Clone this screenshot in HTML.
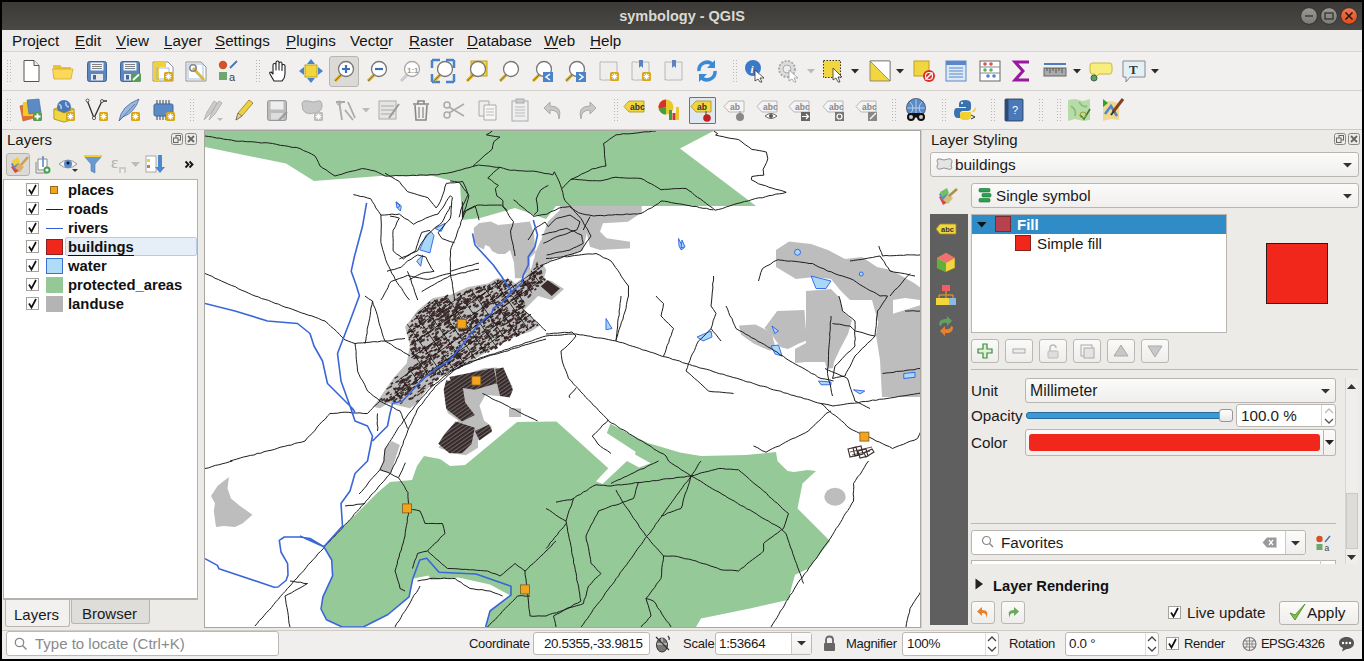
<!DOCTYPE html>
<html><head><meta charset="utf-8">
<style>
*{box-sizing:border-box;margin:0;padding:0}
html,body{width:1364px;height:661px;overflow:hidden;background:#000;font-family:"Liberation Sans",sans-serif;color:#000;position:relative}
.a{position:absolute}
u{text-decoration:none;border-bottom:1.5px solid #141414;display:inline-block;line-height:14px}
svg{overflow:visible}
</style></head><body>
<div class="a" style="left:2px;top:2px;width:1360px;height:28px;background:linear-gradient(#3b3a36,#4a4844)"></div>
<div class="a" style="left:0px;top:8.73px;font-size:14.5px;line-height:14.5px;font-weight:bold;color:#dcd9d2;white-space:nowrap;width:1364px;text-align:center;left:0">symbology - QGIS</div>
<svg class="a" style="left:1299px;top:6px" width="20" height="20" viewBox="0 0 20 20"><defs><linearGradient id="gc" x1="0" y1="0" x2="0" y2="1"><stop offset="0" stop-color="#f07a55"/><stop offset="1" stop-color="#df4a1c"/></linearGradient><linearGradient id="gg" x1="0" y1="0" x2="0" y2="1"><stop offset="0" stop-color="#9a9994"/><stop offset="1" stop-color="#7c7b76"/></linearGradient></defs><g transform="translate(10,10)"><circle r="8.3" fill="url(#gg)" stroke="#2c2b28" stroke-width="0.8"/><path d="M-4,0H4" stroke="#3a3935" stroke-width="1.4"/></g></svg>
<svg class="a" style="left:1319px;top:6px" width="20" height="20" viewBox="0 0 20 20"><defs><linearGradient id="gc" x1="0" y1="0" x2="0" y2="1"><stop offset="0" stop-color="#f07a55"/><stop offset="1" stop-color="#df4a1c"/></linearGradient><linearGradient id="gg" x1="0" y1="0" x2="0" y2="1"><stop offset="0" stop-color="#9a9994"/><stop offset="1" stop-color="#7c7b76"/></linearGradient></defs><g transform="translate(10,10)"><circle r="8.3" fill="url(#gg)" stroke="#2c2b28" stroke-width="0.8"/><rect x="-4" y="-3" width="8" height="6" fill="none" stroke="#3a3935" stroke-width="1.4"/></g></svg>
<svg class="a" style="left:1339px;top:6px" width="20" height="20" viewBox="0 0 20 20"><defs><linearGradient id="gc" x1="0" y1="0" x2="0" y2="1"><stop offset="0" stop-color="#f07a55"/><stop offset="1" stop-color="#df4a1c"/></linearGradient><linearGradient id="gg" x1="0" y1="0" x2="0" y2="1"><stop offset="0" stop-color="#9a9994"/><stop offset="1" stop-color="#7c7b76"/></linearGradient></defs><g transform="translate(10,10)"><circle r="8.3" fill="url(#gc)" stroke="#2c2b28" stroke-width="0.8"/><path d="M-3.5,-3.5L3.5,3.5M3.5,-3.5L-3.5,3.5" stroke="#2a1a10" stroke-width="1.6"/></g></svg>
<div class="a" style="left:2px;top:30px;width:1360px;height:21px;background:#edecea"></div>
<div class="a" style="left:2px;top:51px;width:1360px;height:1px;background:#d9d6d1"></div>
<div class="a" style="left:12px;top:33.13px;font-size:15.2px;line-height:15.2px;font-weight:normal;color:#141414;white-space:nowrap;">Pro<u>j</u>ect</div>
<div class="a" style="left:75px;top:33.13px;font-size:15.2px;line-height:15.2px;font-weight:normal;color:#141414;white-space:nowrap;"><u>E</u>dit</div>
<div class="a" style="left:116px;top:33.13px;font-size:15.2px;line-height:15.2px;font-weight:normal;color:#141414;white-space:nowrap;"><u>V</u>iew</div>
<div class="a" style="left:164px;top:33.13px;font-size:15.2px;line-height:15.2px;font-weight:normal;color:#141414;white-space:nowrap;"><u>L</u>ayer</div>
<div class="a" style="left:215px;top:33.13px;font-size:15.2px;line-height:15.2px;font-weight:normal;color:#141414;white-space:nowrap;"><u>S</u>ettings</div>
<div class="a" style="left:286px;top:33.13px;font-size:15.2px;line-height:15.2px;font-weight:normal;color:#141414;white-space:nowrap;"><u>P</u>lugins</div>
<div class="a" style="left:350px;top:33.13px;font-size:15.2px;line-height:15.2px;font-weight:normal;color:#141414;white-space:nowrap;">Vect<u>o</u>r</div>
<div class="a" style="left:409px;top:33.13px;font-size:15.2px;line-height:15.2px;font-weight:normal;color:#141414;white-space:nowrap;"><u>R</u>aster</div>
<div class="a" style="left:467px;top:33.13px;font-size:15.2px;line-height:15.2px;font-weight:normal;color:#141414;white-space:nowrap;"><u>D</u>atabase</div>
<div class="a" style="left:544px;top:33.13px;font-size:15.2px;line-height:15.2px;font-weight:normal;color:#141414;white-space:nowrap;"><u>W</u>eb</div>
<div class="a" style="left:590px;top:33.13px;font-size:15.2px;line-height:15.2px;font-weight:normal;color:#141414;white-space:nowrap;"><u>H</u>elp</div>
<div class="a" style="left:2px;top:52px;width:1360px;height:38px;background:#f1f0ee"></div>
<div class="a" style="left:2px;top:90px;width:1360px;height:1px;background:#d4d1cc"></div>
<div class="a" style="left:2px;top:91px;width:1360px;height:38px;background:#f1f0ee"></div>
<div class="a" style="left:2px;top:129px;width:1360px;height:1px;background:#cdcac5"></div>
<svg class="a" style="left:7px;top:60px" width="4" height="22" viewBox="0 0 4 22"><rect x="0" y="0" width="1" height="1" fill="#b9b6b1"/><rect x="0" y="3" width="1" height="1" fill="#b9b6b1"/><rect x="0" y="6" width="1" height="1" fill="#b9b6b1"/><rect x="0" y="9" width="1" height="1" fill="#b9b6b1"/><rect x="0" y="12" width="1" height="1" fill="#b9b6b1"/><rect x="0" y="15" width="1" height="1" fill="#b9b6b1"/><rect x="0" y="18" width="1" height="1" fill="#b9b6b1"/><rect x="0" y="21" width="1" height="1" fill="#b9b6b1"/><rect x="3" y="0" width="1" height="1" fill="#b9b6b1"/><rect x="3" y="3" width="1" height="1" fill="#b9b6b1"/><rect x="3" y="6" width="1" height="1" fill="#b9b6b1"/><rect x="3" y="9" width="1" height="1" fill="#b9b6b1"/><rect x="3" y="12" width="1" height="1" fill="#b9b6b1"/><rect x="3" y="15" width="1" height="1" fill="#b9b6b1"/><rect x="3" y="18" width="1" height="1" fill="#b9b6b1"/><rect x="3" y="21" width="1" height="1" fill="#b9b6b1"/></svg>
<svg class="a" style="left:7px;top:99px" width="4" height="22" viewBox="0 0 4 22"><rect x="0" y="0" width="1" height="1" fill="#b9b6b1"/><rect x="0" y="3" width="1" height="1" fill="#b9b6b1"/><rect x="0" y="6" width="1" height="1" fill="#b9b6b1"/><rect x="0" y="9" width="1" height="1" fill="#b9b6b1"/><rect x="0" y="12" width="1" height="1" fill="#b9b6b1"/><rect x="0" y="15" width="1" height="1" fill="#b9b6b1"/><rect x="0" y="18" width="1" height="1" fill="#b9b6b1"/><rect x="0" y="21" width="1" height="1" fill="#b9b6b1"/><rect x="3" y="0" width="1" height="1" fill="#b9b6b1"/><rect x="3" y="3" width="1" height="1" fill="#b9b6b1"/><rect x="3" y="6" width="1" height="1" fill="#b9b6b1"/><rect x="3" y="9" width="1" height="1" fill="#b9b6b1"/><rect x="3" y="12" width="1" height="1" fill="#b9b6b1"/><rect x="3" y="15" width="1" height="1" fill="#b9b6b1"/><rect x="3" y="18" width="1" height="1" fill="#b9b6b1"/><rect x="3" y="21" width="1" height="1" fill="#b9b6b1"/></svg>
<svg class="a" style="left:19px;top:59px" width="24" height="24" viewBox="0 0 24 24"><path d="M5,1.5H15L20,6.5V22.5H5z" fill="#fff" stroke="#555" stroke-width="1"/><path d="M15,1.5V6.5H20" fill="#eee" stroke="#555" stroke-width="1"/></svg>
<svg class="a" style="left:51px;top:59px" width="24" height="24" viewBox="0 0 24 24"><path d="M2,6H9L11,8H20V19H2z" fill="#e8c23a"/><path d="M1.5,10H22L20,20H3z" fill="#fcd85a" stroke="#d4ac30" stroke-width="0.8"/></svg>
<svg class="a" style="left:85px;top:59px" width="24" height="24" viewBox="0 0 24 24"><rect x="2.5" y="2.5" width="19" height="20" rx="2" fill="#5b86bf" stroke="#3e689e"/><rect x="5.5" y="3.5" width="13" height="8" fill="#f4f4f4"/><path d="M7,5.5H17M7,7.5H17M7,9.5H17" stroke="#666" stroke-width="0.8"/><rect x="6" y="15" width="12" height="6.5" fill="#e8e8e8"/><rect x="8" y="16" width="3" height="4.5" fill="#3e689e"/></svg>
<svg class="a" style="left:118px;top:59px" width="24" height="24" viewBox="0 0 24 24"><rect x="2.5" y="2.5" width="19" height="20" rx="2" fill="#5b86bf" stroke="#3e689e"/><rect x="5.5" y="3.5" width="13" height="8" fill="#f4f4f4"/><path d="M7,5.5H17M7,7.5H17M7,9.5H17" stroke="#666" stroke-width="0.8"/><rect x="6" y="15" width="12" height="6.5" fill="#e8e8e8"/><rect x="8" y="16" width="3" height="4.5" fill="#3e689e"/><rect x="13" y="14" width="10" height="9" rx="1.5" fill="#5a9a5a"/><path d="M15,21L21,15.5" stroke="#fff" stroke-width="1.8"/></svg>
<svg class="a" style="left:151px;top:59px" width="24" height="24" viewBox="0 0 24 24"><path d="M2,3H17L22,8V22H2z" fill="#fff" stroke="#777" stroke-width="0.8"/><rect x="3" y="3" width="5" height="19" fill="#f0d040"/><rect x="3" y="3" width="12" height="5" fill="#f0d040"/><rect x="6" y="9" width="12" height="11" fill="none" stroke="#8aaee0" stroke-width="0.8"/><rect x="13" y="13" width="9" height="9" rx="1.5" fill="#d8a818"/><path d="M17.5,14.5V20.5M14.5,17.5H20.5M15.4,15.4L19.6,19.6M19.6,15.4L15.4,19.6" stroke="#fff" stroke-width="1.2"/></svg>
<svg class="a" style="left:184px;top:59px" width="24" height="24" viewBox="0 0 24 24"><path d="M2,3H17L22,8V22H2z" fill="#fff" stroke="#777" stroke-width="0.8"/><rect x="4" y="5" width="15" height="15" fill="none" stroke="#8aaee0" stroke-width="0.8"/><path d="M9,9L20,21" stroke="#d8b84a" stroke-width="3"/><circle cx="9" cy="9" r="3.2" fill="none" stroke="#888" stroke-width="1.6"/></svg>
<svg class="a" style="left:216px;top:59px" width="24" height="24" viewBox="0 0 24 24"><circle cx="7" cy="6" r="4.2" fill="#d4522a"/><path d="M14,9L21,2" stroke="#4a74b0" stroke-width="1.8"/><rect x="3" y="13" width="8" height="8" fill="#6ea870"/><text x="13" y="22" font-size="11" font-family="Liberation Sans" fill="#444">a</text></svg>
<svg class="a" style="left:256px;top:60px" width="4" height="22" viewBox="0 0 4 22"><rect x="0" y="0" width="1" height="1" fill="#b9b6b1"/><rect x="0" y="3" width="1" height="1" fill="#b9b6b1"/><rect x="0" y="6" width="1" height="1" fill="#b9b6b1"/><rect x="0" y="9" width="1" height="1" fill="#b9b6b1"/><rect x="0" y="12" width="1" height="1" fill="#b9b6b1"/><rect x="0" y="15" width="1" height="1" fill="#b9b6b1"/><rect x="0" y="18" width="1" height="1" fill="#b9b6b1"/><rect x="0" y="21" width="1" height="1" fill="#b9b6b1"/><rect x="3" y="0" width="1" height="1" fill="#b9b6b1"/><rect x="3" y="3" width="1" height="1" fill="#b9b6b1"/><rect x="3" y="6" width="1" height="1" fill="#b9b6b1"/><rect x="3" y="9" width="1" height="1" fill="#b9b6b1"/><rect x="3" y="12" width="1" height="1" fill="#b9b6b1"/><rect x="3" y="15" width="1" height="1" fill="#b9b6b1"/><rect x="3" y="18" width="1" height="1" fill="#b9b6b1"/><rect x="3" y="21" width="1" height="1" fill="#b9b6b1"/></svg>
<svg class="a" style="left:266px;top:59px" width="24" height="24" viewBox="0 0 24 24"><path d="M8,22L4,15Q3,13 5,13L7,15V6Q7,4.5 8.5,4.5Q10,4.5 10,6V11V3.5Q10,2 11.5,2Q13,2 13,3.5V11V4.5Q13,3 14.5,3Q16,3 16,4.5V11.5V7Q16,5.5 17.5,5.5Q19,5.5 19,7V15Q19,19 16,22z" fill="#fff" stroke="#222" stroke-width="1.1" stroke-linejoin="round"/></svg>
<svg class="a" style="left:299px;top:59px" width="24" height="24" viewBox="0 0 24 24"><rect x="6" y="6" width="12" height="12" fill="#f2d640" stroke="#c0a020"/><path d="M12,0L16,5H8zM12,24L16,19H8zM0,12L5,8V16zM24,12L19,8V16z" fill="#4a84c8"/></svg>
<div class="a" style="left:329px;top:56px;width:30px;height:31px;background:#dcdad6;border:1px solid #b9b6b1;border-radius:3px"></div>
<svg class="a" style="left:332px;top:59px" width="24" height="24" viewBox="0 0 24 24"><path d="M3,22L9,16" stroke="#d8a818" stroke-width="3"/><path d="M3,22L9,16" stroke="#555" stroke-width="0.6"/><circle cx="14" cy="10" r="7.5" fill="#fff" stroke="#777" stroke-width="1.3"/><path d="M10,10H18M14,6V14" stroke="#3b6fb8" stroke-width="2.2"/></svg>
<svg class="a" style="left:365px;top:59px" width="24" height="24" viewBox="0 0 24 24"><path d="M3,22L9,16" stroke="#d8a818" stroke-width="3"/><path d="M3,22L9,16" stroke="#555" stroke-width="0.6"/><circle cx="14" cy="10" r="7.5" fill="#fff" stroke="#777" stroke-width="1.3"/><path d="M10,10H18" stroke="#3b6fb8" stroke-width="2.2"/></svg>
<svg class="a" style="left:398px;top:59px" width="24" height="24" viewBox="0 0 24 24"><path d="M3,22L9,16" stroke="#ccc" stroke-width="3"/><circle cx="14" cy="10" r="7.5" fill="#fff" stroke="#aaa" stroke-width="1.3"/><text x="9" y="13.5" font-size="8" font-weight="bold" font-family="Liberation Sans" fill="#999">1:1</text></svg>
<svg class="a" style="left:431px;top:59px" width="24" height="24" viewBox="0 0 24 24"><path d="M1,1H9M1,1V9M23,1H15M23,1V9M1,23H9M1,23V15M23,23H15M23,23V15" stroke="#4a84c8" stroke-width="2.5"/><path d="M3,22L9,16" stroke="#d8a818" stroke-width="3"/><path d="M3,22L9,16" stroke="#555" stroke-width="0.6"/><circle cx="14" cy="10" r="7.5" fill="#fff" stroke="#777" stroke-width="1.3"/></svg>
<svg class="a" style="left:464px;top:59px" width="24" height="24" viewBox="0 0 24 24"><rect x="7" y="2" width="16" height="15" fill="#f2d640" stroke="#c0a020"/><path d="M3,22L9,16" stroke="#d8a818" stroke-width="3"/><path d="M3,22L9,16" stroke="#555" stroke-width="0.6"/><circle cx="14" cy="10" r="7.5" fill="#fff" stroke="#777" stroke-width="1.3"/></svg>
<svg class="a" style="left:497px;top:59px" width="24" height="24" viewBox="0 0 24 24"><rect x="9" y="3" width="10" height="10" fill="#ddd"/><path d="M3,22L9,16" stroke="#d8a818" stroke-width="3"/><path d="M3,22L9,16" stroke="#555" stroke-width="0.6"/><circle cx="14" cy="10" r="7.5" fill="#fff" stroke="#777" stroke-width="1.3"/></svg>
<svg class="a" style="left:530px;top:59px" width="24" height="24" viewBox="0 0 24 24"><path d="M3,22L9,16" stroke="#d8a818" stroke-width="3"/><path d="M3,22L9,16" stroke="#555" stroke-width="0.6"/><circle cx="14" cy="10" r="7.5" fill="#fff" stroke="#777" stroke-width="1.3"/><rect x="13" y="13" width="10" height="10" fill="#4a84c8"/><path d="M20,15L16,18L20,21" stroke="#fff" stroke-width="1.5" fill="none"/></svg>
<svg class="a" style="left:563px;top:59px" width="24" height="24" viewBox="0 0 24 24"><path d="M3,22L9,16" stroke="#d8a818" stroke-width="3"/><path d="M3,22L9,16" stroke="#555" stroke-width="0.6"/><circle cx="14" cy="10" r="7.5" fill="#fff" stroke="#777" stroke-width="1.3"/><rect x="13" y="13" width="10" height="10" fill="#4a84c8"/><path d="M16,15L20,18L16,21" stroke="#fff" stroke-width="1.5" fill="none"/></svg>
<svg class="a" style="left:597px;top:59px" width="24" height="24" viewBox="0 0 24 24"><path d="M3,3C6,2 6,4 8,3H20V21H8C6,22 5,20 3,21z" fill="#eee" stroke="#aaa" stroke-width="0.8"/><rect x="13" y="13" width="9" height="9" rx="1.5" fill="#d8a818"/><path d="M17.5,14.5V20.5M14.5,17.5H20.5M15.4,15.4L19.6,19.6M19.6,15.4L15.4,19.6" stroke="#fff" stroke-width="1.2"/></svg>
<svg class="a" style="left:629px;top:59px" width="24" height="24" viewBox="0 0 24 24"><path d="M3,3C6,2 6,4 8,3H20V21H8C6,22 5,20 3,21z" fill="#eee" stroke="#aaa" stroke-width="0.8"/><path d="M10,1V9L12,7L14,9V1z" fill="#5a84c0"/><rect x="13" y="13" width="9" height="9" rx="1.5" fill="#d8a818"/><path d="M17.5,14.5V20.5M14.5,17.5H20.5M15.4,15.4L19.6,19.6M19.6,15.4L15.4,19.6" stroke="#fff" stroke-width="1.2"/></svg>
<svg class="a" style="left:662px;top:59px" width="24" height="24" viewBox="0 0 24 24"><path d="M3,3C6,2 6,4 8,3H20V21H8C6,22 5,20 3,21z" fill="#eee" stroke="#aaa" stroke-width="0.8"/><path d="M10,1V9L12,7L14,9V1z" fill="#5a84c0"/></svg>
<svg class="a" style="left:695px;top:59px" width="24" height="24" viewBox="0 0 24 24"><path d="M4,12A8,8 0 0 1 18,6" stroke="#3b8ad8" stroke-width="3.5" fill="none"/><path d="M20,1V9H12z" fill="#3b8ad8"/><path d="M20,12A8,8 0 0 1 6,18" stroke="#3b8ad8" stroke-width="3.5" fill="none"/><path d="M4,23V15H12z" fill="#3b8ad8"/></svg>
<svg class="a" style="left:733px;top:60px" width="4" height="22" viewBox="0 0 4 22"><rect x="0" y="0" width="1" height="1" fill="#b9b6b1"/><rect x="0" y="3" width="1" height="1" fill="#b9b6b1"/><rect x="0" y="6" width="1" height="1" fill="#b9b6b1"/><rect x="0" y="9" width="1" height="1" fill="#b9b6b1"/><rect x="0" y="12" width="1" height="1" fill="#b9b6b1"/><rect x="0" y="15" width="1" height="1" fill="#b9b6b1"/><rect x="0" y="18" width="1" height="1" fill="#b9b6b1"/><rect x="0" y="21" width="1" height="1" fill="#b9b6b1"/><rect x="3" y="0" width="1" height="1" fill="#b9b6b1"/><rect x="3" y="3" width="1" height="1" fill="#b9b6b1"/><rect x="3" y="6" width="1" height="1" fill="#b9b6b1"/><rect x="3" y="9" width="1" height="1" fill="#b9b6b1"/><rect x="3" y="12" width="1" height="1" fill="#b9b6b1"/><rect x="3" y="15" width="1" height="1" fill="#b9b6b1"/><rect x="3" y="18" width="1" height="1" fill="#b9b6b1"/><rect x="3" y="21" width="1" height="1" fill="#b9b6b1"/></svg>
<svg class="a" style="left:743px;top:59px" width="24" height="24" viewBox="0 0 24 24"><circle cx="10" cy="9" r="8" fill="#3b78c8"/><text x="7.5" y="14" font-size="11" font-style="italic" font-weight="bold" font-family="Liberation Serif" fill="#fff">i</text><path d="M12,11L21,19L17,19L19,23L17,23L15,20L12,22z" fill="#fff" stroke="#333" stroke-width="0.8"/></svg>
<svg class="a" style="left:777px;top:59px" width="24" height="24" viewBox="0 0 24 24"><circle cx="10" cy="10" r="8" fill="#ddd" stroke="#aaa" stroke-width="2" stroke-dasharray="2 1.5"/><circle cx="10" cy="10" r="4" fill="#eee" stroke="#aaa"/><path d="M12,11L21,19L17,19L19,23L17,23L15,20L12,22z" fill="#fff" stroke="#999" stroke-width="0.8"/></svg>
<svg class="a" style="left:807px;top:69px" width="8" height="5" viewBox="0 0 8 5"><path d="M0,0H8L4,4.5z" fill="#bbb"/></svg>
<svg class="a" style="left:822px;top:59px" width="24" height="24" viewBox="0 0 24 24"><rect x="1.5" y="1.5" width="17" height="17" fill="#f2d640" stroke="#333" stroke-dasharray="1.5 1.5"/><path d="M11,9L20,18L16,18L18,23L16,23L14,19L11,21z" fill="#fff" stroke="#333" stroke-width="0.8"/></svg>
<svg class="a" style="left:851px;top:69px" width="8" height="5" viewBox="0 0 8 5"><path d="M0,0H8L4,4.5z" fill="#2a2a2a"/></svg>
<svg class="a" style="left:868px;top:59px" width="24" height="24" viewBox="0 0 24 24"><path d="M2,2H22V22H2z" fill="#f2d640" stroke="#777" stroke-width="0.8"/><path d="M2,2L22,22H22V2z" fill="#fff" stroke="#777" stroke-width="0.8"/></svg>
<svg class="a" style="left:896px;top:69px" width="8" height="5" viewBox="0 0 8 5"><path d="M0,0H8L4,4.5z" fill="#2a2a2a"/></svg>
<svg class="a" style="left:912px;top:59px" width="24" height="24" viewBox="0 0 24 24"><rect x="2" y="2" width="15" height="15" fill="#f2d640" stroke="#c0a020"/><circle cx="17" cy="17" r="6" fill="#d8302a"/><path d="M13.5,20.5L20.5,13.5" stroke="#fff" stroke-width="1.5"/><circle cx="17" cy="17" r="3.5" fill="none" stroke="#fff" stroke-width="1.2"/></svg>
<svg class="a" style="left:944px;top:59px" width="24" height="24" viewBox="0 0 24 24"><rect x="2" y="2" width="20" height="20" fill="#dce8f6" stroke="#5a88c8"/><rect x="2" y="2" width="20" height="4" fill="#5a88c8"/><path d="M5,9H19M5,12H19M5,15H19M5,18H19" stroke="#5a88c8" stroke-width="1.2"/></svg>
<svg class="a" style="left:978px;top:59px" width="24" height="24" viewBox="0 0 24 24"><rect x="2" y="2" width="20" height="20" fill="#fff" stroke="#666"/><path d="M2,8H22M2,14H22" stroke="#888"/><circle cx="7" cy="5" r="1.8" fill="#e05050"/><circle cx="13" cy="5" r="1.8" fill="#e05050"/><circle cx="7" cy="11" r="1.8" fill="#60b060"/><circle cx="13" cy="11" r="1.8" fill="#60b060"/><circle cx="10" cy="17" r="1.8" fill="#5080d0"/><circle cx="16" cy="17" r="1.8" fill="#5080d0"/></svg>
<svg class="a" style="left:1010px;top:59px" width="24" height="24" viewBox="0 0 24 24"><path d="M19,3H5L13,12L5,21H19" fill="none" stroke="#9a18a0" stroke-width="3"/></svg>
<svg class="a" style="left:1043px;top:59px" width="24" height="24" viewBox="0 0 24 24"><rect x="1" y="9" width="22" height="8" fill="#aaa" stroke="#666"/><path d="M4,9V12M7,9V14M10,9V12M13,9V14M16,9V12M19,9V14" stroke="#444" stroke-width="0.8"/><path d="M1,5H23" stroke="#3b6fb8" stroke-width="1.8"/></svg>
<svg class="a" style="left:1073px;top:69px" width="8" height="5" viewBox="0 0 8 5"><path d="M0,0H8L4,4.5z" fill="#2a2a2a"/></svg>
<svg class="a" style="left:1089px;top:59px" width="24" height="24" viewBox="0 0 24 24"><path d="M3,4H21Q23,4 23,7V12Q23,15 21,15H10L6,19V15H3Q1,15 1,12V7Q1,4 3,4z" fill="#f8ee80" stroke="#c8b840"/><circle cx="5" cy="19" r="3" fill="#60a060" stroke="#406040"/></svg>
<svg class="a" style="left:1122px;top:59px" width="24" height="24" viewBox="0 0 24 24"><path d="M1,2H23V18H8L4,23V18H1z" fill="#e4f0f8" stroke="#888"/><text x="7" y="15" font-size="13" font-weight="bold" font-family="Liberation Serif" fill="#333">T</text></svg>
<svg class="a" style="left:1151px;top:69px" width="8" height="5" viewBox="0 0 8 5"><path d="M0,0H8L4,4.5z" fill="#2a2a2a"/></svg>
<svg class="a" style="left:19px;top:98px" width="24" height="24" viewBox="0 0 24 24"><path d="M1,8L12,5L15,20L4,23z" fill="#e07030" stroke="#b05020" stroke-width="0.6"/><path d="M4,4H16V18H4z" fill="#f2c828"/><path d="M8,2L20,1L22,14L10,16z" fill="#5b8ac6" stroke="#3e6aa0" stroke-width="0.6"/><rect x="14" y="14" width="9" height="9" rx="1.5" fill="#5a9a5a"/><path d="M18.5,15.5V21.5M15.5,18.5H21.5" stroke="#fff" stroke-width="1.8"/></svg>
<svg class="a" style="left:52px;top:98px" width="24" height="24" viewBox="0 0 24 24"><path d="M2,11L12,7L22,11V21L12,24L2,21z" fill="#e8c82a" stroke="#a08820" stroke-width="0.6"/><circle cx="12" cy="9" r="7" fill="#4a78b8"/><path d="M7,6Q10,8 9,11M14,4Q13,8 17,9" stroke="#b8d0f0" stroke-width="1.5" fill="none"/><path d="M2,11L12,15L22,11V21L12,24L2,21z" fill="#f2d640" stroke="#a08820" stroke-width="0.6"/><rect x="14" y="14" width="9" height="9" rx="1.5" fill="#d8a818"/><path d="M18.5,15.5V21.5M15.5,18.5H21.5M16.4,16.4L20.6,20.6M20.6,16.4L16.4,20.6" stroke="#fff" stroke-width="1.2"/></svg>
<svg class="a" style="left:85px;top:98px" width="24" height="24" viewBox="0 0 24 24"><path d="M2,2L9,20L17,3L22,3" stroke="#333" stroke-width="1.3" fill="none"/><circle cx="2.5" cy="2.5" r="1.5" fill="#fff" stroke="#333" stroke-width="0.8"/><circle cx="9" cy="20" r="1.6" fill="#fff" stroke="#333" stroke-width="0.8"/><circle cx="17" cy="3" r="1.5" fill="#fff" stroke="#333" stroke-width="0.8"/><rect x="14" y="14" width="9" height="9" rx="1.5" fill="#d8a818"/><path d="M18.5,15.5V21.5M15.5,18.5H21.5M16.4,16.4L20.6,20.6M20.6,16.4L16.4,20.6" stroke="#fff" stroke-width="1.2"/></svg>
<svg class="a" style="left:117px;top:98px" width="24" height="24" viewBox="0 0 24 24"><path d="M2,23Q4,8 22,1Q18,14 6,19z" fill="#9cb8e0" stroke="#4a6a9a" stroke-width="0.8"/><path d="M2,23L18,6" stroke="#4a6a9a" stroke-width="0.8"/><rect x="14" y="14" width="9" height="9" rx="1.5" fill="#d8a818"/><path d="M18.5,15.5V21.5M15.5,18.5H21.5M16.4,16.4L20.6,20.6M20.6,16.4L16.4,20.6" stroke="#fff" stroke-width="1.2"/></svg>
<svg class="a" style="left:152px;top:98px" width="24" height="24" viewBox="0 0 24 24"><rect x="2" y="6" width="19" height="12" rx="1.5" fill="#5b8ac6" stroke="#3e6aa0"/><path d="M5,2V6M8,2V6M11,2V6M14,2V6M17,2V6M5,18V22M8,18V22M11,18V22M14,18V22M17,18V22" stroke="#345" stroke-width="1"/><rect x="14" y="14" width="9" height="9" rx="1.5" fill="#d8a818"/><path d="M18.5,15.5V21.5M15.5,18.5H21.5M16.4,16.4L20.6,20.6M20.6,16.4L16.4,20.6" stroke="#fff" stroke-width="1.2"/></svg>
<svg class="a" style="left:190px;top:99px" width="4" height="22" viewBox="0 0 4 22"><rect x="0" y="0" width="1" height="1" fill="#b9b6b1"/><rect x="0" y="3" width="1" height="1" fill="#b9b6b1"/><rect x="0" y="6" width="1" height="1" fill="#b9b6b1"/><rect x="0" y="9" width="1" height="1" fill="#b9b6b1"/><rect x="0" y="12" width="1" height="1" fill="#b9b6b1"/><rect x="0" y="15" width="1" height="1" fill="#b9b6b1"/><rect x="0" y="18" width="1" height="1" fill="#b9b6b1"/><rect x="0" y="21" width="1" height="1" fill="#b9b6b1"/><rect x="3" y="0" width="1" height="1" fill="#b9b6b1"/><rect x="3" y="3" width="1" height="1" fill="#b9b6b1"/><rect x="3" y="6" width="1" height="1" fill="#b9b6b1"/><rect x="3" y="9" width="1" height="1" fill="#b9b6b1"/><rect x="3" y="12" width="1" height="1" fill="#b9b6b1"/><rect x="3" y="15" width="1" height="1" fill="#b9b6b1"/><rect x="3" y="18" width="1" height="1" fill="#b9b6b1"/><rect x="3" y="21" width="1" height="1" fill="#b9b6b1"/></svg>
<svg class="a" style="left:200px;top:98px" width="24" height="24" viewBox="0 0 24 24"><path d="M4,22L7,14L14,3L17,5L10,16z" fill="#ccc" stroke="#aaa" stroke-width="0.8"/><path d="M9,22L12,14L19,3L22,5L15,16z" fill="#ccc" stroke="#aaa" stroke-width="0.8"/><path d="M17,20H23L20,23z" fill="#bbb"/></svg>
<svg class="a" style="left:232px;top:98px" width="24" height="24" viewBox="0 0 24 24"><path d="M4,22L6,15L17,2L21,5L10,18z" fill="#f0d040" stroke="#8a7a30" stroke-width="0.8"/><path d="M4,22L6,15L10,18z" fill="#e8d0a0" stroke="#555" stroke-width="0.6"/></svg>
<svg class="a" style="left:265px;top:98px" width="24" height="24" viewBox="0 0 24 24"><rect x="2.5" y="2.5" width="19" height="20" rx="2" fill="#bbb" stroke="#999"/><rect x="5.5" y="3.5" width="13" height="8" fill="#eee"/><rect x="6" y="15" width="12" height="6.5" fill="#ddd"/><path d="M14,22L22,14" stroke="#999" stroke-width="2"/></svg>
<svg class="a" style="left:300px;top:98px" width="24" height="24" viewBox="0 0 24 24"><path d="M2,6Q2,2 8,3Q14,5 18,3Q22,2 22,8Q22,14 14,15Q6,17 3,12z" fill="#c8c8c8" stroke="#aaa"/><rect x="14" y="14" width="9" height="9" rx="1.5" fill="#bbb"/><path d="M18.5,15.5V21.5M15.5,18.5H21.5M16.4,16.4L20.6,20.6M20.6,16.4L16.4,20.6" stroke="#fff" stroke-width="1.2"/></svg>
<svg class="a" style="left:333px;top:98px" width="24" height="24" viewBox="0 0 24 24"><path d="M3,4L12,4M6,3L9,22M15,4L22,20M12,12L20,22" stroke="#aaa" stroke-width="1.8"/><circle cx="6" cy="5" r="2" fill="none" stroke="#aaa"/></svg>
<svg class="a" style="left:362px;top:108px" width="8" height="5" viewBox="0 0 8 5"><path d="M0,0H8L4,4.5z" fill="#bbb"/></svg>
<svg class="a" style="left:377px;top:98px" width="24" height="24" viewBox="0 0 24 24"><rect x="2" y="3" width="17" height="18" fill="#e4e4e4" stroke="#aaa"/><path d="M4,8H17M4,12H17M4,16H17" stroke="#aaa"/><path d="M12,20L22,6" stroke="#999" stroke-width="2"/></svg>
<svg class="a" style="left:409px;top:98px" width="24" height="24" viewBox="0 0 24 24"><path d="M4,6H20M9,6V3H15V6" stroke="#888" stroke-width="1.6" fill="none"/><path d="M6,7L7,22H17L18,7" fill="none" stroke="#888" stroke-width="1.6"/><path d="M10,9V20M14,9V20" stroke="#888" stroke-width="1.2"/></svg>
<svg class="a" style="left:442px;top:98px" width="24" height="24" viewBox="0 0 24 24"><circle cx="5" cy="7" r="3" fill="none" stroke="#aaa" stroke-width="1.5"/><circle cx="5" cy="17" r="3" fill="none" stroke="#aaa" stroke-width="1.5"/><path d="M7,9L22,18M7,15L22,6" stroke="#aaa" stroke-width="1.5"/></svg>
<svg class="a" style="left:476px;top:98px" width="24" height="24" viewBox="0 0 24 24"><path d="M3,3H13V18H3z" fill="#eee" stroke="#aaa"/><path d="M8,7H20V22H8z" fill="#f6f6f6" stroke="#aaa"/><path d="M10,11H18M10,14H18M10,17H18" stroke="#bbb"/></svg>
<svg class="a" style="left:508px;top:98px" width="24" height="24" viewBox="0 0 24 24"><rect x="4" y="3" width="16" height="20" fill="#eee" stroke="#aaa"/><rect x="8" y="1" width="8" height="4" fill="#ccc" stroke="#aaa"/><path d="M7,9H17M7,12H17M7,15H17M7,18H17" stroke="#bbb"/></svg>
<svg class="a" style="left:541px;top:98px" width="24" height="24" viewBox="0 0 24 24"><path d="M9,4L3,10L9,16V12Q18,12 18,21Q22,8 9,8z" fill="#c8c8c8" stroke="#aaa"/></svg>
<svg class="a" style="left:575px;top:98px" width="24" height="24" viewBox="0 0 24 24"><path d="M15,4L21,10L15,16V12Q6,12 6,21Q2,8 15,8z" fill="#c8c8c8" stroke="#aaa"/></svg>
<svg class="a" style="left:614px;top:99px" width="4" height="22" viewBox="0 0 4 22"><rect x="0" y="0" width="1" height="1" fill="#b9b6b1"/><rect x="0" y="3" width="1" height="1" fill="#b9b6b1"/><rect x="0" y="6" width="1" height="1" fill="#b9b6b1"/><rect x="0" y="9" width="1" height="1" fill="#b9b6b1"/><rect x="0" y="12" width="1" height="1" fill="#b9b6b1"/><rect x="0" y="15" width="1" height="1" fill="#b9b6b1"/><rect x="0" y="18" width="1" height="1" fill="#b9b6b1"/><rect x="0" y="21" width="1" height="1" fill="#b9b6b1"/><rect x="3" y="0" width="1" height="1" fill="#b9b6b1"/><rect x="3" y="3" width="1" height="1" fill="#b9b6b1"/><rect x="3" y="6" width="1" height="1" fill="#b9b6b1"/><rect x="3" y="9" width="1" height="1" fill="#b9b6b1"/><rect x="3" y="12" width="1" height="1" fill="#b9b6b1"/><rect x="3" y="15" width="1" height="1" fill="#b9b6b1"/><rect x="3" y="18" width="1" height="1" fill="#b9b6b1"/><rect x="3" y="21" width="1" height="1" fill="#b9b6b1"/></svg>
<svg class="a" style="left:623px;top:98px" width="24" height="24" viewBox="0 0 24 24"><path d="M1,8.5L6,3H21V14H6z" fill="#f2d640" stroke="#b09020" stroke-width="0.8"/><text x="7" y="12" font-size="8.5" font-weight="bold" font-family="Liberation Sans" fill="#333">abc</text></svg>
<svg class="a" style="left:657px;top:98px" width="24" height="24" viewBox="0 0 24 24"><circle cx="9" cy="9" r="7.5" fill="#e8c82a"/><path d="M9,9V1.5A7.5,7.5 0 0 0 1.8,11z" fill="#d83030"/><path d="M9,9L1.8,11A7.5,7.5 0 0 0 9,16.5z" fill="#40a040"/><rect x="12" y="12" width="3" height="10" fill="#40a040"/><rect x="15.5" y="15" width="3" height="7" fill="#d83030"/><rect x="19" y="9" width="3" height="13" fill="#e8c82a"/></svg>
<div class="a" style="left:689px;top:97px;width:27px;height:27px;background:#dfe7f1;border:1.5px solid #3a7ad8;border-radius:1px"></div>
<svg class="a" style="left:690px;top:98px" width="24" height="24" viewBox="0 0 24 24"><path d="M1,8.5L6,3H21V14H6z" fill="#f2d640" stroke="#b09020" stroke-width="0.8"/><text x="7" y="12" font-size="8.5" font-weight="bold" font-family="Liberation Sans" fill="#333">ab</text><path d="M16,13V18" stroke="#555" stroke-width="1.2"/><circle cx="17" cy="20" r="3.8" fill="#c02020"/></svg>
<svg class="a" style="left:723px;top:98px" width="24" height="24" viewBox="0 0 24 24"><path d="M1,8.5L6,3H21V14H6z" fill="#f4f4f4" stroke="#aaa" stroke-width="0.8"/><text x="7" y="12" font-size="8.5" font-weight="bold" font-family="Liberation Sans" fill="#888">ab</text><circle cx="17" cy="19" r="4" fill="#888"/><path d="M17,13V16" stroke="#888"/></svg>
<svg class="a" style="left:756px;top:98px" width="24" height="24" viewBox="0 0 24 24"><path d="M1,8.5L6,3H21V14H6z" fill="#f4f4f4" stroke="#aaa" stroke-width="0.8"/><text x="7" y="12" font-size="8.5" font-weight="bold" font-family="Liberation Sans" fill="#888">abc</text><path d="M9,18Q15,13 21,18Q15,23 9,18z" fill="#fff" stroke="#666"/><circle cx="15" cy="18" r="2" fill="#555"/></svg>
<svg class="a" style="left:788px;top:98px" width="24" height="24" viewBox="0 0 24 24"><path d="M1,8.5L6,3H21V14H6z" fill="#f4f4f4" stroke="#aaa" stroke-width="0.8"/><text x="7" y="12" font-size="8.5" font-weight="bold" font-family="Liberation Sans" fill="#888">abc</text><rect x="13" y="14" width="9" height="9" fill="#666"/><path d="M14,18.5H20M18,16L20.5,18.5L18,21" stroke="#fff" stroke-width="1.2" fill="none"/></svg>
<svg class="a" style="left:822px;top:98px" width="24" height="24" viewBox="0 0 24 24"><path d="M1,8.5L6,3H21V14H6z" fill="#f4f4f4" stroke="#aaa" stroke-width="0.8"/><text x="7" y="12" font-size="8.5" font-weight="bold" font-family="Liberation Sans" fill="#888">abc</text><rect x="13" y="14" width="9" height="9" fill="#777"/><circle cx="17.5" cy="18.5" r="2.5" fill="none" stroke="#fff" stroke-width="1.2"/></svg>
<svg class="a" style="left:855px;top:98px" width="24" height="24" viewBox="0 0 24 24"><path d="M1,8.5L6,3H21V14H6z" fill="#f4f4f4" stroke="#aaa" stroke-width="0.8"/><text x="7" y="12" font-size="8.5" font-weight="bold" font-family="Liberation Sans" fill="#888">abc</text><rect x="13" y="14" width="9" height="9" fill="#888"/><path d="M15,21L21,15" stroke="#fff" stroke-width="1.2"/></svg>
<svg class="a" style="left:892px;top:99px" width="4" height="22" viewBox="0 0 4 22"><rect x="0" y="0" width="1" height="1" fill="#b9b6b1"/><rect x="0" y="3" width="1" height="1" fill="#b9b6b1"/><rect x="0" y="6" width="1" height="1" fill="#b9b6b1"/><rect x="0" y="9" width="1" height="1" fill="#b9b6b1"/><rect x="0" y="12" width="1" height="1" fill="#b9b6b1"/><rect x="0" y="15" width="1" height="1" fill="#b9b6b1"/><rect x="0" y="18" width="1" height="1" fill="#b9b6b1"/><rect x="0" y="21" width="1" height="1" fill="#b9b6b1"/><rect x="3" y="0" width="1" height="1" fill="#b9b6b1"/><rect x="3" y="3" width="1" height="1" fill="#b9b6b1"/><rect x="3" y="6" width="1" height="1" fill="#b9b6b1"/><rect x="3" y="9" width="1" height="1" fill="#b9b6b1"/><rect x="3" y="12" width="1" height="1" fill="#b9b6b1"/><rect x="3" y="15" width="1" height="1" fill="#b9b6b1"/><rect x="3" y="18" width="1" height="1" fill="#b9b6b1"/><rect x="3" y="21" width="1" height="1" fill="#b9b6b1"/></svg>
<svg class="a" style="left:904px;top:98px" width="24" height="24" viewBox="0 0 24 24"><circle cx="12" cy="10" r="9.5" fill="#5a8ac8" stroke="#345" stroke-width="0.8"/><path d="M3,10H21M12,1V19M6,4Q12,10 6,16M18,4Q12,10 18,16" stroke="#cde" stroke-width="0.8" fill="none"/><circle cx="7" cy="19" r="4" fill="#111"/><circle cx="17" cy="19" r="4" fill="#111"/><rect x="7" y="15" width="10" height="4" fill="#111"/><circle cx="7" cy="19" r="2" fill="#ccc"/><circle cx="17" cy="19" r="2" fill="#ccc"/></svg>
<svg class="a" style="left:942px;top:99px" width="4" height="22" viewBox="0 0 4 22"><rect x="0" y="0" width="1" height="1" fill="#b9b6b1"/><rect x="0" y="3" width="1" height="1" fill="#b9b6b1"/><rect x="0" y="6" width="1" height="1" fill="#b9b6b1"/><rect x="0" y="9" width="1" height="1" fill="#b9b6b1"/><rect x="0" y="12" width="1" height="1" fill="#b9b6b1"/><rect x="0" y="15" width="1" height="1" fill="#b9b6b1"/><rect x="0" y="18" width="1" height="1" fill="#b9b6b1"/><rect x="0" y="21" width="1" height="1" fill="#b9b6b1"/><rect x="3" y="0" width="1" height="1" fill="#b9b6b1"/><rect x="3" y="3" width="1" height="1" fill="#b9b6b1"/><rect x="3" y="6" width="1" height="1" fill="#b9b6b1"/><rect x="3" y="9" width="1" height="1" fill="#b9b6b1"/><rect x="3" y="12" width="1" height="1" fill="#b9b6b1"/><rect x="3" y="15" width="1" height="1" fill="#b9b6b1"/><rect x="3" y="18" width="1" height="1" fill="#b9b6b1"/><rect x="3" y="21" width="1" height="1" fill="#b9b6b1"/></svg>
<svg class="a" style="left:953px;top:98px" width="24" height="24" viewBox="0 0 24 24"><path d="M12,2Q6,2 6,6V9H13V10H4Q1,10 1,15Q1,20 5,20H7V16Q7,13 10,13H15Q18,13 18,10V6Q18,2 12,2z" fill="#3a72b0"/><path d="M12,22Q18,22 18,18V15H11V14H20Q23,14 23,9" fill="#f2d030"/><path d="M7,17Q7,14 10,14H17Q18,14 18,15V18Q18,22 12,22Q8,22 7,20z" fill="#f2d030"/><circle cx="9" cy="5" r="1" fill="#fff"/><path d="M18,17L22,19L18,21" stroke="#333" fill="none" stroke-width="1"/></svg>
<svg class="a" style="left:991px;top:99px" width="4" height="22" viewBox="0 0 4 22"><rect x="0" y="0" width="1" height="1" fill="#b9b6b1"/><rect x="0" y="3" width="1" height="1" fill="#b9b6b1"/><rect x="0" y="6" width="1" height="1" fill="#b9b6b1"/><rect x="0" y="9" width="1" height="1" fill="#b9b6b1"/><rect x="0" y="12" width="1" height="1" fill="#b9b6b1"/><rect x="0" y="15" width="1" height="1" fill="#b9b6b1"/><rect x="0" y="18" width="1" height="1" fill="#b9b6b1"/><rect x="0" y="21" width="1" height="1" fill="#b9b6b1"/><rect x="3" y="0" width="1" height="1" fill="#b9b6b1"/><rect x="3" y="3" width="1" height="1" fill="#b9b6b1"/><rect x="3" y="6" width="1" height="1" fill="#b9b6b1"/><rect x="3" y="9" width="1" height="1" fill="#b9b6b1"/><rect x="3" y="12" width="1" height="1" fill="#b9b6b1"/><rect x="3" y="15" width="1" height="1" fill="#b9b6b1"/><rect x="3" y="18" width="1" height="1" fill="#b9b6b1"/><rect x="3" y="21" width="1" height="1" fill="#b9b6b1"/></svg>
<svg class="a" style="left:1002px;top:98px" width="24" height="24" viewBox="0 0 24 24"><rect x="3" y="1" width="18" height="22" rx="1" fill="#4a78b8" stroke="#234" stroke-width="0.8"/><rect x="3" y="1" width="3.5" height="22" fill="#2a4a78"/><text x="10" y="16" font-size="11" font-family="Liberation Sans" fill="#fff">?</text></svg>
<svg class="a" style="left:1039px;top:99px" width="4" height="22" viewBox="0 0 4 22"><rect x="0" y="0" width="1" height="1" fill="#b9b6b1"/><rect x="0" y="3" width="1" height="1" fill="#b9b6b1"/><rect x="0" y="6" width="1" height="1" fill="#b9b6b1"/><rect x="0" y="9" width="1" height="1" fill="#b9b6b1"/><rect x="0" y="12" width="1" height="1" fill="#b9b6b1"/><rect x="0" y="15" width="1" height="1" fill="#b9b6b1"/><rect x="0" y="18" width="1" height="1" fill="#b9b6b1"/><rect x="0" y="21" width="1" height="1" fill="#b9b6b1"/><rect x="3" y="0" width="1" height="1" fill="#b9b6b1"/><rect x="3" y="3" width="1" height="1" fill="#b9b6b1"/><rect x="3" y="6" width="1" height="1" fill="#b9b6b1"/><rect x="3" y="9" width="1" height="1" fill="#b9b6b1"/><rect x="3" y="12" width="1" height="1" fill="#b9b6b1"/><rect x="3" y="15" width="1" height="1" fill="#b9b6b1"/><rect x="3" y="18" width="1" height="1" fill="#b9b6b1"/><rect x="3" y="21" width="1" height="1" fill="#b9b6b1"/></svg>
<svg class="a" style="left:1057px;top:99px" width="4" height="22" viewBox="0 0 4 22"><rect x="0" y="0" width="1" height="1" fill="#b9b6b1"/><rect x="0" y="3" width="1" height="1" fill="#b9b6b1"/><rect x="0" y="6" width="1" height="1" fill="#b9b6b1"/><rect x="0" y="9" width="1" height="1" fill="#b9b6b1"/><rect x="0" y="12" width="1" height="1" fill="#b9b6b1"/><rect x="0" y="15" width="1" height="1" fill="#b9b6b1"/><rect x="0" y="18" width="1" height="1" fill="#b9b6b1"/><rect x="0" y="21" width="1" height="1" fill="#b9b6b1"/><rect x="3" y="0" width="1" height="1" fill="#b9b6b1"/><rect x="3" y="3" width="1" height="1" fill="#b9b6b1"/><rect x="3" y="6" width="1" height="1" fill="#b9b6b1"/><rect x="3" y="9" width="1" height="1" fill="#b9b6b1"/><rect x="3" y="12" width="1" height="1" fill="#b9b6b1"/><rect x="3" y="15" width="1" height="1" fill="#b9b6b1"/><rect x="3" y="18" width="1" height="1" fill="#b9b6b1"/><rect x="3" y="21" width="1" height="1" fill="#b9b6b1"/></svg>
<svg class="a" style="left:1067px;top:98px" width="24" height="24" viewBox="0 0 24 24"><path d="M1,2L8,1L16,3L23,1V22L16,23L8,21L1,23z" fill="#b8dca8"/><path d="M4,8Q10,12 8,18M12,4Q16,10 20,8" stroke="#90c080" stroke-width="2" fill="none"/><path d="M13,17L17,21L23,11" stroke="#3a7a2a" stroke-width="1.6" fill="none"/><circle cx="16" cy="17" r="3" fill="none" stroke="#a0a020"/></svg>
<svg class="a" style="left:1101px;top:98px" width="24" height="24" viewBox="0 0 24 24"><path d="M2,4L10,3L18,5V22L10,21L2,23z" fill="#f0d890"/><path d="M4,16L10,8L16,18" stroke="#4a8ad0" stroke-width="2.5" fill="none"/><path d="M2,1V9L7,5z" fill="#30a030"/><path d="M12,14L22,1" stroke="#8a4020" stroke-width="3"/><path d="M10,17L13,13" stroke="#333" stroke-width="2"/></svg>
<div class="a" style="left:2px;top:130px;width:1360px;height:501px;background:#edebe8"></div>
<div class="a" style="left:7px;top:132.3px;font-size:15px;line-height:15px;font-weight:normal;color:#1a1a1a;white-space:nowrap;">Layers</div>
<svg class="a" style="left:171px;top:133px" width="12" height="12" viewBox="0 0 12 12"><rect x="0.5" y="0.5" width="11" height="11" rx="2" fill="none" stroke="#888"/><rect x="5" y="2.5" width="4.5" height="4.5" fill="none" stroke="#666"/><rect x="2.5" y="5" width="4.5" height="4.5" fill="#edebe8" stroke="#666"/></svg>
<svg class="a" style="left:185px;top:133px" width="12" height="12" viewBox="0 0 12 12"><rect x="0.5" y="0.5" width="11" height="11" rx="2" fill="none" stroke="#888"/><path d="M3,3L9,9M9,3L3,9" stroke="#666" stroke-width="1.8"/></svg>
<div class="a" style="left:6px;top:153px;width:24px;height:23px;background:#dcdad6;border:1px solid #b5b2ad;border-radius:3px"></div>
<svg class="a" style="left:7px;top:153px" width="22" height="22" viewBox="0 0 22 22"><path d="M4,14L10,10L14,17L8,20z" fill="#e84040"/><path d="M4,11L10,7L13,12L7,16z" fill="#5a8ad0"/><path d="M5,8L11,4L13,9L7,13z" fill="#f2d030"/><path d="M8,15L12,10L17,14L13,19z" fill="#d8b070"/><path d="M14,12L21,4" stroke="#c8a050" stroke-width="2.5"/></svg>
<svg class="a" style="left:32px;top:153px" width="22" height="22" viewBox="0 0 22 22"><path d="M4,9V20H15" stroke="#888" fill="none"/><path d="M6,6H15V17H6z" fill="#fff" stroke="#888"/><path d="M11,3V14" stroke="#5a8ad0" stroke-width="1.6"/><circle cx="15" cy="17" r="3.5" fill="#40a050"/><circle cx="15" cy="17" r="1.6" fill="#fff"/></svg>
<svg class="a" style="left:57px;top:153px" width="22" height="22" viewBox="0 0 22 22"><path d="M2,11Q11,3 20,11Q11,19 2,11z" fill="#f4f4f4" stroke="#999"/><circle cx="11" cy="11" r="4" fill="#5a8ad0"/><circle cx="11" cy="10" r="1.5" fill="#111"/><path d="M15,16H21L18,19z" fill="#333"/></svg>
<svg class="a" style="left:82px;top:153px" width="22" height="22" viewBox="0 0 22 22"><path d="M2,3H20L13,11V20L9,18V11z" fill="#6a98d0" stroke="#4a78b0" stroke-width="0.6"/><rect x="2" y="2" width="18" height="2" fill="#f2d030"/></svg>
<svg class="a" style="left:110px;top:153px" width="22" height="22" viewBox="0 0 22 22"><text x="1" y="15" font-size="17" font-family="Liberation Serif" fill="#aaa">ε</text><path d="M9,14H16V20H9z" fill="#ccc"/><path d="M11,16H14V20H11z" fill="#eee"/></svg>
<svg class="a" style="left:131px;top:162px" width="9" height="5" viewBox="0 0 9 5"><path d="M0,0H9L4.5,5z" fill="#bbb"/></svg>
<svg class="a" style="left:144px;top:153px" width="22" height="22" viewBox="0 0 22 22"><rect x="2" y="3" width="10" height="16" fill="#fff" stroke="#aaa"/><rect x="3" y="6" width="3" height="3" fill="#f2d030"/><rect x="3" y="12" width="3" height="3" fill="#e07040"/><path d="M14,2V14H11L16,20L21,14H18V2z" fill="#4a88d0"/></svg>
<svg class="a" style="left:185px;top:161px" width="9" height="7" viewBox="0 0 9 7"><path d="M0.5,0.5L3.5,3.5L0.5,6.5M4.5,0.5L7.5,3.5L4.5,6.5" fill="none" stroke="#111" stroke-width="1.8"/></svg>
<div class="a" style="left:3px;top:179px;width:195px;height:420px;background:#fff;border:1px solid #b5b2ad"></div>
<svg class="a" style="left:26px;top:183px" width="13" height="13" viewBox="0 0 13 13"><rect x="0.5" y="0.5" width="12" height="12" fill="#fff" stroke="#a5a29d"/><path d="M3,6.5L5.5,10.5L10,2" stroke="#111" stroke-width="1.7" fill="none"/></svg>
<div class="a" style="left:50px;top:186px;width:8px;height:8px;background:#f4a31c;border:1px solid #9a6a20"></div>
<div class="a" style="left:68px;top:183.47px;font-size:14.8px;line-height:14.8px;font-weight:bold;color:#111;white-space:nowrap;">places</div>
<svg class="a" style="left:26px;top:202px" width="13" height="13" viewBox="0 0 13 13"><rect x="0.5" y="0.5" width="12" height="12" fill="#fff" stroke="#a5a29d"/><path d="M3,6.5L5.5,10.5L10,2" stroke="#111" stroke-width="1.7" fill="none"/></svg>
<div class="a" style="left:46px;top:209px;width:17px;height:1px;background:#222"></div>
<div class="a" style="left:68px;top:202.47px;font-size:14.8px;line-height:14.8px;font-weight:bold;color:#111;white-space:nowrap;">roads</div>
<svg class="a" style="left:26px;top:221px" width="13" height="13" viewBox="0 0 13 13"><rect x="0.5" y="0.5" width="12" height="12" fill="#fff" stroke="#a5a29d"/><path d="M3,6.5L5.5,10.5L10,2" stroke="#111" stroke-width="1.7" fill="none"/></svg>
<div class="a" style="left:46px;top:228px;width:17px;height:1px;background:#3060d8"></div>
<div class="a" style="left:68px;top:221.47px;font-size:14.8px;line-height:14.8px;font-weight:bold;color:#111;white-space:nowrap;">rivers</div>
<svg class="a" style="left:26px;top:240px" width="13" height="13" viewBox="0 0 13 13"><rect x="0.5" y="0.5" width="12" height="12" fill="#fff" stroke="#a5a29d"/><path d="M3,6.5L5.5,10.5L10,2" stroke="#111" stroke-width="1.7" fill="none"/></svg>
<div class="a" style="left:46px;top:239px;width:17px;height:16px;background:#f0271a;border:1px solid #8a2020"></div>
<div class="a" style="left:65px;top:237px;width:132px;height:19px;background:#e6eef8;border:1px solid #b8cce4;border-radius:2px"></div>
<div class="a" style="left:68px;top:240.47px;font-size:14.8px;line-height:14.8px;font-weight:bold;color:#111;white-space:nowrap;"><span style="border-bottom:1.5px solid #111">buildings</span></div>
<svg class="a" style="left:26px;top:259px" width="13" height="13" viewBox="0 0 13 13"><rect x="0.5" y="0.5" width="12" height="12" fill="#fff" stroke="#a5a29d"/><path d="M3,6.5L5.5,10.5L10,2" stroke="#111" stroke-width="1.7" fill="none"/></svg>
<div class="a" style="left:46px;top:258px;width:17px;height:16px;background:#b0dcf8;border:1px solid #3a70d0"></div>
<div class="a" style="left:68px;top:259.47px;font-size:14.8px;line-height:14.8px;font-weight:bold;color:#111;white-space:nowrap;">water</div>
<svg class="a" style="left:26px;top:278px" width="13" height="13" viewBox="0 0 13 13"><rect x="0.5" y="0.5" width="12" height="12" fill="#fff" stroke="#a5a29d"/><path d="M3,6.5L5.5,10.5L10,2" stroke="#111" stroke-width="1.7" fill="none"/></svg>
<div class="a" style="left:46px;top:277px;width:17px;height:16px;background:#94c896"></div>
<div class="a" style="left:68px;top:278.47px;font-size:14.8px;line-height:14.8px;font-weight:bold;color:#111;white-space:nowrap;">protected_areas</div>
<svg class="a" style="left:26px;top:297px" width="13" height="13" viewBox="0 0 13 13"><rect x="0.5" y="0.5" width="12" height="12" fill="#fff" stroke="#a5a29d"/><path d="M3,6.5L5.5,10.5L10,2" stroke="#111" stroke-width="1.7" fill="none"/></svg>
<div class="a" style="left:46px;top:296px;width:17px;height:16px;background:#b4b4b4"></div>
<div class="a" style="left:68px;top:297.47px;font-size:14.8px;line-height:14.8px;font-weight:bold;color:#111;white-space:nowrap;">landuse</div>
<div class="a" style="left:3px;top:599px;width:195px;height:1px;background:#b5b2ad"></div>
<div class="a" style="left:5px;top:600px;width:65px;height:27px;background:#f2f1ef;border:1px solid #b9b6b1;border-top:none;border-radius:0 0 3px 3px"></div>
<div class="a" style="left:14px;top:607.3px;font-size:15px;line-height:15px;font-weight:normal;color:#1a1a1a;white-space:nowrap;">Layers</div>
<div class="a" style="left:71px;top:600px;width:79px;height:24px;background:#dfddd9;border:1px solid #b9b6b1;border-top:none;border-radius:0 0 3px 3px"></div>
<div class="a" style="left:82px;top:606.3px;font-size:15px;line-height:15px;font-weight:normal;color:#1a1a1a;white-space:nowrap;">Browser</div>
<div class="a" style="left:921px;top:130px;width:1px;height:498px;background:#d5d2cd"></div>
<div class="a" style="left:931px;top:132.3px;font-size:15px;line-height:15px;font-weight:normal;color:#1a1a1a;white-space:nowrap;">Layer Styling</div>
<svg class="a" style="left:1334px;top:133px" width="12" height="12" viewBox="0 0 12 12"><rect x="0.5" y="0.5" width="11" height="11" rx="2" fill="none" stroke="#888"/><rect x="5" y="2.5" width="4.5" height="4.5" fill="none" stroke="#666"/><rect x="2.5" y="5" width="4.5" height="4.5" fill="#edebe8" stroke="#666"/></svg>
<svg class="a" style="left:1348px;top:133px" width="12" height="12" viewBox="0 0 12 12"><rect x="0.5" y="0.5" width="11" height="11" rx="2" fill="none" stroke="#888"/><path d="M3,3L9,9M9,3L3,9" stroke="#666" stroke-width="1.8"/></svg>
<div class="a" style="left:930px;top:152px;width:429px;height:25px;background:linear-gradient(#fbfbfa,#f0efed);border:1px solid #b9b6b1;border-radius:3px"></div>
<svg class="a" style="left:936px;top:157px" width="17" height="14" viewBox="0 0 17 14"><path d="M1,4Q1,1 4,2Q8,4 12,2Q16,1 16,5Q14,8 16,11Q16,13 12,12Q8,10 4,12Q1,13 1,9Q3,7 1,4z" fill="#e4e4e4" stroke="#888" stroke-width="0.9"/></svg>
<div class="a" style="left:955px;top:156.96px;font-size:15.4px;line-height:15.4px;font-weight:normal;color:#1a1a1a;white-space:nowrap;">buildings</div>
<svg class="a" style="left:1343px;top:163px" width="9" height="5" viewBox="0 0 9 5"><path d="M0,0H9L4.5,4.5z" fill="#333"/></svg>
<svg class="a" style="left:936px;top:185px" width="22" height="22" viewBox="0 0 22 22"><path d="M3,12L10,7L14,16L7,20z" fill="#d84848"/><path d="M3,9L10,5L13,11L6,15z" fill="#5a8ad0"/><path d="M4,7L11,3L13,8L6,12z" fill="#70c060"/><path d="M7,15L12,9L17,13L12,19z" fill="#d0c080"/><path d="M13,11L21,4" stroke="#a89050" stroke-width="2.5"/></svg>
<div class="a" style="left:971px;top:183px;width:388px;height:25px;background:linear-gradient(#fbfbfa,#f0efed);border:1px solid #b9b6b1;border-radius:3px"></div>
<svg class="a" style="left:978px;top:188px" width="14" height="15" viewBox="0 0 14 15"><rect x="1" y="0.5" width="11" height="3.5" rx="1" fill="#2aa050" stroke="#187030" stroke-width="0.6"/><rect x="4" y="5.5" width="9" height="3.5" rx="1" fill="#2aa050" stroke="#187030" stroke-width="0.6"/><rect x="1" y="10.5" width="11" height="3.5" rx="1" fill="#2aa050" stroke="#187030" stroke-width="0.6"/></svg>
<div class="a" style="left:996px;top:188.13px;font-size:15.2px;line-height:15.2px;font-weight:normal;color:#1a1a1a;white-space:nowrap;">Single symbol</div>
<svg class="a" style="left:1343px;top:194px" width="9" height="5" viewBox="0 0 9 5"><path d="M0,0H9L4.5,4.5z" fill="#333"/></svg>
<div class="a" style="left:930px;top:214px;width:38px;height:411px;background:#5f5f5f"></div>
<svg class="a" style="left:935px;top:220px" width="22" height="22" viewBox="0 0 22 22"><path d="M1,9L5,4H21V14H5z" fill="#f2d640" stroke="#a08820" stroke-width="0.8"/><text x="6" y="12" font-size="7.5" font-weight="bold" font-family="Liberation Sans" fill="#333">abc</text></svg>
<svg class="a" style="left:935px;top:251px" width="22" height="22" viewBox="0 0 22 22"><path d="M11,2L20,7V17L11,21L2,17V7z" fill="#f2d640" stroke="#806a20" stroke-width="0.6"/><path d="M11,2L20,7L11,12L2,7z" fill="#f07070"/><path d="M2,7L11,12V21L2,17z" fill="#60b040"/></svg>
<svg class="a" style="left:935px;top:284px" width="22" height="22" viewBox="0 0 22 22"><rect x="7" y="1" width="8" height="6" fill="#f06060"/><path d="M11,7V11M4,11H18M4,11V14M11,11V14M18,11V14" stroke="#c89030" stroke-width="1.5" fill="none"/><rect x="1" y="14" width="7" height="7" fill="#f2d640"/><rect x="8" y="14" width="6" height="7" fill="#f2d640"/><rect x="14" y="14" width="7" height="7" fill="#8ab8e8"/></svg>
<svg class="a" style="left:935px;top:315px" width="22" height="22" viewBox="0 0 22 22"><path d="M4,10Q4,3 12,4L12,1L17,6L12,11V8Q7,7 6,11z" fill="#60a060"/><path d="M18,12Q18,19 10,18L10,21L5,16L10,11V14Q15,15 16,11z" fill="#e88030"/></svg>
<div class="a" style="left:971px;top:214px;width:256px;height:119px;background:#fff;border:1px solid #b9b6b1"></div>
<div class="a" style="left:972px;top:215px;width:254px;height:19px;background:#308cc6"></div>
<svg class="a" style="left:977px;top:222px" width="10" height="6" viewBox="0 0 10 6"><path d="M0,0H9.5L4.75,5.5z" fill="#111"/></svg>
<div class="a" style="left:995px;top:216px;width:16px;height:16px;background:#b5424d;border:1px solid #7a2a30"></div>
<div class="a" style="left:1017px;top:217.3px;font-size:15px;line-height:15px;font-weight:bold;color:#fff;white-space:nowrap;">Fill</div>
<div class="a" style="left:1015px;top:235px;width:16px;height:16px;background:#f0271a;border:1px solid #8a2020"></div>
<div class="a" style="left:1037px;top:236.13px;font-size:15.2px;line-height:15.2px;font-weight:normal;color:#1a1a1a;white-space:nowrap;">Simple fill</div>
<div class="a" style="left:1266px;top:243px;width:62px;height:61px;background:#f0271a;border:1px solid #2a1a1a"></div>
<div class="a" style="left:971px;top:339px;width:28px;height:24px;background:linear-gradient(#fafaf9,#eeedeb);border:1px solid #bbb8b3;border-radius:3px"></div>
<div class="a" style="left:1005px;top:339px;width:28px;height:24px;background:linear-gradient(#fafaf9,#eeedeb);border:1px solid #bbb8b3;border-radius:3px"></div>
<div class="a" style="left:1039px;top:339px;width:28px;height:24px;background:linear-gradient(#fafaf9,#eeedeb);border:1px solid #bbb8b3;border-radius:3px"></div>
<div class="a" style="left:1073px;top:339px;width:28px;height:24px;background:linear-gradient(#fafaf9,#eeedeb);border:1px solid #bbb8b3;border-radius:3px"></div>
<div class="a" style="left:1107px;top:339px;width:28px;height:24px;background:linear-gradient(#fafaf9,#eeedeb);border:1px solid #bbb8b3;border-radius:3px"></div>
<div class="a" style="left:1141px;top:339px;width:28px;height:24px;background:linear-gradient(#fafaf9,#eeedeb);border:1px solid #bbb8b3;border-radius:3px"></div>
<svg class="a" style="left:977px;top:343px" width="16" height="16" viewBox="0 0 16 16"><path d="M6,1H10V6H15V10H10V15H6V10H1V6H6z" fill="#dff0d8" stroke="#3a8a3a" stroke-width="1.2"/></svg>
<svg class="a" style="left:1011px;top:343px" width="16" height="16" viewBox="0 0 16 16"><rect x="2" y="6" width="12" height="4" fill="#eee" stroke="#aaa"/></svg>
<svg class="a" style="left:1045px;top:343px" width="16" height="16" viewBox="0 0 16 16"><path d="M5,8V5Q5,2 8,2Q11,2 11,5" fill="none" stroke="#bbb" stroke-width="1.5"/><rect x="3" y="8" width="10" height="7" rx="1" fill="#ddd" stroke="#bbb"/></svg>
<svg class="a" style="left:1079px;top:343px" width="16" height="16" viewBox="0 0 16 16"><rect x="2" y="2" width="11" height="11" fill="none" stroke="#aaa"/><rect x="5" y="5" width="10" height="10" fill="#e4e4e4" stroke="#aaa"/></svg>
<svg class="a" style="left:1113px;top:343px" width="16" height="16" viewBox="0 0 16 16"><path d="M8,2L15,13H1z" fill="#c8c8c8" stroke="#aaa"/></svg>
<svg class="a" style="left:1147px;top:343px" width="16" height="16" viewBox="0 0 16 16"><path d="M8,14L15,3H1z" fill="#c8c8c8" stroke="#aaa"/></svg>
<div class="a" style="left:971px;top:369px;width:387px;height:1px;background:#bcb9b4"></div>
<div class="a" style="left:1345px;top:378px;width:13px;height:186px;background:#efeeec;border-left:1px solid #d8d5d0"></div>
<div class="a" style="left:1346px;top:493px;width:12px;height:56px;background:#dedcd8;border:1px solid #ccc9c4"></div>
<svg class="a" style="left:1347px;top:384px" width="9" height="5" viewBox="0 0 9 5"><path d="M0,5H9L4.5,0z" fill="#333"/></svg>
<svg class="a" style="left:1347px;top:555px" width="9" height="5" viewBox="0 0 9 5"><path d="M0,0H9L4.5,5z" fill="#333"/></svg>
<div class="a" style="left:971px;top:383.13px;font-size:15.2px;line-height:15.2px;font-weight:normal;color:#1a1a1a;white-space:nowrap;">Unit</div>
<div class="a" style="left:1025px;top:378px;width:311px;height:25px;background:linear-gradient(#fbfbfa,#f0efed);border:1px solid #b9b6b1;border-radius:3px"></div>
<div class="a" style="left:1030px;top:382.63px;font-size:15.8px;line-height:15.8px;font-weight:normal;color:#1a1a1a;white-space:nowrap;">Millimeter</div>
<svg class="a" style="left:1321px;top:389px" width="9" height="5" viewBox="0 0 9 5"><path d="M0,0H9L4.5,4.5z" fill="#333"/></svg>
<div class="a" style="left:971px;top:408.13px;font-size:15.2px;line-height:15.2px;font-weight:normal;color:#1a1a1a;white-space:nowrap;">Opacity</div>
<div class="a" style="left:1026px;top:412px;width:200px;height:7px;background:#3a9ad8;border:1px solid #2a6a9a;border-radius:3px"></div>
<div class="a" style="left:1219px;top:409px;width:14px;height:13px;background:linear-gradient(#fff,#e8e8e8);border:1px solid #9a9792;border-radius:3px"></div>
<div class="a" style="left:1236px;top:404px;width:100px;height:23px;background:#fff;border:1px solid #b9b6b1;border-radius:3px"></div>
<div class="a" style="left:1321px;top:405px;width:1px;height:21px;background:#d8d5d0"></div>
<div class="a" style="left:1241px;top:408.13px;font-size:15.2px;line-height:15.2px;font-weight:normal;color:#1a1a1a;white-space:nowrap;">100.0 %</div>
<svg class="a" style="left:1324px;top:407px" width="10" height="18" viewBox="0 0 10 18"><path d="M1,6L5,2L9,6" fill="none" stroke="#bbb" stroke-width="1.3"/><path d="M1,12L5,16L9,12" fill="none" stroke="#555" stroke-width="1.3"/></svg>
<div class="a" style="left:971px;top:435.13px;font-size:15.2px;line-height:15.2px;font-weight:normal;color:#1a1a1a;white-space:nowrap;">Color</div>
<div class="a" style="left:1025px;top:429px;width:299px;height:27px;background:linear-gradient(#fbfbfa,#f0efed);border:1px solid #b9b6b1;border-radius:3px 0 0 3px"></div>
<div class="a" style="left:1029px;top:434px;width:291px;height:17px;background:#f0271a;border-radius:3px"></div>
<div class="a" style="left:1324px;top:429px;width:12px;height:27px;background:linear-gradient(#fbfbfa,#f0efed);border:1px solid #b9b6b1;border-left:none;border-radius:0 3px 3px 0"></div>
<svg class="a" style="left:1325px;top:440px" width="10" height="6" viewBox="0 0 10 6"><path d="M0,0H9L4.5,5z" fill="#222"/></svg>
<div class="a" style="left:971px;top:523px;width:365px;height:1px;background:#bcb9b4"></div>
<div class="a" style="left:971px;top:530px;width:335px;height:25px;background:#fff;border:1px solid #b9b6b1;border-radius:3px"></div>
<svg class="a" style="left:981px;top:535px" width="14" height="14" viewBox="0 0 14 14"><circle cx="5.5" cy="5.5" r="4" fill="none" stroke="#888" stroke-width="1.2"/><path d="M8.5,8.5L12,12" stroke="#888" stroke-width="1.4"/></svg>
<div class="a" style="left:1001px;top:535.13px;font-size:15.2px;line-height:15.2px;font-weight:normal;color:#1a1a1a;white-space:nowrap;">Favorites</div>
<svg class="a" style="left:1262px;top:537px" width="15" height="11" viewBox="0 0 15 11"><path d="M5,0.5H14.5V10.5H5L0.5,5.5z" fill="#9a9a9a"/><path d="M7,3L11,8M11,3L7,8" stroke="#fff" stroke-width="1.3"/></svg>
<div class="a" style="left:1285px;top:531px;width:1px;height:23px;background:#ccc9c4"></div>
<div class="a" style="left:1286px;top:531px;width:19px;height:23px;background:linear-gradient(#fbfbfa,#f0efed);border-radius:0 3px 3px 0"></div>
<svg class="a" style="left:1291px;top:541px" width="9" height="5" viewBox="0 0 9 5"><path d="M0,0H9L4.5,4.5z" fill="#333"/></svg>
<svg class="a" style="left:1315px;top:535px" width="18" height="16" viewBox="0 0 18 16"><circle cx="4.5" cy="4" r="3.2" fill="#d4522a"/><path d="M10,7L15,1" stroke="#4a74b0" stroke-width="1.5"/><rect x="1.5" y="9" width="6" height="6" fill="#6ea870"/><text x="9.5" y="15.5" font-size="8.5" font-family="Liberation Sans" fill="#444">a</text></svg>
<div class="a" style="left:971px;top:560px;width:365px;height:4px;background:#fff;border:1px solid #b9b6b1;border-bottom:none"></div>
<div class="a" style="left:1320px;top:560px;width:1px;height:4px;background:#ccc"></div>
<svg class="a" style="left:975px;top:578px" width="9" height="12" viewBox="0 0 9 12"><path d="M0.5,0.5L8,6L0.5,11.5z" fill="#222"/></svg>
<div class="a" style="left:993px;top:578.56px;font-size:14.7px;line-height:14.7px;font-weight:bold;color:#111;white-space:nowrap;">Layer Rendering</div>
<div class="a" style="left:971px;top:601px;width:24px;height:23px;background:linear-gradient(#fafaf9,#eeedeb);border:1px solid #bbb8b3;border-radius:3px"></div>
<svg class="a" style="left:976px;top:605px" width="14" height="14" viewBox="0 0 14 14"><path d="M6,2L1,6.5L6,11V8Q11,8 10,13Q14,5 6,5z" fill="#e8802a"/></svg>
<div class="a" style="left:1001px;top:601px;width:24px;height:23px;background:linear-gradient(#fafaf9,#eeedeb);border:1px solid #bbb8b3;border-radius:3px"></div>
<svg class="a" style="left:1006px;top:605px" width="14" height="14" viewBox="0 0 14 14"><path d="M8,2L13,6.5L8,11V8Q3,8 4,13Q0,5 8,5z" fill="#6aaa5a"/></svg>
<svg class="a" style="left:1168px;top:606px" width="13" height="13" viewBox="0 0 13 13"><rect x="0.5" y="0.5" width="12" height="12" fill="#fff" stroke="#a5a29d"/><path d="M3,6.5L5.5,10.5L10,2" stroke="#111" stroke-width="1.7" fill="none"/></svg>
<div class="a" style="left:1187px;top:605.13px;font-size:15.2px;line-height:15.2px;font-weight:normal;color:#1a1a1a;white-space:nowrap;">Live update</div>
<div class="a" style="left:1279px;top:601px;width:80px;height:24px;background:linear-gradient(#fbfbfa,#eeedeb);border:1px solid #b5b2ad;border-radius:3px"></div>
<svg class="a" style="left:1289px;top:603px" width="17" height="19" viewBox="0 0 17 19"><path d="M1,10L6,17L16,1L6,12z" fill="#80c040" stroke="#4a8020" stroke-width="0.8"/></svg>
<div class="a" style="left:1307px;top:604.96px;font-size:15.4px;line-height:15.4px;font-weight:normal;color:#1a1a1a;white-space:nowrap;">Apply</div>
<div class="a" style="left:204px;top:130px;width:717px;height:498px;background:#a9a6a2"></div>
<div class="a" style="left:205px;top:131px;width:715px;height:496px;background:#fff;overflow:hidden"></div>
<svg class="a" style="left:205px;top:131px;overflow:hidden" width="715" height="496" viewBox="205 131 715 496"><polygon points="205,131 713.5,131 680,148.5 756,206 556,206 546,219 515,208 480,218 462,220 460,183 433,176 380,176 314,181 286,163.5 205,147" fill="#96c998"/><polygon points="323.8,546.7 377,493 390,482 412,480 417,466 424,456 440,459 443,461 450,466 465,465 470,461 517,422 556.5,421.5 608.3,468.2 596,481.2 602.5,484 627,461 639,467.5 650.7,463.2 635,454.6 635.6,451.7 606.8,433 610.4,423.7 629,433.7 648,443 680,452.4 701,456 746,455 776,452 777.5,461 787.5,471 794,472 807.5,470 816,471 802.5,483.5 797.5,508.5 830,541 808.75,568.5 795,574.75 791.25,588.5 788.75,599.75 750,608.5 701,618.5 696,627 485.6,627 490,611 511,595 509.4,595.1 490,584.5 458.4,577.5 431,580.1 428.5,575.4 413.5,578.4 412.6,579.3 409.1,596.9 388,614.5 363.3,627 342.2,627 326.4,619.7 321,609 322.9,596.9 332.6,575.8 331.7,560" fill="#96c998"/><polygon points="473.7,228 479.4,223 491,221.5 498,225 508,224 530,221.5 534,233.7 535.5,252.4 530,258 530,270 522.5,278 515,278 514,262.5 510,250 505,254 498,254 492,251 489.5,246.7 485,245 484,249.6 478,246.7 474.4,241" fill="#bdbdbd"/><polygon points="533.3,264 535.5,252 541.2,239.5 547,252 544,266.8 540,272" fill="#bdbdbd"/><polygon points="541.7,238 548,221.7 560,210 560,206 641.7,206 641.7,212.5 628,221.7 603,223.3 600,231.7 606.7,238.3 630,241.7 630,248.3 600,250 590,246.7 586.7,233.3 583,250 573,255 555,256.7 546.7,263.3 540,260" fill="#bdbdbd"/><polygon points="373.3,406.7 381.7,395 393.3,378.3 406.7,363.3 410,345 405,327 418,310 433,298 450,295 468,287 487.7,283.6 497.2,278.2 510.9,279.5 515,283.6 524.5,276.8 531.3,268.6 534,259 538.1,255 540.8,260.4 546.3,270 543.6,279.5 551.7,280.9 564,289 551.7,300 538.1,295.9 524.5,309.5 539.5,325.8 531.3,331.3 510.9,338.1 480,356 460,368 438.3,378.3 426.7,390 416.7,403.3 410,408.3 388.3,403.3 380,408.3" fill="#bdbdbd"/><polygon points="515,255 527.2,255 527.2,270 521.8,278.2 515,278.2" fill="#bdbdbd"/><polygon points="540.8,255 553.1,255 551.7,260.4 540.8,261.8" fill="#bdbdbd"/><polygon points="384.9,449.1 391.7,440.9 399.9,445 390.4,473.6 379.5,470.8 383.6,461.3" fill="#bdbdbd"/><polygon points="509,408.5 521,408.5 521,417 509,417" fill="#bdbdbd"/><polygon points="211,496 217.5,486 222.5,482 229,477 227.5,488.5 231,498.5 240,506 252.5,514.75 242.5,523.5 235,527 223.75,526 216,527 213.75,511 215,503.5" fill="#bdbdbd"/><polygon points="776,250 789,241.5 811,244 828,250 845,259 862,257 877,267 891,270 914,283 921,288 921,300 905,298 893,300 893,322 878,322 872,300 850,300 840,290 831,279 814,277 796,279 776,267" fill="#bdbdbd"/><polygon points="806,291 831,289 840,298 843,312 852,320 848,334 840,349 834,362 833,368 827,369 825,362 806,362 795,363 795,349 806,343" fill="#bdbdbd"/><polygon points="764.5,328.1 777.2,310.9 804.4,310 806.3,334.5 808.1,339.9 799,343.5 788.1,349 780.8,347.2 775.4,339.9 771.8,334.5" fill="#bdbdbd"/><polygon points="739.1,325.4 755.4,324.5 771.8,332.7 775.4,347.2 770,350.8 753.6,343.5 740.9,334.5" fill="#bdbdbd"/><polygon points="879,318 905,310 921,305 921,397 882,397 880,360 876,335" fill="#bdbdbd"/><ellipse cx="835" cy="496.75" rx="10.75" ry="9" fill="#bdbdbd"/><g fill="#3d2b2b"><rect x="405.5" y="380.6" width="3.4" height="1.3" transform="rotate(-35 405.5 380.6)"/><rect x="455.9" y="353.2" width="3.5" height="1.1" transform="rotate(-41 455.9 353.2)"/><rect x="517.7" y="322.6" width="3.4" height="1.0" transform="rotate(-36 517.7 322.6)"/><rect x="499.4" y="294.0" width="3.9" height="1.9" transform="rotate(-41 499.4 294.0)"/><rect x="418.7" y="321.1" width="1.6" height="1.2" transform="rotate(-36 418.7 321.1)"/><rect x="463.3" y="294.6" width="2.1" height="1.2" transform="rotate(-35 463.3 294.6)"/><rect x="486.8" y="288.0" width="4.0" height="1.9" transform="rotate(-40 486.8 288.0)"/><rect x="437.2" y="363.0" width="3.3" height="1.9" transform="rotate(-36 437.2 363.0)"/><rect x="432.5" y="344.3" width="3.7" height="1.8" transform="rotate(-35 432.5 344.3)"/><rect x="422.8" y="373.6" width="2.5" height="1.2" transform="rotate(-34 422.8 373.6)"/><rect x="444.0" y="323.5" width="2.8" height="1.8" transform="rotate(-35 444.0 323.5)"/><rect x="446.9" y="330.6" width="1.6" height="1.0" transform="rotate(-33 446.9 330.6)"/><rect x="507.3" y="337.5" width="3.7" height="1.2" transform="rotate(-35 507.3 337.5)"/><rect x="457.5" y="299.7" width="2.9" height="2.0" transform="rotate(-41 457.5 299.7)"/><rect x="513.5" y="334.6" width="2.9" height="1.4" transform="rotate(-40 513.5 334.6)"/><rect x="416.0" y="332.7" width="2.7" height="1.4" transform="rotate(-37 416.0 332.7)"/><rect x="470.2" y="349.3" width="3.0" height="1.5" transform="rotate(-41 470.2 349.3)"/><rect x="514.6" y="297.7" width="3.6" height="1.7" transform="rotate(-40 514.6 297.7)"/><rect x="504.9" y="296.9" width="1.8" height="1.6" transform="rotate(-37 504.9 296.9)"/><rect x="427.7" y="361.6" width="2.6" height="1.3" transform="rotate(-35 427.7 361.6)"/><rect x="401.4" y="388.0" width="2.8" height="1.2" transform="rotate(-34 401.4 388.0)"/><rect x="499.0" y="284.4" width="3.3" height="1.7" transform="rotate(-34 499.0 284.4)"/><rect x="511.6" y="334.3" width="2.1" height="1.6" transform="rotate(-36 511.6 334.3)"/><rect x="476.1" y="307.0" width="3.1" height="1.1" transform="rotate(-37 476.1 307.0)"/><rect x="503.0" y="320.3" width="2.1" height="1.0" transform="rotate(-30 503.0 320.3)"/><rect x="411.4" y="383.5" width="3.9" height="1.7" transform="rotate(-35 411.4 383.5)"/><rect x="444.5" y="310.6" width="2.0" height="1.7" transform="rotate(-36 444.5 310.6)"/><rect x="490.6" y="303.5" width="2.7" height="1.3" transform="rotate(-31 490.6 303.5)"/><rect x="421.5" y="363.6" width="1.7" height="1.2" transform="rotate(-30 421.5 363.6)"/><rect x="418.1" y="368.3" width="3.0" height="1.8" transform="rotate(-37 418.1 368.3)"/><rect x="438.4" y="302.8" width="3.7" height="1.6" transform="rotate(-30 438.4 302.8)"/><rect x="526.0" y="280.9" width="2.9" height="1.1" transform="rotate(-41 526.0 280.9)"/><rect x="438.5" y="348.1" width="3.5" height="1.4" transform="rotate(-34 438.5 348.1)"/><rect x="457.2" y="300.8" width="3.5" height="1.8" transform="rotate(-41 457.2 300.8)"/><rect x="402.4" y="385.9" width="1.6" height="1.2" transform="rotate(-29 402.4 385.9)"/><rect x="385.7" y="399.6" width="2.2" height="1.6" transform="rotate(-36 385.7 399.6)"/><rect x="539.2" y="277.6" width="2.0" height="1.6" transform="rotate(-29 539.2 277.6)"/><rect x="470.9" y="358.3" width="3.2" height="1.3" transform="rotate(-35 470.9 358.3)"/><rect x="433.1" y="307.8" width="2.3" height="1.8" transform="rotate(-30 433.1 307.8)"/><rect x="432.4" y="308.8" width="2.9" height="1.6" transform="rotate(-34 432.4 308.8)"/><rect x="430.5" y="372.9" width="2.7" height="1.9" transform="rotate(-39 430.5 372.9)"/><rect x="396.3" y="394.9" width="1.9" height="1.8" transform="rotate(-29 396.3 394.9)"/><rect x="515.4" y="306.8" width="1.8" height="1.5" transform="rotate(-30 515.4 306.8)"/><rect x="406.7" y="389.5" width="1.6" height="1.3" transform="rotate(-30 406.7 389.5)"/><rect x="494.3" y="286.9" width="2.6" height="1.2" transform="rotate(-32 494.3 286.9)"/><rect x="490.8" y="297.4" width="1.7" height="2.0" transform="rotate(-31 490.8 297.4)"/><rect x="471.9" y="337.8" width="3.6" height="1.5" transform="rotate(-36 471.9 337.8)"/><rect x="450.7" y="341.9" width="1.7" height="1.4" transform="rotate(-39 450.7 341.9)"/><rect x="516.6" y="317.7" width="2.5" height="1.6" transform="rotate(-38 516.6 317.7)"/><rect x="464.1" y="352.8" width="2.6" height="1.7" transform="rotate(-32 464.1 352.8)"/><rect x="422.1" y="331.3" width="2.7" height="1.2" transform="rotate(-36 422.1 331.3)"/><rect x="524.4" y="284.3" width="3.4" height="1.9" transform="rotate(-37 524.4 284.3)"/><rect x="443.5" y="360.2" width="3.3" height="1.6" transform="rotate(-31 443.5 360.2)"/><rect x="498.7" y="310.7" width="2.8" height="1.2" transform="rotate(-32 498.7 310.7)"/><rect x="390.5" y="399.4" width="3.5" height="1.6" transform="rotate(-38 390.5 399.4)"/><rect x="496.1" y="324.3" width="3.8" height="2.0" transform="rotate(-36 496.1 324.3)"/><rect x="512.4" y="322.6" width="1.9" height="1.3" transform="rotate(-39 512.4 322.6)"/><rect x="414.4" y="323.4" width="1.6" height="1.6" transform="rotate(-34 414.4 323.4)"/><rect x="517.7" y="290.9" width="2.2" height="1.5" transform="rotate(-38 517.7 290.9)"/><rect x="477.7" y="297.1" width="3.2" height="1.8" transform="rotate(-31 477.7 297.1)"/><rect x="445.3" y="301.8" width="1.8" height="1.8" transform="rotate(-40 445.3 301.8)"/><rect x="503.6" y="338.3" width="3.9" height="1.8" transform="rotate(-29 503.6 338.3)"/><rect x="475.6" y="305.6" width="2.8" height="1.4" transform="rotate(-35 475.6 305.6)"/><rect x="455.9" y="304.7" width="2.5" height="1.8" transform="rotate(-33 455.9 304.7)"/><rect x="462.8" y="352.7" width="2.4" height="1.2" transform="rotate(-41 462.8 352.7)"/><rect x="428.4" y="345.7" width="3.7" height="1.8" transform="rotate(-35 428.4 345.7)"/><rect x="517.5" y="319.3" width="3.4" height="2.0" transform="rotate(-37 517.5 319.3)"/><rect x="411.3" y="348.8" width="2.8" height="1.4" transform="rotate(-41 411.3 348.8)"/><rect x="446.3" y="321.6" width="2.5" height="1.9" transform="rotate(-34 446.3 321.6)"/><rect x="503.8" y="331.0" width="3.4" height="1.6" transform="rotate(-33 503.8 331.0)"/><rect x="484.7" y="319.0" width="3.1" height="1.6" transform="rotate(-30 484.7 319.0)"/><rect x="480.9" y="310.9" width="2.2" height="1.7" transform="rotate(-31 480.9 310.9)"/><rect x="517.3" y="329.8" width="2.7" height="1.0" transform="rotate(-35 517.3 329.8)"/><rect x="503.2" y="321.2" width="2.4" height="1.7" transform="rotate(-41 503.2 321.2)"/><rect x="494.5" y="318.3" width="3.2" height="1.6" transform="rotate(-38 494.5 318.3)"/><rect x="516.9" y="335.2" width="2.4" height="1.5" transform="rotate(-32 516.9 335.2)"/><rect x="411.0" y="353.4" width="3.3" height="1.8" transform="rotate(-38 411.0 353.4)"/><rect x="481.5" y="294.5" width="2.9" height="1.2" transform="rotate(-32 481.5 294.5)"/><rect x="483.6" y="306.3" width="2.6" height="1.8" transform="rotate(-32 483.6 306.3)"/><rect x="414.4" y="349.6" width="1.9" height="2.0" transform="rotate(-36 414.4 349.6)"/><rect x="481.0" y="298.7" width="2.8" height="1.1" transform="rotate(-39 481.0 298.7)"/><rect x="498.5" y="312.6" width="3.4" height="1.2" transform="rotate(-32 498.5 312.6)"/><rect x="499.0" y="304.8" width="1.8" height="1.4" transform="rotate(-35 499.0 304.8)"/><rect x="526.2" y="292.3" width="1.6" height="1.7" transform="rotate(-31 526.2 292.3)"/><rect x="463.2" y="314.9" width="1.9" height="1.2" transform="rotate(-31 463.2 314.9)"/><rect x="458.0" y="343.2" width="2.0" height="1.7" transform="rotate(-37 458.0 343.2)"/><rect x="435.1" y="315.6" width="3.0" height="1.9" transform="rotate(-36 435.1 315.6)"/><rect x="408.4" y="389.9" width="1.5" height="1.1" transform="rotate(-33 408.4 389.9)"/><rect x="490.1" y="316.6" width="3.1" height="2.0" transform="rotate(-33 490.1 316.6)"/><rect x="439.9" y="346.7" width="2.9" height="1.5" transform="rotate(-40 439.9 346.7)"/><rect x="440.5" y="319.8" width="2.0" height="1.9" transform="rotate(-36 440.5 319.8)"/><rect x="504.4" y="297.2" width="3.9" height="1.2" transform="rotate(-30 504.4 297.2)"/><rect x="514.1" y="327.7" width="2.4" height="2.0" transform="rotate(-41 514.1 327.7)"/><rect x="469.0" y="324.1" width="1.8" height="1.4" transform="rotate(-33 469.0 324.1)"/><rect x="501.2" y="305.8" width="1.8" height="1.8" transform="rotate(-31 501.2 305.8)"/><rect x="520.9" y="304.5" width="2.6" height="1.2" transform="rotate(-34 520.9 304.5)"/><rect x="436.8" y="309.4" width="3.5" height="2.0" transform="rotate(-34 436.8 309.4)"/><rect x="496.2" y="337.0" width="3.7" height="1.8" transform="rotate(-38 496.2 337.0)"/><rect x="439.3" y="342.5" width="1.6" height="1.8" transform="rotate(-33 439.3 342.5)"/><rect x="434.2" y="303.8" width="2.4" height="1.3" transform="rotate(-32 434.2 303.8)"/><rect x="464.2" y="335.7" width="1.9" height="1.9" transform="rotate(-37 464.2 335.7)"/><rect x="467.8" y="342.6" width="4.0" height="1.8" transform="rotate(-33 467.8 342.6)"/><rect x="503.5" y="312.6" width="3.9" height="1.6" transform="rotate(-36 503.5 312.6)"/><rect x="413.5" y="319.6" width="3.3" height="1.1" transform="rotate(-40 413.5 319.6)"/><rect x="471.3" y="299.2" width="1.8" height="1.3" transform="rotate(-33 471.3 299.2)"/><rect x="486.9" y="286.3" width="3.7" height="1.0" transform="rotate(-37 486.9 286.3)"/><rect x="526.8" y="321.6" width="3.2" height="1.5" transform="rotate(-30 526.8 321.6)"/><rect x="466.3" y="330.2" width="2.5" height="1.9" transform="rotate(-31 466.3 330.2)"/><rect x="520.2" y="326.2" width="2.0" height="1.3" transform="rotate(-33 520.2 326.2)"/><rect x="470.9" y="342.1" width="2.9" height="1.5" transform="rotate(-34 470.9 342.1)"/><rect x="449.3" y="350.2" width="2.3" height="1.3" transform="rotate(-35 449.3 350.2)"/><rect x="477.8" y="339.0" width="3.9" height="1.2" transform="rotate(-33 477.8 339.0)"/><rect x="474.5" y="313.6" width="2.5" height="1.9" transform="rotate(-30 474.5 313.6)"/><rect x="445.3" y="327.0" width="3.5" height="1.4" transform="rotate(-32 445.3 327.0)"/><rect x="461.0" y="309.1" width="2.6" height="1.1" transform="rotate(-37 461.0 309.1)"/><rect x="425.3" y="333.9" width="3.3" height="1.7" transform="rotate(-36 425.3 333.9)"/><rect x="508.3" y="330.0" width="3.3" height="1.5" transform="rotate(-29 508.3 330.0)"/><rect x="424.5" y="329.2" width="3.9" height="1.4" transform="rotate(-32 424.5 329.2)"/><rect x="471.9" y="336.8" width="2.4" height="1.9" transform="rotate(-29 471.9 336.8)"/><rect x="451.1" y="356.0" width="1.8" height="1.3" transform="rotate(-38 451.1 356.0)"/><rect x="446.4" y="355.6" width="2.2" height="1.5" transform="rotate(-30 446.4 355.6)"/><rect x="402.6" y="381.5" width="1.8" height="1.4" transform="rotate(-30 402.6 381.5)"/><rect x="416.2" y="334.9" width="2.5" height="1.9" transform="rotate(-29 416.2 334.9)"/><rect x="430.2" y="330.9" width="3.7" height="1.5" transform="rotate(-38 430.2 330.9)"/><rect x="505.5" y="309.2" width="2.7" height="1.0" transform="rotate(-29 505.5 309.2)"/><rect x="470.5" y="323.6" width="3.4" height="1.8" transform="rotate(-38 470.5 323.6)"/><rect x="427.9" y="360.9" width="2.5" height="1.1" transform="rotate(-39 427.9 360.9)"/><rect x="473.7" y="345.8" width="3.9" height="1.5" transform="rotate(-34 473.7 345.8)"/><rect x="428.8" y="359.4" width="2.2" height="1.2" transform="rotate(-37 428.8 359.4)"/><rect x="459.3" y="309.4" width="3.0" height="1.2" transform="rotate(-30 459.3 309.4)"/><rect x="495.1" y="336.9" width="1.6" height="1.3" transform="rotate(-33 495.1 336.9)"/><rect x="463.0" y="308.2" width="1.8" height="1.1" transform="rotate(-38 463.0 308.2)"/><rect x="496.5" y="340.8" width="3.2" height="1.2" transform="rotate(-39 496.5 340.8)"/><rect x="419.9" y="357.3" width="4.0" height="1.3" transform="rotate(-34 419.9 357.3)"/><rect x="424.1" y="369.8" width="3.2" height="1.0" transform="rotate(-40 424.1 369.8)"/><rect x="422.7" y="357.2" width="2.2" height="1.5" transform="rotate(-37 422.7 357.2)"/><rect x="523.3" y="318.7" width="3.2" height="1.6" transform="rotate(-35 523.3 318.7)"/><rect x="474.3" y="337.0" width="2.5" height="1.9" transform="rotate(-33 474.3 337.0)"/><rect x="418.4" y="322.8" width="2.9" height="1.3" transform="rotate(-38 418.4 322.8)"/><rect x="468.8" y="328.3" width="2.5" height="1.1" transform="rotate(-37 468.8 328.3)"/><rect x="488.7" y="338.2" width="2.9" height="1.8" transform="rotate(-32 488.7 338.2)"/><rect x="433.3" y="357.5" width="1.9" height="1.9" transform="rotate(-39 433.3 357.5)"/><rect x="524.7" y="292.3" width="3.6" height="1.8" transform="rotate(-37 524.7 292.3)"/><rect x="526.2" y="284.4" width="3.6" height="1.4" transform="rotate(-36 526.2 284.4)"/><rect x="427.2" y="355.4" width="3.5" height="1.6" transform="rotate(-41 427.2 355.4)"/><rect x="486.9" y="315.1" width="2.9" height="1.9" transform="rotate(-35 486.9 315.1)"/><rect x="449.3" y="346.8" width="1.6" height="1.5" transform="rotate(-41 449.3 346.8)"/><rect x="441.0" y="299.9" width="4.0" height="1.9" transform="rotate(-33 441.0 299.9)"/><rect x="422.4" y="340.7" width="2.4" height="1.2" transform="rotate(-32 422.4 340.7)"/><rect x="453.6" y="314.7" width="2.2" height="1.8" transform="rotate(-36 453.6 314.7)"/><rect x="411.6" y="352.0" width="2.7" height="1.3" transform="rotate(-32 411.6 352.0)"/><rect x="527.6" y="315.7" width="3.6" height="1.2" transform="rotate(-32 527.6 315.7)"/><rect x="509.5" y="326.6" width="2.7" height="1.5" transform="rotate(-32 509.5 326.6)"/><rect x="499.7" y="289.1" width="2.6" height="1.5" transform="rotate(-34 499.7 289.1)"/><rect x="511.7" y="302.4" width="1.9" height="2.0" transform="rotate(-31 511.7 302.4)"/><rect x="535.5" y="264.6" width="2.5" height="1.6" transform="rotate(-32 535.5 264.6)"/><rect x="477.7" y="333.8" width="2.6" height="1.8" transform="rotate(-30 477.7 333.8)"/><rect x="469.9" y="296.7" width="3.4" height="1.1" transform="rotate(-33 469.9 296.7)"/><rect x="445.9" y="340.4" width="3.1" height="1.5" transform="rotate(-29 445.9 340.4)"/><rect x="428.5" y="320.2" width="3.0" height="2.0" transform="rotate(-33 428.5 320.2)"/><rect x="434.9" y="336.9" width="2.6" height="1.5" transform="rotate(-36 434.9 336.9)"/><rect x="514.7" y="312.4" width="1.9" height="1.6" transform="rotate(-31 514.7 312.4)"/><rect x="501.0" y="309.1" width="1.9" height="1.3" transform="rotate(-37 501.0 309.1)"/><rect x="428.7" y="327.5" width="1.9" height="1.1" transform="rotate(-38 428.7 327.5)"/><rect x="415.4" y="374.2" width="2.8" height="1.2" transform="rotate(-36 415.4 374.2)"/><rect x="472.6" y="316.8" width="2.0" height="1.6" transform="rotate(-40 472.6 316.8)"/><rect x="503.4" y="315.6" width="3.2" height="1.6" transform="rotate(-39 503.4 315.6)"/><rect x="422.6" y="315.4" width="2.2" height="1.7" transform="rotate(-29 422.6 315.4)"/><rect x="420.0" y="361.3" width="2.4" height="1.5" transform="rotate(-40 420.0 361.3)"/><rect x="516.4" y="291.2" width="2.7" height="1.3" transform="rotate(-31 516.4 291.2)"/><rect x="478.8" y="348.1" width="3.4" height="1.3" transform="rotate(-40 478.8 348.1)"/><rect x="516.6" y="306.2" width="3.5" height="2.0" transform="rotate(-33 516.6 306.2)"/><rect x="400.5" y="381.6" width="3.1" height="1.2" transform="rotate(-39 400.5 381.6)"/><rect x="515.1" y="315.7" width="3.8" height="1.1" transform="rotate(-32 515.1 315.7)"/><rect x="506.1" y="314.9" width="2.7" height="1.6" transform="rotate(-38 506.1 314.9)"/><rect x="507.0" y="321.0" width="2.2" height="1.1" transform="rotate(-31 507.0 321.0)"/><rect x="418.3" y="377.2" width="2.8" height="1.9" transform="rotate(-30 418.3 377.2)"/><rect x="479.3" y="288.6" width="2.8" height="1.5" transform="rotate(-39 479.3 288.6)"/><rect x="394.3" y="388.8" width="2.6" height="1.8" transform="rotate(-39 394.3 388.8)"/><rect x="407.6" y="388.9" width="2.2" height="1.0" transform="rotate(-35 407.6 388.9)"/><rect x="487.4" y="317.2" width="3.8" height="1.5" transform="rotate(-30 487.4 317.2)"/><rect x="460.3" y="321.8" width="3.0" height="1.3" transform="rotate(-39 460.3 321.8)"/><rect x="437.9" y="313.6" width="2.9" height="1.6" transform="rotate(-34 437.9 313.6)"/><rect x="461.6" y="350.8" width="3.6" height="1.4" transform="rotate(-35 461.6 350.8)"/><rect x="434.8" y="333.2" width="3.6" height="2.0" transform="rotate(-31 434.8 333.2)"/><rect x="515.2" y="299.2" width="3.9" height="1.6" transform="rotate(-34 515.2 299.2)"/><rect x="429.2" y="363.7" width="2.2" height="1.2" transform="rotate(-38 429.2 363.7)"/><rect x="460.9" y="365.3" width="2.3" height="1.9" transform="rotate(-29 460.9 365.3)"/><rect x="521.5" y="280.7" width="2.6" height="1.4" transform="rotate(-32 521.5 280.7)"/><rect x="468.5" y="291.3" width="2.2" height="1.5" transform="rotate(-37 468.5 291.3)"/><rect x="446.7" y="353.5" width="2.0" height="1.2" transform="rotate(-33 446.7 353.5)"/><rect x="452.2" y="328.4" width="1.6" height="1.0" transform="rotate(-40 452.2 328.4)"/><rect x="497.2" y="310.1" width="1.7" height="1.4" transform="rotate(-33 497.2 310.1)"/><rect x="472.1" y="332.2" width="2.7" height="1.7" transform="rotate(-34 472.1 332.2)"/><rect x="521.1" y="325.0" width="2.7" height="1.8" transform="rotate(-33 521.1 325.0)"/><rect x="467.9" y="340.9" width="3.5" height="1.6" transform="rotate(-38 467.9 340.9)"/><rect x="433.6" y="346.6" width="1.6" height="1.5" transform="rotate(-30 433.6 346.6)"/><rect x="421.1" y="324.2" width="3.2" height="1.9" transform="rotate(-33 421.1 324.2)"/><rect x="484.1" y="315.7" width="2.6" height="1.6" transform="rotate(-37 484.1 315.7)"/><rect x="438.1" y="344.5" width="3.5" height="1.9" transform="rotate(-38 438.1 344.5)"/><rect x="496.1" y="287.6" width="3.4" height="1.5" transform="rotate(-34 496.1 287.6)"/><rect x="442.5" y="303.1" width="2.6" height="1.5" transform="rotate(-35 442.5 303.1)"/><rect x="481.3" y="348.5" width="3.1" height="1.2" transform="rotate(-36 481.3 348.5)"/><rect x="496.7" y="305.0" width="2.7" height="1.7" transform="rotate(-41 496.7 305.0)"/><rect x="443.3" y="339.5" width="3.7" height="1.5" transform="rotate(-37 443.3 339.5)"/><rect x="480.6" y="343.7" width="2.2" height="1.5" transform="rotate(-38 480.6 343.7)"/><rect x="472.1" y="297.2" width="2.1" height="1.2" transform="rotate(-30 472.1 297.2)"/><rect x="422.2" y="339.7" width="2.6" height="1.3" transform="rotate(-36 422.2 339.7)"/><rect x="528.9" y="275.7" width="3.5" height="1.9" transform="rotate(-39 528.9 275.7)"/><rect x="439.1" y="344.5" width="2.6" height="1.8" transform="rotate(-33 439.1 344.5)"/><rect x="424.3" y="321.2" width="2.1" height="1.0" transform="rotate(-38 424.3 321.2)"/><rect x="489.5" y="348.2" width="3.7" height="1.4" transform="rotate(-36 489.5 348.2)"/><rect x="504.8" y="313.9" width="2.6" height="1.4" transform="rotate(-36 504.8 313.9)"/><rect x="497.8" y="282.9" width="2.6" height="1.6" transform="rotate(-39 497.8 282.9)"/><rect x="421.7" y="352.3" width="1.9" height="1.9" transform="rotate(-37 421.7 352.3)"/><rect x="452.5" y="339.0" width="3.7" height="1.9" transform="rotate(-31 452.5 339.0)"/><rect x="413.9" y="336.8" width="4.0" height="1.7" transform="rotate(-39 413.9 336.8)"/><rect x="535.8" y="266.6" width="2.2" height="1.6" transform="rotate(-29 535.8 266.6)"/><rect x="519.7" y="307.8" width="2.5" height="1.4" transform="rotate(-40 519.7 307.8)"/><rect x="526.5" y="281.7" width="2.1" height="1.3" transform="rotate(-35 526.5 281.7)"/><rect x="476.9" y="328.5" width="2.8" height="1.4" transform="rotate(-36 476.9 328.5)"/><rect x="506.1" y="280.7" width="2.0" height="1.2" transform="rotate(-37 506.1 280.7)"/><rect x="487.0" y="289.5" width="2.4" height="1.6" transform="rotate(-31 487.0 289.5)"/><rect x="502.6" y="341.4" width="4.0" height="1.6" transform="rotate(-30 502.6 341.4)"/><rect x="475.7" y="329.3" width="2.5" height="1.1" transform="rotate(-40 475.7 329.3)"/><rect x="436.4" y="305.8" width="3.6" height="1.3" transform="rotate(-37 436.4 305.8)"/><rect x="431.1" y="350.7" width="1.6" height="1.4" transform="rotate(-30 431.1 350.7)"/><rect x="418.8" y="311.9" width="3.1" height="1.6" transform="rotate(-34 418.8 311.9)"/><rect x="435.6" y="311.2" width="2.5" height="1.5" transform="rotate(-34 435.6 311.2)"/><rect x="523.8" y="317.4" width="2.6" height="1.8" transform="rotate(-29 523.8 317.4)"/><rect x="422.9" y="364.3" width="2.1" height="1.7" transform="rotate(-41 422.9 364.3)"/><rect x="465.1" y="341.8" width="3.2" height="1.9" transform="rotate(-31 465.1 341.8)"/><rect x="474.1" y="331.6" width="1.5" height="1.6" transform="rotate(-34 474.1 331.6)"/><rect x="502.7" y="285.2" width="3.0" height="1.1" transform="rotate(-32 502.7 285.2)"/><rect x="515.5" y="323.3" width="3.2" height="1.7" transform="rotate(-37 515.5 323.3)"/><rect x="543.0" y="279.3" width="2.2" height="2.0" transform="rotate(-37 543.0 279.3)"/><rect x="482.8" y="305.1" width="2.9" height="1.4" transform="rotate(-36 482.8 305.1)"/><rect x="482.9" y="323.5" width="3.5" height="1.4" transform="rotate(-31 482.9 323.5)"/><rect x="508.1" y="286.3" width="3.0" height="1.2" transform="rotate(-32 508.1 286.3)"/><rect x="394.4" y="391.9" width="2.1" height="1.8" transform="rotate(-36 394.4 391.9)"/><rect x="470.6" y="321.8" width="3.7" height="1.7" transform="rotate(-35 470.6 321.8)"/><rect x="420.0" y="375.5" width="2.0" height="1.5" transform="rotate(-30 420.0 375.5)"/><rect x="443.9" y="307.0" width="2.2" height="1.0" transform="rotate(-35 443.9 307.0)"/><rect x="455.3" y="365.7" width="2.3" height="1.6" transform="rotate(-37 455.3 365.7)"/><rect x="504.5" y="286.4" width="2.7" height="1.4" transform="rotate(-35 504.5 286.4)"/><rect x="470.1" y="337.1" width="2.3" height="1.8" transform="rotate(-30 470.1 337.1)"/><rect x="473.4" y="351.0" width="3.3" height="1.3" transform="rotate(-34 473.4 351.0)"/><rect x="458.0" y="329.8" width="2.5" height="1.5" transform="rotate(-38 458.0 329.8)"/><rect x="479.1" y="296.3" width="3.5" height="1.9" transform="rotate(-32 479.1 296.3)"/><rect x="439.1" y="312.6" width="3.0" height="1.7" transform="rotate(-36 439.1 312.6)"/><rect x="447.6" y="359.8" width="3.2" height="1.2" transform="rotate(-36 447.6 359.8)"/><rect x="518.4" y="293.1" width="1.7" height="1.6" transform="rotate(-36 518.4 293.1)"/><rect x="497.7" y="303.1" width="2.6" height="1.8" transform="rotate(-40 497.7 303.1)"/><rect x="470.8" y="351.3" width="3.3" height="2.0" transform="rotate(-30 470.8 351.3)"/><rect x="538.9" y="278.8" width="3.0" height="1.1" transform="rotate(-39 538.9 278.8)"/><rect x="437.4" y="373.1" width="3.3" height="1.3" transform="rotate(-39 437.4 373.1)"/><rect x="421.6" y="331.6" width="2.7" height="1.9" transform="rotate(-40 421.6 331.6)"/><rect x="469.3" y="341.1" width="1.9" height="1.4" transform="rotate(-39 469.3 341.1)"/><rect x="499.1" y="290.9" width="3.8" height="1.0" transform="rotate(-33 499.1 290.9)"/><rect x="414.3" y="373.6" width="3.5" height="1.8" transform="rotate(-40 414.3 373.6)"/><rect x="467.6" y="353.3" width="3.2" height="1.1" transform="rotate(-37 467.6 353.3)"/><rect x="439.8" y="367.1" width="2.5" height="1.4" transform="rotate(-34 439.8 367.1)"/><rect x="491.1" y="325.9" width="3.0" height="1.6" transform="rotate(-40 491.1 325.9)"/><rect x="509.7" y="320.2" width="3.6" height="1.7" transform="rotate(-33 509.7 320.2)"/><rect x="456.7" y="358.4" width="2.8" height="1.6" transform="rotate(-37 456.7 358.4)"/><rect x="518.6" y="296.4" width="3.1" height="1.4" transform="rotate(-39 518.6 296.4)"/><rect x="430.1" y="328.1" width="1.6" height="1.1" transform="rotate(-31 430.1 328.1)"/><rect x="459.2" y="346.4" width="1.7" height="1.5" transform="rotate(-33 459.2 346.4)"/><rect x="471.2" y="319.4" width="3.8" height="1.5" transform="rotate(-35 471.2 319.4)"/><rect x="501.4" y="323.3" width="1.7" height="1.6" transform="rotate(-31 501.4 323.3)"/><rect x="400.9" y="388.9" width="1.8" height="1.7" transform="rotate(-40 400.9 388.9)"/><rect x="481.8" y="342.3" width="2.9" height="1.4" transform="rotate(-41 481.8 342.3)"/><rect x="479.2" y="300.7" width="3.1" height="1.4" transform="rotate(-38 479.2 300.7)"/><rect x="469.4" y="299.6" width="1.9" height="1.7" transform="rotate(-36 469.4 299.6)"/><rect x="477.6" y="287.6" width="2.8" height="1.7" transform="rotate(-32 477.6 287.6)"/><rect x="490.6" y="319.9" width="3.2" height="1.6" transform="rotate(-35 490.6 319.9)"/><rect x="484.8" y="304.9" width="1.7" height="1.1" transform="rotate(-29 484.8 304.9)"/><rect x="510.3" y="337.8" width="2.3" height="1.1" transform="rotate(-29 510.3 337.8)"/><rect x="455.3" y="364.1" width="3.8" height="1.5" transform="rotate(-39 455.3 364.1)"/><rect x="493.6" y="346.8" width="3.1" height="1.7" transform="rotate(-30 493.6 346.8)"/><rect x="455.6" y="347.5" width="2.8" height="1.6" transform="rotate(-33 455.6 347.5)"/><rect x="472.8" y="304.7" width="3.5" height="1.2" transform="rotate(-39 472.8 304.7)"/><rect x="440.5" y="358.6" width="2.9" height="1.3" transform="rotate(-39 440.5 358.6)"/><rect x="476.4" y="296.7" width="3.6" height="1.3" transform="rotate(-30 476.4 296.7)"/><rect x="429.2" y="328.4" width="2.6" height="1.8" transform="rotate(-39 429.2 328.4)"/><rect x="440.8" y="311.7" width="3.8" height="2.0" transform="rotate(-32 440.8 311.7)"/><rect x="425.2" y="358.7" width="3.9" height="1.5" transform="rotate(-40 425.2 358.7)"/><rect x="433.9" y="370.7" width="3.3" height="2.0" transform="rotate(-30 433.9 370.7)"/><rect x="506.9" y="326.0" width="3.7" height="1.1" transform="rotate(-31 506.9 326.0)"/><rect x="496.2" y="323.1" width="2.8" height="1.1" transform="rotate(-38 496.2 323.1)"/><rect x="441.4" y="352.0" width="3.0" height="1.9" transform="rotate(-36 441.4 352.0)"/><rect x="472.6" y="321.1" width="3.4" height="1.6" transform="rotate(-30 472.6 321.1)"/><rect x="430.8" y="348.3" width="3.1" height="1.2" transform="rotate(-38 430.8 348.3)"/><rect x="479.3" y="299.0" width="3.6" height="1.1" transform="rotate(-32 479.3 299.0)"/><rect x="507.2" y="325.6" width="3.4" height="1.3" transform="rotate(-31 507.2 325.6)"/><rect x="518.6" y="294.6" width="1.6" height="1.8" transform="rotate(-36 518.6 294.6)"/><rect x="481.7" y="310.7" width="1.6" height="1.1" transform="rotate(-40 481.7 310.7)"/><rect x="433.1" y="305.1" width="2.8" height="1.6" transform="rotate(-31 433.1 305.1)"/><rect x="521.0" y="286.0" width="3.1" height="1.9" transform="rotate(-38 521.0 286.0)"/><rect x="517.0" y="307.2" width="2.3" height="1.0" transform="rotate(-35 517.0 307.2)"/><rect x="418.6" y="372.6" width="3.3" height="1.3" transform="rotate(-38 418.6 372.6)"/><rect x="486.0" y="333.6" width="3.5" height="1.4" transform="rotate(-40 486.0 333.6)"/><rect x="467.8" y="362.1" width="2.9" height="1.0" transform="rotate(-30 467.8 362.1)"/><rect x="457.3" y="337.6" width="2.0" height="1.2" transform="rotate(-38 457.3 337.6)"/><rect x="426.3" y="310.9" width="2.2" height="1.0" transform="rotate(-41 426.3 310.9)"/><rect x="456.3" y="304.6" width="2.1" height="1.9" transform="rotate(-39 456.3 304.6)"/><rect x="540.5" y="266.0" width="2.1" height="1.5" transform="rotate(-31 540.5 266.0)"/><rect x="535.9" y="263.2" width="1.8" height="1.0" transform="rotate(-39 535.9 263.2)"/><rect x="530.2" y="273.9" width="2.8" height="1.2" transform="rotate(-41 530.2 273.9)"/><rect x="468.8" y="336.7" width="2.2" height="1.2" transform="rotate(-35 468.8 336.7)"/><rect x="419.0" y="317.6" width="3.7" height="1.7" transform="rotate(-34 419.0 317.6)"/><rect x="446.3" y="300.0" width="1.6" height="1.2" transform="rotate(-33 446.3 300.0)"/><rect x="414.5" y="334.9" width="2.8" height="1.2" transform="rotate(-40 414.5 334.9)"/><rect x="477.9" y="328.5" width="1.9" height="1.8" transform="rotate(-34 477.9 328.5)"/><rect x="438.1" y="328.5" width="2.8" height="1.4" transform="rotate(-31 438.1 328.5)"/><rect x="474.6" y="314.8" width="3.1" height="1.1" transform="rotate(-33 474.6 314.8)"/><rect x="492.3" y="300.7" width="3.0" height="1.8" transform="rotate(-31 492.3 300.7)"/><rect x="500.7" y="330.5" width="2.5" height="2.0" transform="rotate(-38 500.7 330.5)"/><rect x="490.0" y="292.6" width="3.4" height="1.2" transform="rotate(-37 490.0 292.6)"/><rect x="459.5" y="354.9" width="3.6" height="1.6" transform="rotate(-34 459.5 354.9)"/><rect x="433.7" y="337.3" width="3.0" height="1.7" transform="rotate(-41 433.7 337.3)"/><rect x="523.8" y="295.3" width="3.9" height="1.3" transform="rotate(-31 523.8 295.3)"/><rect x="465.9" y="317.1" width="4.0" height="1.2" transform="rotate(-36 465.9 317.1)"/><rect x="470.1" y="348.8" width="1.9" height="1.8" transform="rotate(-38 470.1 348.8)"/><rect x="498.4" y="319.5" width="2.8" height="1.3" transform="rotate(-37 498.4 319.5)"/><rect x="532.1" y="273.0" width="3.6" height="1.7" transform="rotate(-39 532.1 273.0)"/><rect x="465.4" y="333.1" width="2.8" height="1.2" transform="rotate(-29 465.4 333.1)"/><rect x="503.7" y="302.0" width="2.4" height="1.7" transform="rotate(-31 503.7 302.0)"/><rect x="472.2" y="302.1" width="2.4" height="1.5" transform="rotate(-30 472.2 302.1)"/><rect x="496.6" y="293.6" width="1.6" height="1.7" transform="rotate(-38 496.6 293.6)"/><rect x="524.3" y="284.5" width="4.0" height="1.8" transform="rotate(-38 524.3 284.5)"/><rect x="459.6" y="365.8" width="2.0" height="1.6" transform="rotate(-40 459.6 365.8)"/><rect x="454.6" y="310.9" width="2.6" height="1.7" transform="rotate(-32 454.6 310.9)"/><rect x="453.7" y="299.3" width="1.9" height="1.1" transform="rotate(-29 453.7 299.3)"/><rect x="538.8" y="271.4" width="3.0" height="2.0" transform="rotate(-34 538.8 271.4)"/><rect x="539.3" y="282.3" width="3.3" height="1.8" transform="rotate(-40 539.3 282.3)"/><rect x="421.3" y="348.3" width="3.8" height="1.7" transform="rotate(-32 421.3 348.3)"/><rect x="462.3" y="360.5" width="1.6" height="1.1" transform="rotate(-37 462.3 360.5)"/><rect x="408.9" y="389.4" width="2.6" height="1.6" transform="rotate(-36 408.9 389.4)"/><rect x="428.6" y="362.8" width="2.5" height="1.5" transform="rotate(-38 428.6 362.8)"/><rect x="426.2" y="315.8" width="1.8" height="1.4" transform="rotate(-38 426.2 315.8)"/><rect x="500.3" y="305.8" width="3.2" height="1.0" transform="rotate(-33 500.3 305.8)"/><rect x="486.0" y="302.7" width="3.4" height="1.9" transform="rotate(-30 486.0 302.7)"/><rect x="495.1" y="323.5" width="3.0" height="1.8" transform="rotate(-37 495.1 323.5)"/><rect x="455.5" y="358.1" width="3.1" height="1.4" transform="rotate(-32 455.5 358.1)"/><rect x="506.0" y="310.8" width="2.5" height="1.0" transform="rotate(-30 506.0 310.8)"/><rect x="513.2" y="334.3" width="3.0" height="1.8" transform="rotate(-39 513.2 334.3)"/><rect x="425.0" y="357.1" width="3.4" height="1.4" transform="rotate(-30 425.0 357.1)"/><rect x="464.5" y="351.9" width="3.0" height="2.0" transform="rotate(-36 464.5 351.9)"/><rect x="446.7" y="364.1" width="3.5" height="1.7" transform="rotate(-39 446.7 364.1)"/><rect x="485.4" y="299.6" width="2.2" height="1.3" transform="rotate(-41 485.4 299.6)"/><rect x="402.2" y="380.0" width="3.8" height="2.0" transform="rotate(-34 402.2 380.0)"/><rect x="522.5" y="286.0" width="3.6" height="1.4" transform="rotate(-35 522.5 286.0)"/><rect x="397.9" y="384.0" width="1.6" height="1.3" transform="rotate(-37 397.9 384.0)"/><rect x="509.5" y="326.2" width="1.8" height="2.0" transform="rotate(-38 509.5 326.2)"/><rect x="452.9" y="356.1" width="2.2" height="1.4" transform="rotate(-32 452.9 356.1)"/><rect x="482.3" y="294.2" width="3.6" height="1.4" transform="rotate(-39 482.3 294.2)"/><rect x="491.0" y="321.8" width="3.1" height="1.1" transform="rotate(-40 491.0 321.8)"/><rect x="431.3" y="334.1" width="2.0" height="1.2" transform="rotate(-31 431.3 334.1)"/><rect x="422.7" y="310.6" width="3.7" height="2.0" transform="rotate(-32 422.7 310.6)"/><rect x="518.0" y="307.7" width="3.4" height="1.6" transform="rotate(-39 518.0 307.7)"/><rect x="495.7" y="298.3" width="3.8" height="1.1" transform="rotate(-33 495.7 298.3)"/><rect x="494.1" y="313.8" width="3.5" height="1.2" transform="rotate(-29 494.1 313.8)"/><rect x="436.8" y="373.3" width="2.4" height="1.6" transform="rotate(-33 436.8 373.3)"/><rect x="428.1" y="311.5" width="1.7" height="1.8" transform="rotate(-31 428.1 311.5)"/><rect x="419.7" y="328.1" width="2.4" height="1.3" transform="rotate(-41 419.7 328.1)"/><rect x="411.4" y="367.6" width="3.4" height="1.5" transform="rotate(-31 411.4 367.6)"/><rect x="451.7" y="349.0" width="1.7" height="1.2" transform="rotate(-34 451.7 349.0)"/><rect x="518.8" y="328.4" width="3.8" height="1.5" transform="rotate(-36 518.8 328.4)"/><rect x="431.8" y="372.3" width="2.1" height="1.6" transform="rotate(-37 431.8 372.3)"/><rect x="435.4" y="300.9" width="2.3" height="1.9" transform="rotate(-34 435.4 300.9)"/><rect x="463.6" y="299.0" width="2.2" height="1.8" transform="rotate(-37 463.6 299.0)"/><rect x="517.3" y="331.3" width="1.9" height="1.9" transform="rotate(-41 517.3 331.3)"/><rect x="434.7" y="335.2" width="2.3" height="1.4" transform="rotate(-40 434.7 335.2)"/><rect x="422.6" y="311.6" width="2.6" height="1.7" transform="rotate(-35 422.6 311.6)"/><rect x="417.5" y="372.9" width="2.2" height="1.2" transform="rotate(-41 417.5 372.9)"/><rect x="444.8" y="323.1" width="3.8" height="2.0" transform="rotate(-37 444.8 323.1)"/><rect x="478.1" y="330.2" width="2.0" height="1.5" transform="rotate(-40 478.1 330.2)"/><rect x="511.4" y="318.6" width="3.1" height="1.8" transform="rotate(-38 511.4 318.6)"/><rect x="418.9" y="370.9" width="2.2" height="1.3" transform="rotate(-40 418.9 370.9)"/><rect x="495.1" y="304.8" width="2.2" height="1.1" transform="rotate(-39 495.1 304.8)"/><rect x="486.5" y="336.3" width="3.3" height="1.2" transform="rotate(-36 486.5 336.3)"/><rect x="450.5" y="348.4" width="3.9" height="1.8" transform="rotate(-40 450.5 348.4)"/><rect x="490.3" y="288.9" width="3.0" height="1.8" transform="rotate(-38 490.3 288.9)"/><rect x="539.5" y="282.6" width="3.1" height="1.4" transform="rotate(-32 539.5 282.6)"/><rect x="464.0" y="292.6" width="3.6" height="1.5" transform="rotate(-41 464.0 292.6)"/><rect x="487.2" y="347.2" width="2.5" height="1.3" transform="rotate(-33 487.2 347.2)"/><rect x="444.1" y="369.5" width="3.7" height="1.7" transform="rotate(-30 444.1 369.5)"/><rect x="482.8" y="302.1" width="2.2" height="1.9" transform="rotate(-35 482.8 302.1)"/><rect x="425.6" y="370.5" width="2.0" height="1.9" transform="rotate(-41 425.6 370.5)"/><rect x="494.1" y="348.1" width="3.5" height="1.8" transform="rotate(-30 494.1 348.1)"/><rect x="451.8" y="313.3" width="3.0" height="1.5" transform="rotate(-39 451.8 313.3)"/><rect x="453.2" y="316.8" width="3.7" height="1.1" transform="rotate(-32 453.2 316.8)"/><rect x="403.7" y="384.3" width="1.6" height="1.6" transform="rotate(-40 403.7 384.3)"/><rect x="420.7" y="358.3" width="2.5" height="1.7" transform="rotate(-38 420.7 358.3)"/><rect x="522.6" y="315.0" width="3.9" height="1.6" transform="rotate(-39 522.6 315.0)"/><rect x="464.6" y="357.2" width="3.4" height="1.1" transform="rotate(-29 464.6 357.2)"/><rect x="498.9" y="344.5" width="2.2" height="1.8" transform="rotate(-40 498.9 344.5)"/><rect x="414.9" y="369.0" width="3.0" height="1.2" transform="rotate(-36 414.9 369.0)"/><rect x="519.7" y="286.2" width="1.7" height="1.5" transform="rotate(-39 519.7 286.2)"/><rect x="493.2" y="296.2" width="2.0" height="1.6" transform="rotate(-29 493.2 296.2)"/><rect x="475.9" y="314.1" width="1.7" height="1.5" transform="rotate(-39 475.9 314.1)"/><rect x="474.7" y="322.7" width="2.9" height="1.6" transform="rotate(-34 474.7 322.7)"/><rect x="402.8" y="385.8" width="3.4" height="1.4" transform="rotate(-36 402.8 385.8)"/><rect x="474.0" y="316.8" width="3.2" height="2.0" transform="rotate(-40 474.0 316.8)"/><rect x="522.1" y="326.9" width="3.2" height="1.5" transform="rotate(-37 522.1 326.9)"/><rect x="460.4" y="301.5" width="2.0" height="1.6" transform="rotate(-38 460.4 301.5)"/><rect x="420.3" y="321.4" width="2.0" height="1.8" transform="rotate(-35 420.3 321.4)"/><rect x="495.8" y="305.3" width="2.2" height="1.2" transform="rotate(-41 495.8 305.3)"/><rect x="505.3" y="307.6" width="2.1" height="1.1" transform="rotate(-35 505.3 307.6)"/><rect x="463.4" y="329.9" width="2.9" height="1.4" transform="rotate(-30 463.4 329.9)"/><rect x="479.0" y="323.0" width="3.9" height="1.5" transform="rotate(-41 479.0 323.0)"/><rect x="488.5" y="290.0" width="3.6" height="1.0" transform="rotate(-31 488.5 290.0)"/><rect x="405.6" y="379.8" width="1.9" height="1.1" transform="rotate(-38 405.6 379.8)"/><rect x="464.6" y="358.9" width="2.8" height="1.1" transform="rotate(-30 464.6 358.9)"/><rect x="518.2" y="313.3" width="1.6" height="1.4" transform="rotate(-29 518.2 313.3)"/><rect x="536.6" y="285.6" width="2.0" height="2.0" transform="rotate(-37 536.6 285.6)"/><rect x="412.6" y="337.7" width="2.5" height="1.1" transform="rotate(-34 412.6 337.7)"/><rect x="413.1" y="326.7" width="3.9" height="1.0" transform="rotate(-31 413.1 326.7)"/><rect x="385.9" y="400.3" width="2.5" height="1.3" transform="rotate(-30 385.9 400.3)"/><rect x="463.8" y="316.0" width="2.3" height="1.4" transform="rotate(-38 463.8 316.0)"/><rect x="466.9" y="323.0" width="2.2" height="1.0" transform="rotate(-39 466.9 323.0)"/><rect x="531.8" y="282.9" width="3.8" height="1.9" transform="rotate(-37 531.8 282.9)"/><rect x="523.4" y="283.6" width="1.8" height="1.1" transform="rotate(-33 523.4 283.6)"/><rect x="405.9" y="386.0" width="3.7" height="1.1" transform="rotate(-41 405.9 386.0)"/><rect x="457.0" y="362.3" width="3.3" height="1.3" transform="rotate(-39 457.0 362.3)"/><rect x="452.2" y="312.4" width="2.6" height="1.3" transform="rotate(-35 452.2 312.4)"/><rect x="423.3" y="361.6" width="3.5" height="1.7" transform="rotate(-30 423.3 361.6)"/><rect x="482.8" y="287.7" width="2.0" height="1.1" transform="rotate(-30 482.8 287.7)"/><rect x="436.9" y="310.6" width="1.8" height="1.8" transform="rotate(-34 436.9 310.6)"/><rect x="416.7" y="373.3" width="2.8" height="1.8" transform="rotate(-33 416.7 373.3)"/><rect x="453.0" y="311.9" width="3.7" height="1.2" transform="rotate(-40 453.0 311.9)"/><rect x="424.3" y="316.9" width="2.4" height="1.3" transform="rotate(-35 424.3 316.9)"/><rect x="502.0" y="310.5" width="1.8" height="1.3" transform="rotate(-38 502.0 310.5)"/><rect x="432.7" y="355.5" width="3.2" height="1.2" transform="rotate(-33 432.7 355.5)"/><rect x="489.7" y="299.2" width="3.0" height="1.9" transform="rotate(-33 489.7 299.2)"/><rect x="473.3" y="341.8" width="2.1" height="1.5" transform="rotate(-40 473.3 341.8)"/><rect x="465.4" y="321.9" width="1.7" height="1.7" transform="rotate(-31 465.4 321.9)"/><rect x="497.0" y="288.5" width="2.4" height="1.2" transform="rotate(-35 497.0 288.5)"/><rect x="487.9" y="340.2" width="1.9" height="1.2" transform="rotate(-38 487.9 340.2)"/><rect x="471.1" y="294.1" width="2.3" height="1.7" transform="rotate(-40 471.1 294.1)"/><rect x="524.6" y="319.8" width="3.0" height="1.0" transform="rotate(-40 524.6 319.8)"/><rect x="485.9" y="305.6" width="2.3" height="2.0" transform="rotate(-31 485.9 305.6)"/><rect x="433.1" y="315.9" width="2.2" height="1.1" transform="rotate(-30 433.1 315.9)"/><rect x="484.9" y="296.4" width="3.8" height="1.9" transform="rotate(-29 484.9 296.4)"/><rect x="522.0" y="327.1" width="2.9" height="1.7" transform="rotate(-38 522.0 327.1)"/><rect x="388.9" y="397.6" width="3.3" height="1.6" transform="rotate(-39 388.9 397.6)"/><rect x="446.1" y="321.0" width="3.9" height="1.8" transform="rotate(-29 446.1 321.0)"/><rect x="496.3" y="316.1" width="2.4" height="1.1" transform="rotate(-40 496.3 316.1)"/><rect x="477.1" y="291.7" width="2.8" height="1.9" transform="rotate(-35 477.1 291.7)"/><rect x="453.4" y="355.6" width="2.9" height="1.4" transform="rotate(-37 453.4 355.6)"/><rect x="416.5" y="326.6" width="3.7" height="1.8" transform="rotate(-29 416.5 326.6)"/><rect x="483.7" y="301.8" width="3.7" height="1.1" transform="rotate(-30 483.7 301.8)"/><rect x="455.6" y="357.5" width="3.7" height="1.5" transform="rotate(-31 455.6 357.5)"/><rect x="518.2" y="333.3" width="3.8" height="1.2" transform="rotate(-39 518.2 333.3)"/><rect x="480.4" y="315.1" width="3.5" height="1.2" transform="rotate(-34 480.4 315.1)"/><rect x="429.1" y="355.9" width="3.2" height="1.6" transform="rotate(-33 429.1 355.9)"/><rect x="507.6" y="334.6" width="3.5" height="1.1" transform="rotate(-40 507.6 334.6)"/><rect x="487.5" y="305.0" width="4.0" height="1.3" transform="rotate(-36 487.5 305.0)"/><rect x="439.1" y="340.2" width="2.0" height="2.0" transform="rotate(-38 439.1 340.2)"/><rect x="438.2" y="374.5" width="1.9" height="1.0" transform="rotate(-29 438.2 374.5)"/><rect x="475.0" y="320.8" width="3.6" height="1.8" transform="rotate(-41 475.0 320.8)"/><rect x="445.4" y="331.9" width="2.0" height="1.6" transform="rotate(-31 445.4 331.9)"/><rect x="459.5" y="337.9" width="2.0" height="1.0" transform="rotate(-35 459.5 337.9)"/><rect x="424.1" y="350.4" width="1.8" height="1.5" transform="rotate(-35 424.1 350.4)"/><rect x="526.3" y="283.5" width="3.8" height="1.8" transform="rotate(-30 526.3 283.5)"/><rect x="532.1" y="273.6" width="2.4" height="1.6" transform="rotate(-37 532.1 273.6)"/><rect x="430.9" y="343.7" width="1.7" height="1.6" transform="rotate(-31 430.9 343.7)"/><rect x="455.1" y="313.0" width="3.4" height="1.5" transform="rotate(-35 455.1 313.0)"/><rect x="411.9" y="357.0" width="3.6" height="1.0" transform="rotate(-37 411.9 357.0)"/><rect x="521.4" y="280.8" width="2.1" height="1.5" transform="rotate(-39 521.4 280.8)"/><rect x="446.3" y="347.5" width="3.4" height="1.5" transform="rotate(-33 446.3 347.5)"/><rect x="493.0" y="323.1" width="2.2" height="1.1" transform="rotate(-33 493.0 323.1)"/><rect x="427.9" y="371.6" width="2.6" height="1.2" transform="rotate(-36 427.9 371.6)"/><rect x="462.4" y="308.3" width="3.5" height="1.6" transform="rotate(-32 462.4 308.3)"/><rect x="446.9" y="355.9" width="1.7" height="1.0" transform="rotate(-41 446.9 355.9)"/><rect x="452.9" y="357.5" width="3.2" height="1.4" transform="rotate(-31 452.9 357.5)"/><rect x="440.7" y="321.2" width="3.6" height="1.5" transform="rotate(-40 440.7 321.2)"/><rect x="407.7" y="369.3" width="3.0" height="1.2" transform="rotate(-40 407.7 369.3)"/><rect x="491.2" y="284.4" width="4.0" height="1.5" transform="rotate(-37 491.2 284.4)"/><rect x="425.0" y="353.6" width="3.8" height="1.6" transform="rotate(-35 425.0 353.6)"/><rect x="531.5" y="280.3" width="3.7" height="1.6" transform="rotate(-38 531.5 280.3)"/><rect x="506.8" y="286.5" width="3.0" height="1.5" transform="rotate(-40 506.8 286.5)"/><rect x="533.9" y="289.4" width="2.4" height="1.6" transform="rotate(-38 533.9 289.4)"/><rect x="406.3" y="377.8" width="4.0" height="2.0" transform="rotate(-37 406.3 377.8)"/><rect x="454.4" y="351.6" width="1.7" height="2.0" transform="rotate(-36 454.4 351.6)"/><rect x="431.0" y="327.7" width="2.4" height="1.2" transform="rotate(-29 431.0 327.7)"/><rect x="498.7" y="330.8" width="1.6" height="1.8" transform="rotate(-29 498.7 330.8)"/><rect x="453.1" y="365.2" width="2.6" height="1.8" transform="rotate(-30 453.1 365.2)"/><rect x="479.3" y="348.3" width="3.1" height="1.4" transform="rotate(-39 479.3 348.3)"/><rect x="516.2" y="334.5" width="3.3" height="1.8" transform="rotate(-30 516.2 334.5)"/><rect x="518.1" y="307.9" width="3.6" height="1.9" transform="rotate(-33 518.1 307.9)"/><rect x="511.8" y="315.8" width="2.3" height="1.8" transform="rotate(-33 511.8 315.8)"/><rect x="432.8" y="373.8" width="3.3" height="1.9" transform="rotate(-37 432.8 373.8)"/><rect x="397.2" y="396.0" width="2.9" height="1.8" transform="rotate(-31 397.2 396.0)"/><rect x="440.6" y="360.4" width="3.4" height="1.3" transform="rotate(-30 440.6 360.4)"/><rect x="520.7" y="316.2" width="3.9" height="1.1" transform="rotate(-31 520.7 316.2)"/><rect x="465.9" y="300.7" width="2.7" height="1.8" transform="rotate(-36 465.9 300.7)"/><rect x="518.5" y="292.8" width="2.8" height="1.4" transform="rotate(-39 518.5 292.8)"/><rect x="410.8" y="321.0" width="2.1" height="1.7" transform="rotate(-40 410.8 321.0)"/><rect x="449.8" y="327.4" width="3.8" height="1.5" transform="rotate(-30 449.8 327.4)"/><rect x="537.3" y="268.3" width="1.8" height="1.8" transform="rotate(-37 537.3 268.3)"/><rect x="458.1" y="353.7" width="2.6" height="1.9" transform="rotate(-41 458.1 353.7)"/><rect x="418.9" y="365.8" width="1.9" height="1.7" transform="rotate(-35 418.9 365.8)"/><rect x="538.1" y="273.1" width="2.8" height="1.9" transform="rotate(-35 538.1 273.1)"/><rect x="449.0" y="307.9" width="2.2" height="2.0" transform="rotate(-40 449.0 307.9)"/><rect x="442.2" y="334.2" width="3.4" height="1.2" transform="rotate(-33 442.2 334.2)"/><rect x="441.0" y="365.7" width="3.5" height="1.7" transform="rotate(-32 441.0 365.7)"/><rect x="443.2" y="305.4" width="2.5" height="1.4" transform="rotate(-37 443.2 305.4)"/><rect x="460.4" y="351.2" width="3.2" height="1.4" transform="rotate(-34 460.4 351.2)"/><rect x="480.8" y="303.2" width="3.5" height="1.3" transform="rotate(-39 480.8 303.2)"/><rect x="524.3" y="294.6" width="3.5" height="1.7" transform="rotate(-34 524.3 294.6)"/><rect x="451.2" y="319.4" width="2.2" height="1.6" transform="rotate(-31 451.2 319.4)"/><rect x="426.0" y="362.7" width="2.6" height="1.0" transform="rotate(-38 426.0 362.7)"/><rect x="468.8" y="307.1" width="2.0" height="1.4" transform="rotate(-40 468.8 307.1)"/><rect x="459.0" y="334.9" width="2.6" height="1.9" transform="rotate(-39 459.0 334.9)"/><rect x="437.5" y="365.6" width="2.7" height="1.0" transform="rotate(-40 437.5 365.6)"/><rect x="448.8" y="302.8" width="2.3" height="1.4" transform="rotate(-31 448.8 302.8)"/><rect x="416.5" y="363.5" width="1.8" height="1.8" transform="rotate(-38 416.5 363.5)"/><rect x="401.7" y="388.0" width="2.2" height="1.3" transform="rotate(-39 401.7 388.0)"/><rect x="455.1" y="305.8" width="1.5" height="1.9" transform="rotate(-31 455.1 305.8)"/><rect x="408.0" y="329.9" width="1.9" height="1.3" transform="rotate(-38 408.0 329.9)"/><rect x="491.4" y="326.9" width="2.7" height="1.4" transform="rotate(-40 491.4 326.9)"/><rect x="445.4" y="362.1" width="2.7" height="1.3" transform="rotate(-30 445.4 362.1)"/><rect x="525.4" y="327.6" width="2.7" height="1.1" transform="rotate(-34 525.4 327.6)"/><rect x="451.8" y="364.6" width="2.0" height="1.1" transform="rotate(-34 451.8 364.6)"/><rect x="487.0" y="320.3" width="2.5" height="1.4" transform="rotate(-31 487.0 320.3)"/><rect x="519.9" y="325.2" width="3.4" height="1.4" transform="rotate(-36 519.9 325.2)"/><rect x="483.6" y="347.2" width="2.6" height="1.5" transform="rotate(-31 483.6 347.2)"/><rect x="437.1" y="349.8" width="1.9" height="2.0" transform="rotate(-40 437.1 349.8)"/><rect x="508.9" y="285.3" width="3.1" height="1.0" transform="rotate(-37 508.9 285.3)"/><rect x="471.9" y="318.2" width="3.7" height="1.4" transform="rotate(-41 471.9 318.2)"/><rect x="461.8" y="316.7" width="2.3" height="1.3" transform="rotate(-39 461.8 316.7)"/><rect x="459.2" y="321.9" width="1.5" height="1.4" transform="rotate(-38 459.2 321.9)"/><rect x="515.1" y="322.0" width="1.8" height="1.5" transform="rotate(-34 515.1 322.0)"/><rect x="506.0" y="313.4" width="3.7" height="1.9" transform="rotate(-32 506.0 313.4)"/><rect x="454.7" y="321.1" width="3.2" height="1.4" transform="rotate(-36 454.7 321.1)"/><rect x="462.1" y="307.2" width="2.1" height="1.0" transform="rotate(-40 462.1 307.2)"/><rect x="412.7" y="328.5" width="2.1" height="1.5" transform="rotate(-32 412.7 328.5)"/><rect x="395.5" y="394.4" width="2.5" height="1.8" transform="rotate(-32 395.5 394.4)"/><rect x="513.3" y="304.3" width="3.4" height="1.5" transform="rotate(-30 513.3 304.3)"/><rect x="410.3" y="349.1" width="3.9" height="1.9" transform="rotate(-29 410.3 349.1)"/><rect x="425.2" y="349.8" width="1.5" height="1.9" transform="rotate(-33 425.2 349.8)"/><rect x="521.2" y="301.8" width="2.8" height="1.9" transform="rotate(-40 521.2 301.8)"/><rect x="454.4" y="306.9" width="2.6" height="1.5" transform="rotate(-33 454.4 306.9)"/><rect x="467.5" y="296.1" width="2.6" height="1.5" transform="rotate(-35 467.5 296.1)"/><rect x="533.8" y="283.1" width="3.1" height="1.3" transform="rotate(-41 533.8 283.1)"/><rect x="423.6" y="363.5" width="2.7" height="1.7" transform="rotate(-30 423.6 363.5)"/><rect x="463.9" y="344.2" width="2.0" height="1.4" transform="rotate(-32 463.9 344.2)"/><rect x="509.8" y="282.2" width="2.0" height="1.5" transform="rotate(-36 509.8 282.2)"/><rect x="517.1" y="312.5" width="2.1" height="1.3" transform="rotate(-30 517.1 312.5)"/><rect x="449.0" y="326.9" width="1.8" height="1.2" transform="rotate(-40 449.0 326.9)"/><rect x="475.8" y="329.1" width="2.5" height="1.1" transform="rotate(-33 475.8 329.1)"/><rect x="456.7" y="354.3" width="2.5" height="1.2" transform="rotate(-37 456.7 354.3)"/><rect x="448.4" y="307.1" width="1.8" height="1.1" transform="rotate(-30 448.4 307.1)"/><rect x="459.3" y="307.4" width="1.6" height="1.7" transform="rotate(-39 459.3 307.4)"/><rect x="446.2" y="316.0" width="2.5" height="1.6" transform="rotate(-35 446.2 316.0)"/><rect x="398.9" y="397.2" width="2.8" height="1.8" transform="rotate(-39 398.9 397.2)"/><rect x="434.8" y="340.0" width="3.7" height="1.5" transform="rotate(-35 434.8 340.0)"/><rect x="502.5" y="317.1" width="1.9" height="1.3" transform="rotate(-36 502.5 317.1)"/><rect x="497.0" y="318.6" width="1.6" height="1.1" transform="rotate(-30 497.0 318.6)"/><rect x="396.7" y="388.4" width="3.8" height="1.6" transform="rotate(-33 396.7 388.4)"/><rect x="449.6" y="367.3" width="3.2" height="1.4" transform="rotate(-29 449.6 367.3)"/><rect x="507.4" y="320.9" width="3.8" height="1.3" transform="rotate(-35 507.4 320.9)"/><rect x="498.8" y="310.9" width="3.3" height="1.9" transform="rotate(-37 498.8 310.9)"/><rect x="529.2" y="327.5" width="2.4" height="2.0" transform="rotate(-40 529.2 327.5)"/><rect x="444.4" y="298.8" width="2.6" height="1.7" transform="rotate(-38 444.4 298.8)"/><rect x="509.5" y="335.9" width="2.6" height="1.2" transform="rotate(-37 509.5 335.9)"/><rect x="458.5" y="308.4" width="2.8" height="1.0" transform="rotate(-31 458.5 308.4)"/><rect x="419.8" y="341.1" width="3.9" height="1.4" transform="rotate(-31 419.8 341.1)"/><rect x="446.2" y="311.5" width="3.2" height="1.8" transform="rotate(-30 446.2 311.5)"/><rect x="449.4" y="333.3" width="2.6" height="1.1" transform="rotate(-34 449.4 333.3)"/><rect x="418.0" y="340.0" width="3.5" height="1.2" transform="rotate(-38 418.0 340.0)"/><rect x="450.7" y="357.2" width="3.6" height="1.3" transform="rotate(-34 450.7 357.2)"/><rect x="516.1" y="319.8" width="3.3" height="1.5" transform="rotate(-35 516.1 319.8)"/><rect x="504.0" y="338.1" width="1.6" height="1.3" transform="rotate(-31 504.0 338.1)"/><rect x="398.5" y="385.8" width="2.6" height="1.1" transform="rotate(-35 398.5 385.8)"/><rect x="463.1" y="358.5" width="2.6" height="1.3" transform="rotate(-34 463.1 358.5)"/><rect x="504.3" y="315.3" width="1.8" height="1.7" transform="rotate(-34 504.3 315.3)"/><rect x="456.1" y="307.9" width="4.0" height="2.0" transform="rotate(-40 456.1 307.9)"/><rect x="424.3" y="371.7" width="3.1" height="1.6" transform="rotate(-31 424.3 371.7)"/><rect x="474.7" y="314.9" width="3.9" height="1.1" transform="rotate(-34 474.7 314.9)"/><rect x="472.5" y="305.5" width="3.4" height="1.1" transform="rotate(-35 472.5 305.5)"/><rect x="442.8" y="338.7" width="2.0" height="1.5" transform="rotate(-41 442.8 338.7)"/><rect x="484.1" y="344.5" width="1.9" height="1.3" transform="rotate(-36 484.1 344.5)"/><rect x="481.5" y="310.6" width="2.6" height="1.8" transform="rotate(-40 481.5 310.6)"/><rect x="487.4" y="295.6" width="3.8" height="1.5" transform="rotate(-34 487.4 295.6)"/><rect x="486.0" y="344.1" width="3.3" height="1.3" transform="rotate(-30 486.0 344.1)"/><rect x="451.8" y="369.7" width="1.5" height="1.6" transform="rotate(-30 451.8 369.7)"/><rect x="515.7" y="292.6" width="3.1" height="1.8" transform="rotate(-38 515.7 292.6)"/><rect x="450.5" y="315.1" width="1.9" height="1.8" transform="rotate(-31 450.5 315.1)"/><rect x="506.2" y="285.6" width="3.7" height="2.0" transform="rotate(-29 506.2 285.6)"/><rect x="464.0" y="352.3" width="3.8" height="1.2" transform="rotate(-29 464.0 352.3)"/><rect x="430.1" y="311.0" width="2.1" height="1.7" transform="rotate(-32 430.1 311.0)"/><rect x="496.5" y="322.2" width="3.9" height="1.7" transform="rotate(-38 496.5 322.2)"/><rect x="509.3" y="330.6" width="2.5" height="1.2" transform="rotate(-35 509.3 330.6)"/><rect x="468.7" y="306.2" width="2.1" height="1.5" transform="rotate(-36 468.7 306.2)"/><rect x="416.4" y="316.7" width="2.9" height="1.2" transform="rotate(-35 416.4 316.7)"/><rect x="492.5" y="303.2" width="3.5" height="1.4" transform="rotate(-31 492.5 303.2)"/><rect x="524.4" y="321.0" width="3.5" height="1.2" transform="rotate(-39 524.4 321.0)"/><rect x="462.8" y="297.8" width="1.6" height="1.4" transform="rotate(-36 462.8 297.8)"/><rect x="470.5" y="356.8" width="3.0" height="1.6" transform="rotate(-36 470.5 356.8)"/><rect x="491.8" y="314.4" width="2.3" height="1.2" transform="rotate(-36 491.8 314.4)"/><rect x="407.0" y="332.1" width="2.6" height="1.4" transform="rotate(-29 407.0 332.1)"/><rect x="445.8" y="318.0" width="2.8" height="1.1" transform="rotate(-33 445.8 318.0)"/><rect x="538.7" y="277.8" width="3.5" height="1.4" transform="rotate(-40 538.7 277.8)"/><rect x="458.7" y="329.6" width="1.7" height="1.8" transform="rotate(-30 458.7 329.6)"/><rect x="457.5" y="367.7" width="2.5" height="1.8" transform="rotate(-39 457.5 367.7)"/><rect x="433.2" y="359.2" width="2.0" height="1.0" transform="rotate(-38 433.2 359.2)"/><rect x="480.9" y="307.9" width="2.4" height="1.4" transform="rotate(-40 480.9 307.9)"/><rect x="408.6" y="387.4" width="2.0" height="1.7" transform="rotate(-35 408.6 387.4)"/><rect x="418.8" y="338.1" width="2.1" height="1.8" transform="rotate(-40 418.8 338.1)"/><rect x="469.6" y="326.9" width="2.3" height="2.0" transform="rotate(-29 469.6 326.9)"/><rect x="462.7" y="330.3" width="1.8" height="1.4" transform="rotate(-39 462.7 330.3)"/><rect x="473.7" y="314.9" width="3.7" height="1.7" transform="rotate(-31 473.7 314.9)"/><rect x="495.7" y="296.1" width="2.7" height="1.3" transform="rotate(-36 495.7 296.1)"/><rect x="481.6" y="352.1" width="1.6" height="1.0" transform="rotate(-30 481.6 352.1)"/><rect x="460.4" y="326.2" width="2.7" height="1.4" transform="rotate(-36 460.4 326.2)"/><rect x="452.7" y="355.0" width="3.8" height="1.8" transform="rotate(-31 452.7 355.0)"/><rect x="433.1" y="350.3" width="1.8" height="1.3" transform="rotate(-37 433.1 350.3)"/><rect x="458.3" y="363.3" width="3.6" height="1.2" transform="rotate(-41 458.3 363.3)"/><rect x="533.5" y="277.5" width="2.6" height="1.3" transform="rotate(-39 533.5 277.5)"/><rect x="496.0" y="332.7" width="2.4" height="1.3" transform="rotate(-30 496.0 332.7)"/><rect x="518.5" y="284.9" width="2.1" height="1.5" transform="rotate(-34 518.5 284.9)"/><rect x="453.6" y="351.5" width="3.4" height="1.0" transform="rotate(-33 453.6 351.5)"/><rect x="460.7" y="346.0" width="1.8" height="1.0" transform="rotate(-35 460.7 346.0)"/><rect x="432.3" y="375.0" width="3.9" height="1.6" transform="rotate(-30 432.3 375.0)"/><rect x="425.1" y="310.8" width="2.3" height="1.4" transform="rotate(-41 425.1 310.8)"/><rect x="452.4" y="331.5" width="3.9" height="1.4" transform="rotate(-38 452.4 331.5)"/><rect x="430.8" y="370.3" width="2.2" height="1.9" transform="rotate(-33 430.8 370.3)"/><rect x="491.7" y="336.3" width="3.8" height="1.2" transform="rotate(-34 491.7 336.3)"/><rect x="467.7" y="302.0" width="2.9" height="1.2" transform="rotate(-33 467.7 302.0)"/><rect x="414.0" y="379.4" width="1.5" height="1.4" transform="rotate(-38 414.0 379.4)"/><rect x="528.8" y="277.8" width="2.4" height="1.8" transform="rotate(-34 528.8 277.8)"/><rect x="485.1" y="327.5" width="4.0" height="1.6" transform="rotate(-36 485.1 327.5)"/><rect x="480.2" y="314.6" width="2.4" height="1.3" transform="rotate(-36 480.2 314.6)"/><rect x="518.7" y="319.1" width="2.6" height="1.9" transform="rotate(-33 518.7 319.1)"/><rect x="443.6" y="312.8" width="1.7" height="1.8" transform="rotate(-39 443.6 312.8)"/><rect x="443.6" y="305.6" width="3.0" height="1.5" transform="rotate(-34 443.6 305.6)"/><rect x="489.6" y="333.8" width="2.0" height="1.9" transform="rotate(-34 489.6 333.8)"/><rect x="467.9" y="333.9" width="3.8" height="1.7" transform="rotate(-32 467.9 333.9)"/><rect x="494.8" y="340.3" width="2.7" height="1.6" transform="rotate(-30 494.8 340.3)"/><rect x="432.0" y="371.2" width="2.1" height="1.2" transform="rotate(-39 432.0 371.2)"/><rect x="516.3" y="294.4" width="3.1" height="1.5" transform="rotate(-33 516.3 294.4)"/><rect x="529.0" y="283.5" width="3.9" height="1.6" transform="rotate(-40 529.0 283.5)"/><rect x="455.2" y="356.0" width="3.9" height="1.8" transform="rotate(-33 455.2 356.0)"/><rect x="507.4" y="296.9" width="3.7" height="1.2" transform="rotate(-34 507.4 296.9)"/><rect x="495.5" y="334.8" width="2.3" height="1.7" transform="rotate(-34 495.5 334.8)"/><rect x="486.1" y="306.2" width="1.9" height="1.5" transform="rotate(-33 486.1 306.2)"/><rect x="411.6" y="370.5" width="3.0" height="1.0" transform="rotate(-40 411.6 370.5)"/><rect x="487.7" y="336.7" width="2.6" height="1.6" transform="rotate(-29 487.7 336.7)"/><rect x="412.3" y="342.3" width="2.9" height="1.2" transform="rotate(-33 412.3 342.3)"/><rect x="400.5" y="382.9" width="2.9" height="1.2" transform="rotate(-30 400.5 382.9)"/><rect x="475.4" y="337.2" width="2.9" height="1.6" transform="rotate(-36 475.4 337.2)"/><rect x="505.1" y="323.5" width="3.5" height="1.5" transform="rotate(-34 505.1 323.5)"/><rect x="491.9" y="297.5" width="3.2" height="1.8" transform="rotate(-37 491.9 297.5)"/><rect x="435.8" y="319.0" width="1.7" height="1.6" transform="rotate(-29 435.8 319.0)"/><rect x="453.5" y="317.2" width="2.9" height="1.8" transform="rotate(-34 453.5 317.2)"/><rect x="505.1" y="280.7" width="3.6" height="2.0" transform="rotate(-41 505.1 280.7)"/><rect x="454.5" y="310.4" width="3.5" height="1.3" transform="rotate(-31 454.5 310.4)"/><rect x="446.3" y="370.3" width="3.3" height="1.3" transform="rotate(-39 446.3 370.3)"/><rect x="482.9" y="341.9" width="2.9" height="1.2" transform="rotate(-35 482.9 341.9)"/><rect x="456.0" y="338.3" width="1.8" height="2.0" transform="rotate(-37 456.0 338.3)"/><rect x="498.3" y="314.8" width="2.1" height="1.1" transform="rotate(-36 498.3 314.8)"/><rect x="466.3" y="304.3" width="1.5" height="1.6" transform="rotate(-33 466.3 304.3)"/><rect x="445.5" y="322.4" width="2.8" height="1.4" transform="rotate(-35 445.5 322.4)"/><rect x="425.0" y="365.4" width="3.5" height="1.6" transform="rotate(-40 425.0 365.4)"/><rect x="439.1" y="316.9" width="3.2" height="1.9" transform="rotate(-32 439.1 316.9)"/><rect x="487.1" y="351.8" width="2.5" height="1.3" transform="rotate(-33 487.1 351.8)"/><rect x="492.3" y="337.2" width="1.7" height="1.4" transform="rotate(-40 492.3 337.2)"/><rect x="448.7" y="318.9" width="1.6" height="1.3" transform="rotate(-32 448.7 318.9)"/><rect x="461.8" y="320.6" width="3.4" height="1.2" transform="rotate(-39 461.8 320.6)"/><rect x="444.2" y="301.7" width="3.8" height="2.0" transform="rotate(-34 444.2 301.7)"/><rect x="488.0" y="343.9" width="1.6" height="1.5" transform="rotate(-37 488.0 343.9)"/><rect x="504.4" y="315.7" width="3.3" height="1.5" transform="rotate(-31 504.4 315.7)"/><rect x="509.1" y="320.8" width="2.2" height="1.9" transform="rotate(-37 509.1 320.8)"/><rect x="434.6" y="344.9" width="4.0" height="1.5" transform="rotate(-36 434.6 344.9)"/><rect x="471.0" y="294.8" width="2.8" height="1.6" transform="rotate(-30 471.0 294.8)"/><rect x="450.7" y="316.0" width="3.9" height="1.0" transform="rotate(-31 450.7 316.0)"/><rect x="475.4" y="340.7" width="2.3" height="1.8" transform="rotate(-30 475.4 340.7)"/><rect x="419.0" y="323.2" width="1.9" height="1.6" transform="rotate(-32 419.0 323.2)"/><rect x="521.1" y="307.6" width="3.1" height="1.6" transform="rotate(-38 521.1 307.6)"/><rect x="507.8" y="284.6" width="3.6" height="1.1" transform="rotate(-37 507.8 284.6)"/><rect x="503.4" y="286.3" width="2.9" height="1.8" transform="rotate(-33 503.4 286.3)"/><rect x="463.7" y="363.2" width="2.3" height="1.2" transform="rotate(-33 463.7 363.2)"/><rect x="498.1" y="313.3" width="3.2" height="1.7" transform="rotate(-33 498.1 313.3)"/><rect x="443.7" y="333.7" width="2.5" height="1.4" transform="rotate(-34 443.7 333.7)"/><rect x="466.5" y="300.1" width="2.7" height="1.2" transform="rotate(-33 466.5 300.1)"/><rect x="396.4" y="393.1" width="1.9" height="1.2" transform="rotate(-38 396.4 393.1)"/><rect x="438.3" y="348.5" width="1.8" height="1.8" transform="rotate(-34 438.3 348.5)"/><rect x="438.3" y="321.2" width="3.3" height="1.2" transform="rotate(-35 438.3 321.2)"/><rect x="521.4" y="312.5" width="2.8" height="1.6" transform="rotate(-39 521.4 312.5)"/><rect x="513.9" y="332.7" width="2.1" height="1.1" transform="rotate(-39 513.9 332.7)"/><rect x="453.0" y="337.4" width="2.2" height="1.8" transform="rotate(-30 453.0 337.4)"/><rect x="510.0" y="337.3" width="2.2" height="1.2" transform="rotate(-34 510.0 337.3)"/><rect x="436.8" y="339.9" width="3.3" height="1.4" transform="rotate(-34 436.8 339.9)"/><rect x="508.4" y="336.7" width="1.6" height="1.5" transform="rotate(-39 508.4 336.7)"/><rect x="463.0" y="339.2" width="3.4" height="1.4" transform="rotate(-33 463.0 339.2)"/><rect x="414.8" y="367.7" width="3.1" height="1.6" transform="rotate(-34 414.8 367.7)"/><rect x="464.8" y="300.4" width="2.9" height="1.8" transform="rotate(-34 464.8 300.4)"/><rect x="456.4" y="315.2" width="2.5" height="1.1" transform="rotate(-40 456.4 315.2)"/><rect x="440.6" y="363.8" width="2.6" height="1.5" transform="rotate(-41 440.6 363.8)"/><rect x="501.2" y="296.8" width="3.3" height="1.2" transform="rotate(-30 501.2 296.8)"/><rect x="523.7" y="314.4" width="1.8" height="1.7" transform="rotate(-36 523.7 314.4)"/><rect x="479.3" y="348.9" width="2.7" height="1.1" transform="rotate(-36 479.3 348.9)"/><rect x="414.6" y="357.2" width="2.9" height="1.9" transform="rotate(-37 414.6 357.2)"/><rect x="479.2" y="337.5" width="3.5" height="1.6" transform="rotate(-38 479.2 337.5)"/><rect x="445.7" y="347.9" width="2.2" height="1.2" transform="rotate(-29 445.7 347.9)"/><rect x="509.4" y="291.7" width="2.4" height="1.2" transform="rotate(-29 509.4 291.7)"/><rect x="481.3" y="338.7" width="1.8" height="1.7" transform="rotate(-39 481.3 338.7)"/><rect x="412.2" y="354.1" width="2.0" height="2.0" transform="rotate(-30 412.2 354.1)"/><rect x="432.5" y="337.5" width="2.5" height="1.3" transform="rotate(-39 432.5 337.5)"/><rect x="409.5" y="326.6" width="2.5" height="1.1" transform="rotate(-36 409.5 326.6)"/><rect x="431.8" y="312.0" width="3.3" height="1.7" transform="rotate(-31 431.8 312.0)"/><rect x="504.5" y="337.5" width="3.1" height="1.8" transform="rotate(-36 504.5 337.5)"/><rect x="425.9" y="336.8" width="3.8" height="1.6" transform="rotate(-38 425.9 336.8)"/><rect x="414.0" y="375.7" width="3.1" height="1.0" transform="rotate(-34 414.0 375.7)"/><rect x="482.1" y="349.8" width="3.7" height="1.7" transform="rotate(-35 482.1 349.8)"/><rect x="484.4" y="337.8" width="2.1" height="2.0" transform="rotate(-38 484.4 337.8)"/><rect x="466.5" y="316.1" width="2.4" height="1.9" transform="rotate(-37 466.5 316.1)"/><rect x="454.0" y="328.3" width="3.3" height="1.2" transform="rotate(-40 454.0 328.3)"/><rect x="496.4" y="308.0" width="2.9" height="1.0" transform="rotate(-39 496.4 308.0)"/><rect x="415.4" y="377.8" width="3.0" height="1.5" transform="rotate(-38 415.4 377.8)"/><rect x="410.3" y="325.5" width="3.0" height="1.9" transform="rotate(-41 410.3 325.5)"/><rect x="515.3" y="309.5" width="1.8" height="1.4" transform="rotate(-37 515.3 309.5)"/><rect x="479.8" y="290.3" width="3.9" height="2.0" transform="rotate(-33 479.8 290.3)"/><rect x="487.3" y="344.9" width="2.3" height="1.3" transform="rotate(-35 487.3 344.9)"/><rect x="475.2" y="323.0" width="3.5" height="2.0" transform="rotate(-40 475.2 323.0)"/><rect x="453.8" y="338.9" width="2.8" height="1.5" transform="rotate(-32 453.8 338.9)"/><rect x="475.6" y="288.9" width="4.0" height="1.7" transform="rotate(-31 475.6 288.9)"/><rect x="400.9" y="387.3" width="1.6" height="1.3" transform="rotate(-36 400.9 387.3)"/><rect x="515.4" y="326.1" width="1.8" height="1.5" transform="rotate(-40 515.4 326.1)"/><rect x="410.9" y="342.6" width="2.7" height="1.6" transform="rotate(-31 410.9 342.6)"/><rect x="509.4" y="288.9" width="1.7" height="1.3" transform="rotate(-41 509.4 288.9)"/><rect x="454.7" y="324.8" width="3.2" height="1.2" transform="rotate(-30 454.7 324.8)"/><rect x="515.5" y="336.3" width="3.1" height="1.2" transform="rotate(-39 515.5 336.3)"/><rect x="418.1" y="321.0" width="2.1" height="1.8" transform="rotate(-39 418.1 321.0)"/><rect x="436.5" y="368.8" width="3.8" height="1.8" transform="rotate(-32 436.5 368.8)"/><rect x="420.9" y="350.5" width="1.6" height="1.2" transform="rotate(-33 420.9 350.5)"/><rect x="454.3" y="364.8" width="3.8" height="1.1" transform="rotate(-37 454.3 364.8)"/><rect x="428.7" y="332.3" width="2.2" height="1.3" transform="rotate(-35 428.7 332.3)"/><rect x="464.7" y="300.4" width="3.3" height="1.1" transform="rotate(-29 464.7 300.4)"/><rect x="438.2" y="310.8" width="3.4" height="2.0" transform="rotate(-35 438.2 310.8)"/><rect x="449.3" y="327.8" width="3.6" height="1.4" transform="rotate(-36 449.3 327.8)"/><rect x="457.1" y="333.9" width="1.7" height="1.5" transform="rotate(-36 457.1 333.9)"/><rect x="416.1" y="348.8" width="1.6" height="1.1" transform="rotate(-29 416.1 348.8)"/><rect x="440.4" y="374.1" width="3.9" height="1.9" transform="rotate(-31 440.4 374.1)"/><rect x="399.0" y="381.5" width="2.1" height="2.0" transform="rotate(-41 399.0 381.5)"/><rect x="491.8" y="322.8" width="2.2" height="1.3" transform="rotate(-32 491.8 322.8)"/><rect x="427.0" y="321.6" width="3.9" height="2.0" transform="rotate(-31 427.0 321.6)"/><rect x="517.2" y="314.0" width="3.0" height="1.8" transform="rotate(-38 517.2 314.0)"/><rect x="497.6" y="286.5" width="3.2" height="2.0" transform="rotate(-30 497.6 286.5)"/><rect x="520.0" y="289.0" width="3.1" height="1.2" transform="rotate(-36 520.0 289.0)"/><rect x="501.1" y="282.2" width="3.2" height="1.5" transform="rotate(-31 501.1 282.2)"/><rect x="475.4" y="292.4" width="2.3" height="1.4" transform="rotate(-39 475.4 292.4)"/><rect x="525.1" y="294.0" width="1.8" height="1.9" transform="rotate(-39 525.1 294.0)"/><rect x="479.5" y="344.9" width="3.8" height="1.5" transform="rotate(-40 479.5 344.9)"/><rect x="453.5" y="309.4" width="2.8" height="1.5" transform="rotate(-29 453.5 309.4)"/><rect x="467.1" y="302.0" width="2.8" height="1.3" transform="rotate(-39 467.1 302.0)"/><rect x="432.4" y="321.1" width="3.8" height="1.3" transform="rotate(-33 432.4 321.1)"/><rect x="464.2" y="352.0" width="1.8" height="1.4" transform="rotate(-37 464.2 352.0)"/><rect x="536.6" y="283.0" width="3.5" height="1.7" transform="rotate(-32 536.6 283.0)"/><rect x="513.2" y="330.4" width="3.9" height="1.5" transform="rotate(-37 513.2 330.4)"/><rect x="463.5" y="358.1" width="1.7" height="1.1" transform="rotate(-32 463.5 358.1)"/><rect x="420.9" y="362.5" width="2.9" height="1.4" transform="rotate(-34 420.9 362.5)"/><rect x="495.2" y="283.9" width="3.2" height="1.8" transform="rotate(-40 495.2 283.9)"/><rect x="490.4" y="325.3" width="1.6" height="1.7" transform="rotate(-31 490.4 325.3)"/><rect x="445.2" y="352.6" width="3.4" height="1.0" transform="rotate(-35 445.2 352.6)"/><rect x="413.5" y="347.9" width="2.2" height="1.1" transform="rotate(-34 413.5 347.9)"/><rect x="413.5" y="345.0" width="2.7" height="1.8" transform="rotate(-38 413.5 345.0)"/><rect x="437.8" y="323.6" width="2.4" height="1.8" transform="rotate(-32 437.8 323.6)"/><rect x="501.2" y="341.9" width="3.6" height="1.0" transform="rotate(-34 501.2 341.9)"/><rect x="476.3" y="332.6" width="3.7" height="1.7" transform="rotate(-34 476.3 332.6)"/><rect x="463.9" y="328.1" width="2.4" height="1.4" transform="rotate(-33 463.9 328.1)"/><rect x="513.2" y="290.9" width="3.3" height="1.6" transform="rotate(-34 513.2 290.9)"/><rect x="393.5" y="401.1" width="2.1" height="1.9" transform="rotate(-29 393.5 401.1)"/><rect x="510.4" y="314.8" width="1.6" height="1.1" transform="rotate(-32 510.4 314.8)"/><rect x="504.1" y="300.9" width="3.7" height="1.6" transform="rotate(-33 504.1 300.9)"/><rect x="400.5" y="381.2" width="2.4" height="1.5" transform="rotate(-32 400.5 381.2)"/><rect x="451.1" y="360.8" width="3.7" height="1.9" transform="rotate(-41 451.1 360.8)"/><rect x="414.5" y="381.5" width="1.7" height="1.4" transform="rotate(-38 414.5 381.5)"/><rect x="526.3" y="325.3" width="1.7" height="1.2" transform="rotate(-41 526.3 325.3)"/><rect x="495.2" y="312.7" width="3.8" height="1.7" transform="rotate(-35 495.2 312.7)"/><rect x="428.6" y="312.3" width="1.6" height="2.0" transform="rotate(-36 428.6 312.3)"/><rect x="443.1" y="356.2" width="3.6" height="1.5" transform="rotate(-32 443.1 356.2)"/><rect x="524.5" y="291.3" width="2.4" height="1.4" transform="rotate(-33 524.5 291.3)"/><rect x="433.0" y="323.9" width="1.9" height="1.6" transform="rotate(-35 433.0 323.9)"/><rect x="436.5" y="345.6" width="3.0" height="1.4" transform="rotate(-29 436.5 345.6)"/><rect x="489.0" y="314.9" width="2.9" height="1.4" transform="rotate(-38 489.0 314.9)"/><rect x="440.0" y="317.5" width="3.5" height="1.7" transform="rotate(-40 440.0 317.5)"/><rect x="446.8" y="311.7" width="3.0" height="1.2" transform="rotate(-36 446.8 311.7)"/><rect x="502.5" y="314.5" width="3.0" height="1.0" transform="rotate(-31 502.5 314.5)"/><rect x="495.4" y="302.3" width="3.4" height="1.3" transform="rotate(-30 495.4 302.3)"/><rect x="416.9" y="368.8" width="1.6" height="1.8" transform="rotate(-40 416.9 368.8)"/><rect x="488.0" y="331.7" width="2.7" height="1.6" transform="rotate(-38 488.0 331.7)"/><rect x="492.9" y="320.1" width="1.6" height="2.0" transform="rotate(-30 492.9 320.1)"/><rect x="488.4" y="288.7" width="3.1" height="1.2" transform="rotate(-38 488.4 288.7)"/><rect x="442.9" y="308.7" width="1.9" height="1.3" transform="rotate(-33 442.9 308.7)"/><rect x="485.0" y="307.3" width="2.6" height="1.9" transform="rotate(-39 485.0 307.3)"/><rect x="521.4" y="288.4" width="3.1" height="1.4" transform="rotate(-31 521.4 288.4)"/><rect x="418.6" y="339.3" width="3.2" height="1.8" transform="rotate(-36 418.6 339.3)"/><rect x="489.8" y="326.5" width="1.5" height="1.5" transform="rotate(-31 489.8 326.5)"/><rect x="420.1" y="336.4" width="2.8" height="1.6" transform="rotate(-34 420.1 336.4)"/><rect x="461.9" y="308.7" width="3.3" height="1.2" transform="rotate(-38 461.9 308.7)"/><rect x="533.6" y="272.5" width="3.4" height="1.8" transform="rotate(-38 533.6 272.5)"/><rect x="477.6" y="295.5" width="1.7" height="1.5" transform="rotate(-39 477.6 295.5)"/><rect x="473.1" y="344.0" width="2.7" height="1.4" transform="rotate(-34 473.1 344.0)"/><rect x="521.4" y="332.5" width="3.4" height="1.8" transform="rotate(-33 521.4 332.5)"/><rect x="425.4" y="365.7" width="2.2" height="1.8" transform="rotate(-37 425.4 365.7)"/><rect x="465.5" y="332.6" width="3.0" height="1.1" transform="rotate(-40 465.5 332.6)"/><rect x="443.6" y="342.7" width="3.3" height="2.0" transform="rotate(-31 443.6 342.7)"/><rect x="503.2" y="332.6" width="2.1" height="1.9" transform="rotate(-38 503.2 332.6)"/><rect x="450.3" y="353.8" width="1.9" height="1.1" transform="rotate(-32 450.3 353.8)"/><rect x="454.0" y="363.5" width="3.4" height="2.0" transform="rotate(-37 454.0 363.5)"/><rect x="502.0" y="324.8" width="3.5" height="1.9" transform="rotate(-35 502.0 324.8)"/><rect x="474.2" y="307.0" width="1.7" height="1.1" transform="rotate(-38 474.2 307.0)"/><rect x="393.9" y="400.0" width="3.2" height="1.3" transform="rotate(-34 393.9 400.0)"/><rect x="407.4" y="391.1" width="3.4" height="1.9" transform="rotate(-40 407.4 391.1)"/><rect x="412.2" y="369.3" width="3.3" height="1.4" transform="rotate(-33 412.2 369.3)"/><rect x="458.4" y="348.1" width="3.8" height="1.6" transform="rotate(-38 458.4 348.1)"/><rect x="435.9" y="356.8" width="3.8" height="1.9" transform="rotate(-34 435.9 356.8)"/><rect x="440.0" y="362.5" width="3.7" height="1.4" transform="rotate(-30 440.0 362.5)"/><rect x="425.9" y="309.0" width="4.0" height="1.3" transform="rotate(-39 425.9 309.0)"/><rect x="529.4" y="290.1" width="3.4" height="1.2" transform="rotate(-34 529.4 290.1)"/><rect x="415.8" y="336.4" width="3.3" height="1.6" transform="rotate(-31 415.8 336.4)"/><rect x="434.3" y="338.3" width="3.1" height="1.9" transform="rotate(-33 434.3 338.3)"/><rect x="504.9" y="280.9" width="3.5" height="1.3" transform="rotate(-35 504.9 280.9)"/><rect x="467.8" y="343.6" width="2.3" height="1.0" transform="rotate(-41 467.8 343.6)"/><rect x="485.8" y="301.0" width="2.4" height="2.0" transform="rotate(-38 485.8 301.0)"/><rect x="528.2" y="322.0" width="3.3" height="1.5" transform="rotate(-40 528.2 322.0)"/><rect x="404.7" y="375.2" width="3.1" height="1.6" transform="rotate(-30 404.7 375.2)"/><rect x="520.3" y="317.5" width="3.9" height="1.5" transform="rotate(-34 520.3 317.5)"/><rect x="504.2" y="284.0" width="2.7" height="1.4" transform="rotate(-30 504.2 284.0)"/><rect x="506.1" y="303.7" width="3.6" height="1.2" transform="rotate(-37 506.1 303.7)"/><rect x="399.8" y="393.2" width="2.1" height="1.8" transform="rotate(-37 399.8 393.2)"/><rect x="455.9" y="307.2" width="2.9" height="1.4" transform="rotate(-36 455.9 307.2)"/><rect x="479.8" y="297.9" width="2.7" height="1.4" transform="rotate(-40 479.8 297.9)"/><rect x="437.4" y="349.6" width="1.5" height="1.2" transform="rotate(-30 437.4 349.6)"/><rect x="488.5" y="325.2" width="3.6" height="1.5" transform="rotate(-36 488.5 325.2)"/><rect x="452.3" y="330.9" width="2.6" height="1.4" transform="rotate(-33 452.3 330.9)"/><rect x="506.5" y="338.4" width="1.9" height="1.9" transform="rotate(-38 506.5 338.4)"/><rect x="502.9" y="310.1" width="3.3" height="1.6" transform="rotate(-40 502.9 310.1)"/><rect x="479.3" y="352.5" width="2.7" height="1.9" transform="rotate(-41 479.3 352.5)"/><rect x="521.8" y="311.3" width="2.3" height="1.2" transform="rotate(-34 521.8 311.3)"/><rect x="418.2" y="349.3" width="2.8" height="1.1" transform="rotate(-39 418.2 349.3)"/><rect x="494.0" y="334.9" width="3.1" height="1.6" transform="rotate(-31 494.0 334.9)"/><rect x="473.4" y="296.6" width="2.5" height="1.6" transform="rotate(-39 473.4 296.6)"/><rect x="436.5" y="373.6" width="3.7" height="1.8" transform="rotate(-39 436.5 373.6)"/><rect x="484.1" y="329.4" width="2.2" height="1.6" transform="rotate(-35 484.1 329.4)"/><rect x="464.2" y="329.5" width="3.4" height="1.9" transform="rotate(-32 464.2 329.5)"/><rect x="393.1" y="389.0" width="2.9" height="1.1" transform="rotate(-35 393.1 389.0)"/><rect x="462.8" y="301.7" width="3.3" height="1.5" transform="rotate(-31 462.8 301.7)"/><rect x="433.7" y="350.3" width="3.6" height="1.9" transform="rotate(-38 433.7 350.3)"/><rect x="430.3" y="373.3" width="1.8" height="1.8" transform="rotate(-39 430.3 373.3)"/><rect x="444.4" y="313.1" width="3.0" height="1.7" transform="rotate(-32 444.4 313.1)"/><rect x="458.8" y="357.6" width="2.3" height="1.8" transform="rotate(-41 458.8 357.6)"/><rect x="423.7" y="367.2" width="4.0" height="1.7" transform="rotate(-32 423.7 367.2)"/><rect x="512.6" y="298.7" width="2.5" height="1.3" transform="rotate(-31 512.6 298.7)"/><rect x="416.0" y="357.4" width="2.7" height="1.2" transform="rotate(-36 416.0 357.4)"/><rect x="458.7" y="364.0" width="3.9" height="2.0" transform="rotate(-37 458.7 364.0)"/><rect x="438.0" y="324.0" width="3.2" height="1.7" transform="rotate(-33 438.0 324.0)"/><rect x="462.1" y="358.2" width="1.7" height="1.5" transform="rotate(-40 462.1 358.2)"/><rect x="414.1" y="345.7" width="1.5" height="1.6" transform="rotate(-32 414.1 345.7)"/><rect x="426.5" y="339.6" width="1.7" height="1.9" transform="rotate(-36 426.5 339.6)"/><rect x="461.9" y="333.7" width="3.3" height="1.3" transform="rotate(-39 461.9 333.7)"/><rect x="420.1" y="318.9" width="2.6" height="1.7" transform="rotate(-36 420.1 318.9)"/><rect x="414.6" y="355.7" width="2.3" height="1.7" transform="rotate(-35 414.6 355.7)"/><rect x="417.0" y="374.4" width="3.7" height="1.5" transform="rotate(-34 417.0 374.4)"/><rect x="478.7" y="292.2" width="1.9" height="1.1" transform="rotate(-39 478.7 292.2)"/><rect x="448.6" y="343.1" width="1.5" height="1.6" transform="rotate(-31 448.6 343.1)"/><rect x="505.8" y="292.1" width="1.7" height="1.7" transform="rotate(-35 505.8 292.1)"/><rect x="527.6" y="285.9" width="3.8" height="2.0" transform="rotate(-41 527.6 285.9)"/><rect x="477.3" y="343.8" width="2.0" height="1.1" transform="rotate(-34 477.3 343.8)"/><rect x="416.1" y="334.6" width="1.5" height="1.8" transform="rotate(-30 416.1 334.6)"/><rect x="505.4" y="337.9" width="2.0" height="1.5" transform="rotate(-36 505.4 337.9)"/><rect x="458.5" y="328.6" width="1.6" height="1.3" transform="rotate(-33 458.5 328.6)"/><rect x="432.0" y="313.8" width="3.7" height="1.3" transform="rotate(-32 432.0 313.8)"/><rect x="408.5" y="337.5" width="3.0" height="1.5" transform="rotate(-36 408.5 337.5)"/><rect x="484.1" y="303.8" width="1.6" height="1.4" transform="rotate(-36 484.1 303.8)"/><rect x="495.6" y="317.3" width="2.9" height="1.7" transform="rotate(-32 495.6 317.3)"/><rect x="506.4" y="313.4" width="2.7" height="1.6" transform="rotate(-36 506.4 313.4)"/><rect x="536.2" y="273.6" width="2.8" height="1.6" transform="rotate(-39 536.2 273.6)"/><rect x="468.4" y="339.9" width="3.8" height="1.2" transform="rotate(-29 468.4 339.9)"/><rect x="442.4" y="364.5" width="3.0" height="1.1" transform="rotate(-38 442.4 364.5)"/><rect x="485.6" y="336.7" width="3.9" height="1.4" transform="rotate(-34 485.6 336.7)"/><rect x="531.1" y="283.3" width="1.6" height="1.9" transform="rotate(-39 531.1 283.3)"/><rect x="415.6" y="317.9" width="2.4" height="1.5" transform="rotate(-30 415.6 317.9)"/><rect x="520.3" y="293.0" width="2.0" height="1.6" transform="rotate(-41 520.3 293.0)"/><rect x="408.9" y="331.3" width="3.3" height="1.5" transform="rotate(-38 408.9 331.3)"/><rect x="452.4" y="319.3" width="2.1" height="1.5" transform="rotate(-30 452.4 319.3)"/><rect x="503.9" y="288.9" width="2.5" height="1.8" transform="rotate(-38 503.9 288.9)"/><rect x="497.4" y="286.6" width="3.2" height="1.3" transform="rotate(-33 497.4 286.6)"/><rect x="443.7" y="322.9" width="2.4" height="1.1" transform="rotate(-40 443.7 322.9)"/><rect x="418.0" y="347.8" width="2.4" height="1.6" transform="rotate(-34 418.0 347.8)"/><rect x="473.5" y="321.2" width="3.7" height="1.4" transform="rotate(-30 473.5 321.2)"/><rect x="441.4" y="358.5" width="2.7" height="1.6" transform="rotate(-33 441.4 358.5)"/><rect x="454.2" y="320.8" width="1.7" height="1.2" transform="rotate(-40 454.2 320.8)"/><rect x="528.3" y="295.5" width="3.0" height="1.7" transform="rotate(-39 528.3 295.5)"/><rect x="496.3" y="280.7" width="2.6" height="2.0" transform="rotate(-37 496.3 280.7)"/><rect x="476.6" y="291.4" width="2.2" height="1.6" transform="rotate(-34 476.6 291.4)"/><rect x="526.5" y="284.6" width="2.8" height="1.6" transform="rotate(-30 526.5 284.6)"/><rect x="422.1" y="327.9" width="3.1" height="1.2" transform="rotate(-29 422.1 327.9)"/><rect x="467.8" y="320.5" width="2.7" height="1.6" transform="rotate(-38 467.8 320.5)"/><rect x="485.9" y="333.8" width="3.5" height="1.9" transform="rotate(-39 485.9 333.8)"/><rect x="469.2" y="343.8" width="2.8" height="1.5" transform="rotate(-39 469.2 343.8)"/><rect x="471.3" y="347.7" width="4.0" height="1.3" transform="rotate(-30 471.3 347.7)"/><rect x="512.5" y="331.0" width="3.9" height="1.2" transform="rotate(-38 512.5 331.0)"/><rect x="448.7" y="362.5" width="3.6" height="1.2" transform="rotate(-40 448.7 362.5)"/><rect x="511.8" y="310.4" width="2.0" height="1.9" transform="rotate(-39 511.8 310.4)"/><rect x="502.1" y="312.7" width="1.6" height="1.2" transform="rotate(-39 502.1 312.7)"/><rect x="487.3" y="291.4" width="1.5" height="1.4" transform="rotate(-30 487.3 291.4)"/><rect x="448.2" y="304.6" width="2.0" height="1.6" transform="rotate(-31 448.2 304.6)"/><rect x="457.3" y="318.5" width="2.9" height="1.8" transform="rotate(-32 457.3 318.5)"/><rect x="437.0" y="315.9" width="1.5" height="1.5" transform="rotate(-29 437.0 315.9)"/><rect x="520.0" y="313.4" width="3.3" height="1.2" transform="rotate(-40 520.0 313.4)"/><rect x="451.9" y="319.7" width="3.2" height="1.1" transform="rotate(-31 451.9 319.7)"/><rect x="484.8" y="350.6" width="3.7" height="1.6" transform="rotate(-37 484.8 350.6)"/><rect x="441.5" y="356.7" width="2.4" height="1.2" transform="rotate(-29 441.5 356.7)"/><rect x="435.6" y="339.4" width="3.8" height="1.9" transform="rotate(-40 435.6 339.4)"/><rect x="414.5" y="324.8" width="2.9" height="1.2" transform="rotate(-37 414.5 324.8)"/><rect x="432.0" y="333.5" width="1.7" height="1.6" transform="rotate(-39 432.0 333.5)"/><rect x="435.5" y="316.1" width="3.8" height="1.7" transform="rotate(-39 435.5 316.1)"/><rect x="497.8" y="313.6" width="3.0" height="1.7" transform="rotate(-37 497.8 313.6)"/><rect x="407.9" y="331.7" width="3.5" height="1.0" transform="rotate(-36 407.9 331.7)"/><rect x="494.8" y="323.0" width="3.7" height="1.1" transform="rotate(-31 494.8 323.0)"/><rect x="452.9" y="315.8" width="1.7" height="1.2" transform="rotate(-33 452.9 315.8)"/><rect x="419.2" y="315.9" width="3.2" height="1.4" transform="rotate(-34 419.2 315.9)"/><rect x="395.4" y="398.7" width="2.0" height="1.4" transform="rotate(-32 395.4 398.7)"/><rect x="521.7" y="307.0" width="3.9" height="1.4" transform="rotate(-40 521.7 307.0)"/><rect x="421.7" y="311.5" width="3.6" height="1.6" transform="rotate(-29 421.7 311.5)"/><rect x="513.8" y="285.4" width="2.6" height="1.8" transform="rotate(-32 513.8 285.4)"/><rect x="540.5" y="265.9" width="2.1" height="1.3" transform="rotate(-40 540.5 265.9)"/><rect x="527.5" y="290.4" width="2.7" height="1.2" transform="rotate(-41 527.5 290.4)"/><rect x="458.5" y="325.2" width="3.1" height="1.4" transform="rotate(-36 458.5 325.2)"/><rect x="536.1" y="274.2" width="3.7" height="1.7" transform="rotate(-36 536.1 274.2)"/><rect x="400.7" y="380.3" width="3.4" height="1.4" transform="rotate(-36 400.7 380.3)"/><rect x="424.4" y="361.6" width="1.7" height="1.8" transform="rotate(-29 424.4 361.6)"/><rect x="434.0" y="339.6" width="3.4" height="1.1" transform="rotate(-34 434.0 339.6)"/><rect x="447.2" y="362.6" width="3.6" height="2.0" transform="rotate(-31 447.2 362.6)"/><rect x="389.5" y="394.7" width="2.4" height="1.0" transform="rotate(-35 389.5 394.7)"/><rect x="500.0" y="325.8" width="2.8" height="1.5" transform="rotate(-36 500.0 325.8)"/><rect x="504.1" y="297.5" width="1.7" height="1.9" transform="rotate(-32 504.1 297.5)"/><rect x="434.6" y="353.8" width="1.6" height="1.6" transform="rotate(-37 434.6 353.8)"/><rect x="418.5" y="322.0" width="2.1" height="1.3" transform="rotate(-41 418.5 322.0)"/><rect x="418.0" y="318.6" width="2.3" height="1.4" transform="rotate(-35 418.0 318.6)"/><rect x="532.2" y="321.6" width="3.5" height="1.2" transform="rotate(-37 532.2 321.6)"/><rect x="472.4" y="349.2" width="1.6" height="1.2" transform="rotate(-32 472.4 349.2)"/><rect x="440.2" y="299.5" width="2.8" height="1.6" transform="rotate(-41 440.2 299.5)"/><rect x="506.1" y="301.2" width="1.8" height="1.7" transform="rotate(-38 506.1 301.2)"/><rect x="462.1" y="337.2" width="3.0" height="1.2" transform="rotate(-32 462.1 337.2)"/><rect x="411.2" y="341.3" width="4.0" height="1.9" transform="rotate(-40 411.2 341.3)"/><rect x="518.2" y="301.5" width="3.7" height="1.9" transform="rotate(-39 518.2 301.5)"/><rect x="445.6" y="370.2" width="2.4" height="1.9" transform="rotate(-37 445.6 370.2)"/><rect x="503.0" y="284.3" width="3.2" height="1.0" transform="rotate(-39 503.0 284.3)"/><rect x="416.2" y="340.3" width="1.6" height="1.8" transform="rotate(-39 416.2 340.3)"/><rect x="446.2" y="315.1" width="3.4" height="1.6" transform="rotate(-39 446.2 315.1)"/><rect x="465.5" y="303.5" width="2.9" height="1.7" transform="rotate(-37 465.5 303.5)"/><rect x="530.1" y="289.0" width="3.4" height="1.9" transform="rotate(-36 530.1 289.0)"/><rect x="479.6" y="298.6" width="3.8" height="1.8" transform="rotate(-41 479.6 298.6)"/><rect x="531.0" y="278.9" width="2.4" height="1.7" transform="rotate(-33 531.0 278.9)"/><rect x="433.4" y="345.6" width="2.0" height="1.1" transform="rotate(-38 433.4 345.6)"/><rect x="458.8" y="330.9" width="3.9" height="1.1" transform="rotate(-30 458.8 330.9)"/><rect x="495.2" y="344.2" width="3.0" height="1.7" transform="rotate(-36 495.2 344.2)"/><rect x="503.3" y="314.3" width="2.7" height="1.0" transform="rotate(-37 503.3 314.3)"/><rect x="527.1" y="288.1" width="3.2" height="1.2" transform="rotate(-32 527.1 288.1)"/><rect x="475.2" y="305.8" width="2.7" height="1.7" transform="rotate(-33 475.2 305.8)"/><rect x="428.4" y="332.1" width="2.4" height="1.2" transform="rotate(-31 428.4 332.1)"/><rect x="438.9" y="305.2" width="2.9" height="1.6" transform="rotate(-38 438.9 305.2)"/><rect x="443.6" y="339.0" width="2.9" height="1.5" transform="rotate(-34 443.6 339.0)"/><rect x="515.1" y="334.5" width="2.1" height="1.9" transform="rotate(-30 515.1 334.5)"/><rect x="440.8" y="337.6" width="2.8" height="1.2" transform="rotate(-30 440.8 337.6)"/><rect x="477.9" y="290.9" width="1.6" height="1.6" transform="rotate(-39 477.9 290.9)"/><rect x="457.5" y="308.3" width="3.6" height="1.3" transform="rotate(-39 457.5 308.3)"/><rect x="421.0" y="320.6" width="2.7" height="1.5" transform="rotate(-40 421.0 320.6)"/><rect x="514.1" y="300.9" width="2.4" height="1.9" transform="rotate(-36 514.1 300.9)"/><rect x="485.8" y="330.5" width="2.7" height="1.5" transform="rotate(-33 485.8 330.5)"/><rect x="438.5" y="325.9" width="3.2" height="1.4" transform="rotate(-36 438.5 325.9)"/><rect x="412.9" y="348.6" width="3.7" height="1.9" transform="rotate(-36 412.9 348.6)"/><rect x="498.4" y="310.4" width="2.8" height="1.4" transform="rotate(-40 498.4 310.4)"/><rect x="482.4" y="312.7" width="1.5" height="1.2" transform="rotate(-32 482.4 312.7)"/><rect x="468.8" y="326.6" width="2.7" height="1.4" transform="rotate(-41 468.8 326.6)"/><rect x="486.0" y="300.2" width="2.4" height="1.2" transform="rotate(-37 486.0 300.2)"/><rect x="442.1" y="331.3" width="3.4" height="1.6" transform="rotate(-38 442.1 331.3)"/><rect x="461.6" y="338.9" width="2.0" height="1.2" transform="rotate(-34 461.6 338.9)"/><rect x="435.3" y="332.7" width="3.4" height="1.7" transform="rotate(-39 435.3 332.7)"/><rect x="523.5" y="293.4" width="3.1" height="1.2" transform="rotate(-32 523.5 293.4)"/><rect x="482.6" y="321.3" width="3.6" height="1.6" transform="rotate(-36 482.6 321.3)"/><rect x="470.7" y="354.9" width="1.9" height="1.2" transform="rotate(-40 470.7 354.9)"/><rect x="447.5" y="316.9" width="3.8" height="2.0" transform="rotate(-30 447.5 316.9)"/><rect x="474.4" y="299.4" width="2.5" height="1.0" transform="rotate(-35 474.4 299.4)"/><rect x="538.7" y="273.3" width="3.4" height="1.9" transform="rotate(-31 538.7 273.3)"/><rect x="417.9" y="348.8" width="1.5" height="1.7" transform="rotate(-38 417.9 348.8)"/><rect x="498.8" y="290.6" width="2.7" height="1.3" transform="rotate(-39 498.8 290.6)"/><rect x="502.7" y="300.7" width="2.5" height="2.0" transform="rotate(-31 502.7 300.7)"/><rect x="471.0" y="322.7" width="1.5" height="1.1" transform="rotate(-39 471.0 322.7)"/><rect x="489.2" y="348.3" width="1.9" height="1.0" transform="rotate(-33 489.2 348.3)"/><rect x="485.6" y="337.7" width="1.9" height="1.6" transform="rotate(-35 485.6 337.7)"/><rect x="423.3" y="346.7" width="1.9" height="1.9" transform="rotate(-36 423.3 346.7)"/><rect x="452.7" y="323.4" width="1.7" height="1.7" transform="rotate(-39 452.7 323.4)"/><rect x="518.0" y="322.6" width="2.0" height="1.4" transform="rotate(-40 518.0 322.6)"/><rect x="424.2" y="331.5" width="1.7" height="1.8" transform="rotate(-32 424.2 331.5)"/><rect x="413.2" y="330.8" width="2.6" height="1.0" transform="rotate(-30 413.2 330.8)"/><rect x="446.1" y="360.0" width="3.2" height="1.6" transform="rotate(-36 446.1 360.0)"/><rect x="483.8" y="289.4" width="1.6" height="1.3" transform="rotate(-32 483.8 289.4)"/><rect x="483.6" y="336.3" width="3.9" height="1.0" transform="rotate(-33 483.6 336.3)"/><rect x="521.5" y="295.5" width="2.0" height="1.0" transform="rotate(-38 521.5 295.5)"/><rect x="419.3" y="342.0" width="3.9" height="1.7" transform="rotate(-38 419.3 342.0)"/><rect x="510.6" y="335.4" width="2.5" height="1.6" transform="rotate(-34 510.6 335.4)"/><rect x="415.0" y="351.0" width="3.1" height="1.8" transform="rotate(-29 415.0 351.0)"/><rect x="531.8" y="325.5" width="1.9" height="1.9" transform="rotate(-30 531.8 325.5)"/><rect x="536.0" y="325.0" width="2.2" height="1.5" transform="rotate(-31 536.0 325.0)"/><rect x="473.9" y="347.8" width="2.1" height="1.8" transform="rotate(-36 473.9 347.8)"/><rect x="498.4" y="323.4" width="3.3" height="1.4" transform="rotate(-39 498.4 323.4)"/><rect x="434.7" y="355.4" width="3.5" height="1.1" transform="rotate(-34 434.7 355.4)"/><rect x="439.7" y="364.3" width="3.6" height="1.2" transform="rotate(-36 439.7 364.3)"/><rect x="441.8" y="370.4" width="2.2" height="2.0" transform="rotate(-29 441.8 370.4)"/><rect x="440.6" y="311.7" width="3.2" height="1.2" transform="rotate(-34 440.6 311.7)"/><rect x="468.5" y="298.7" width="2.1" height="1.6" transform="rotate(-39 468.5 298.7)"/><rect x="525.5" y="292.8" width="2.4" height="1.4" transform="rotate(-34 525.5 292.8)"/><rect x="457.5" y="342.3" width="2.5" height="1.4" transform="rotate(-30 457.5 342.3)"/><rect x="509.9" y="329.4" width="2.6" height="1.2" transform="rotate(-31 509.9 329.4)"/><rect x="443.9" y="366.6" width="2.5" height="1.5" transform="rotate(-41 443.9 366.6)"/><rect x="522.0" y="286.2" width="2.3" height="1.2" transform="rotate(-41 522.0 286.2)"/><rect x="388.0" y="400.6" width="3.2" height="1.4" transform="rotate(-34 388.0 400.6)"/><rect x="434.3" y="307.1" width="1.8" height="1.8" transform="rotate(-30 434.3 307.1)"/><rect x="507.8" y="340.1" width="3.0" height="1.9" transform="rotate(-37 507.8 340.1)"/><rect x="487.0" y="286.5" width="4.0" height="1.0" transform="rotate(-31 487.0 286.5)"/><rect x="469.7" y="325.5" width="2.2" height="1.3" transform="rotate(-40 469.7 325.5)"/><rect x="451.2" y="351.4" width="2.6" height="1.0" transform="rotate(-34 451.2 351.4)"/><rect x="430.9" y="322.8" width="2.4" height="1.4" transform="rotate(-36 430.9 322.8)"/><rect x="431.5" y="302.9" width="1.7" height="1.7" transform="rotate(-40 431.5 302.9)"/><rect x="413.2" y="381.8" width="3.9" height="1.5" transform="rotate(-41 413.2 381.8)"/><rect x="474.8" y="334.8" width="1.7" height="1.5" transform="rotate(-38 474.8 334.8)"/><rect x="481.7" y="298.4" width="1.6" height="1.3" transform="rotate(-35 481.7 298.4)"/><rect x="458.4" y="312.6" width="2.4" height="1.2" transform="rotate(-31 458.4 312.6)"/><rect x="408.4" y="389.3" width="3.7" height="1.9" transform="rotate(-36 408.4 389.3)"/><rect x="426.3" y="357.0" width="3.2" height="1.1" transform="rotate(-38 426.3 357.0)"/><rect x="502.1" y="328.3" width="1.8" height="1.6" transform="rotate(-35 502.1 328.3)"/><rect x="440.5" y="301.6" width="3.4" height="1.2" transform="rotate(-37 440.5 301.6)"/><rect x="512.2" y="292.2" width="1.6" height="1.3" transform="rotate(-37 512.2 292.2)"/><rect x="481.3" y="315.2" width="2.0" height="1.7" transform="rotate(-37 481.3 315.2)"/><rect x="494.9" y="330.8" width="2.2" height="1.9" transform="rotate(-38 494.9 330.8)"/><rect x="455.0" y="353.3" width="3.4" height="1.2" transform="rotate(-36 455.0 353.3)"/><rect x="506.9" y="293.5" width="1.7" height="1.0" transform="rotate(-33 506.9 293.5)"/><rect x="431.5" y="368.1" width="2.1" height="1.7" transform="rotate(-34 431.5 368.1)"/><rect x="514.8" y="300.9" width="1.6" height="1.8" transform="rotate(-38 514.8 300.9)"/><rect x="492.8" y="309.5" width="2.6" height="2.0" transform="rotate(-32 492.8 309.5)"/><rect x="530.9" y="324.1" width="1.5" height="1.4" transform="rotate(-41 530.9 324.1)"/><rect x="414.1" y="374.9" width="3.4" height="1.5" transform="rotate(-35 414.1 374.9)"/><rect x="411.1" y="344.4" width="3.2" height="1.3" transform="rotate(-31 411.1 344.4)"/><rect x="473.1" y="348.9" width="1.9" height="1.4" transform="rotate(-31 473.1 348.9)"/><rect x="509.0" y="325.9" width="2.4" height="1.5" transform="rotate(-33 509.0 325.9)"/><rect x="535.7" y="273.3" width="2.9" height="1.4" transform="rotate(-39 535.7 273.3)"/><rect x="461.8" y="319.8" width="2.4" height="1.1" transform="rotate(-37 461.8 319.8)"/><rect x="486.7" y="302.8" width="2.8" height="1.4" transform="rotate(-30 486.7 302.8)"/><rect x="478.9" y="316.1" width="3.0" height="1.3" transform="rotate(-36 478.9 316.1)"/><rect x="403.6" y="383.6" width="3.5" height="1.1" transform="rotate(-40 403.6 383.6)"/><rect x="423.0" y="335.5" width="2.1" height="2.0" transform="rotate(-36 423.0 335.5)"/><rect x="416.7" y="358.6" width="3.7" height="1.3" transform="rotate(-38 416.7 358.6)"/><rect x="453.6" y="352.7" width="1.8" height="1.5" transform="rotate(-35 453.6 352.7)"/><rect x="528.2" y="286.4" width="2.9" height="1.9" transform="rotate(-38 528.2 286.4)"/><rect x="493.4" y="293.7" width="3.9" height="1.6" transform="rotate(-30 493.4 293.7)"/><rect x="429.3" y="359.5" width="2.5" height="1.5" transform="rotate(-35 429.3 359.5)"/><rect x="417.6" y="313.1" width="3.6" height="1.6" transform="rotate(-29 417.6 313.1)"/><rect x="478.7" y="291.5" width="2.7" height="1.1" transform="rotate(-30 478.7 291.5)"/><rect x="519.7" y="291.2" width="3.1" height="1.8" transform="rotate(-39 519.7 291.2)"/><rect x="510.4" y="326.1" width="3.6" height="1.6" transform="rotate(-36 510.4 326.1)"/><rect x="415.9" y="316.4" width="1.7" height="1.4" transform="rotate(-33 415.9 316.4)"/><rect x="436.4" y="328.4" width="2.1" height="1.5" transform="rotate(-30 436.4 328.4)"/><rect x="398.9" y="382.4" width="3.8" height="1.9" transform="rotate(-32 398.9 382.4)"/><rect x="504.7" y="319.4" width="2.2" height="1.9" transform="rotate(-38 504.7 319.4)"/><rect x="474.6" y="300.7" width="2.4" height="1.0" transform="rotate(-33 474.6 300.7)"/><rect x="497.9" y="339.4" width="1.7" height="1.1" transform="rotate(-36 497.9 339.4)"/><rect x="533.0" y="269.3" width="3.8" height="1.3" transform="rotate(-36 533.0 269.3)"/><rect x="496.0" y="333.0" width="3.1" height="1.8" transform="rotate(-36 496.0 333.0)"/><rect x="512.5" y="315.7" width="3.7" height="1.1" transform="rotate(-36 512.5 315.7)"/><rect x="520.9" y="315.1" width="3.0" height="1.7" transform="rotate(-34 520.9 315.1)"/><rect x="410.5" y="350.1" width="3.2" height="1.2" transform="rotate(-40 410.5 350.1)"/><rect x="442.8" y="364.7" width="3.0" height="1.6" transform="rotate(-29 442.8 364.7)"/><rect x="450.6" y="327.5" width="3.5" height="1.7" transform="rotate(-30 450.6 327.5)"/><rect x="503.1" y="286.5" width="3.6" height="1.9" transform="rotate(-32 503.1 286.5)"/><rect x="466.4" y="354.8" width="3.4" height="1.8" transform="rotate(-36 466.4 354.8)"/><rect x="538.7" y="272.9" width="2.4" height="1.4" transform="rotate(-34 538.7 272.9)"/><rect x="470.9" y="322.7" width="3.5" height="1.4" transform="rotate(-40 470.9 322.7)"/><rect x="487.9" y="321.2" width="1.6" height="1.6" transform="rotate(-35 487.9 321.2)"/><rect x="530.9" y="322.1" width="3.3" height="1.7" transform="rotate(-39 530.9 322.1)"/><rect x="527.1" y="296.8" width="3.0" height="1.7" transform="rotate(-30 527.1 296.8)"/><rect x="454.6" y="356.8" width="2.0" height="1.2" transform="rotate(-40 454.6 356.8)"/><rect x="485.0" y="304.6" width="3.9" height="1.1" transform="rotate(-38 485.0 304.6)"/><rect x="490.8" y="334.8" width="1.7" height="1.9" transform="rotate(-32 490.8 334.8)"/><rect x="456.9" y="307.1" width="2.1" height="1.6" transform="rotate(-38 456.9 307.1)"/><rect x="521.3" y="285.2" width="3.5" height="1.9" transform="rotate(-38 521.3 285.2)"/><rect x="459.0" y="355.6" width="3.8" height="1.7" transform="rotate(-41 459.0 355.6)"/><rect x="503.1" y="305.9" width="2.7" height="1.5" transform="rotate(-35 503.1 305.9)"/><rect x="394.3" y="393.2" width="3.9" height="1.1" transform="rotate(-40 394.3 393.2)"/><rect x="509.6" y="295.8" width="2.1" height="1.7" transform="rotate(-37 509.6 295.8)"/><rect x="463.7" y="308.4" width="3.5" height="1.4" transform="rotate(-38 463.7 308.4)"/><rect x="448.0" y="340.3" width="1.7" height="1.2" transform="rotate(-37 448.0 340.3)"/><rect x="462.2" y="331.2" width="3.1" height="1.4" transform="rotate(-37 462.2 331.2)"/><rect x="502.7" y="295.3" width="2.8" height="1.2" transform="rotate(-31 502.7 295.3)"/><rect x="458.5" y="342.1" width="3.8" height="1.0" transform="rotate(-33 458.5 342.1)"/><rect x="415.9" y="356.6" width="1.9" height="1.4" transform="rotate(-32 415.9 356.6)"/><rect x="525.5" y="329.8" width="2.9" height="1.6" transform="rotate(-32 525.5 329.8)"/><rect x="440.5" y="346.0" width="3.1" height="1.3" transform="rotate(-33 440.5 346.0)"/><rect x="439.8" y="299.9" width="2.5" height="2.0" transform="rotate(-35 439.8 299.9)"/><rect x="465.5" y="322.9" width="2.3" height="1.7" transform="rotate(-30 465.5 322.9)"/><rect x="511.4" y="312.6" width="3.8" height="1.2" transform="rotate(-40 511.4 312.6)"/><rect x="441.8" y="342.9" width="1.7" height="1.6" transform="rotate(-39 441.8 342.9)"/><rect x="514.2" y="318.8" width="2.0" height="1.8" transform="rotate(-39 514.2 318.8)"/><rect x="439.6" y="314.4" width="1.9" height="1.5" transform="rotate(-39 439.6 314.4)"/><rect x="458.5" y="345.4" width="2.1" height="1.8" transform="rotate(-30 458.5 345.4)"/><rect x="406.3" y="391.7" width="2.9" height="1.8" transform="rotate(-33 406.3 391.7)"/><rect x="455.8" y="348.7" width="3.4" height="1.1" transform="rotate(-32 455.8 348.7)"/><rect x="456.2" y="362.3" width="2.6" height="1.2" transform="rotate(-40 456.2 362.3)"/><rect x="441.1" y="353.5" width="3.4" height="1.3" transform="rotate(-29 441.1 353.5)"/><rect x="520.3" y="301.6" width="2.2" height="1.9" transform="rotate(-35 520.3 301.6)"/><rect x="428.1" y="316.5" width="2.0" height="2.0" transform="rotate(-32 428.1 316.5)"/><rect x="418.9" y="364.1" width="2.9" height="1.1" transform="rotate(-33 418.9 364.1)"/><rect x="442.9" y="311.2" width="3.4" height="1.0" transform="rotate(-36 442.9 311.2)"/><rect x="500.9" y="300.3" width="3.9" height="1.4" transform="rotate(-41 500.9 300.3)"/><rect x="474.0" y="320.7" width="2.3" height="1.8" transform="rotate(-36 474.0 320.7)"/><rect x="425.9" y="348.9" width="2.9" height="1.5" transform="rotate(-30 425.9 348.9)"/><rect x="500.8" y="335.9" width="2.4" height="1.7" transform="rotate(-40 500.8 335.9)"/><rect x="484.0" y="344.9" width="1.5" height="1.4" transform="rotate(-39 484.0 344.9)"/><rect x="452.3" y="370.3" width="1.5" height="1.4" transform="rotate(-40 452.3 370.3)"/><rect x="514.9" y="334.1" width="2.2" height="1.2" transform="rotate(-38 514.9 334.1)"/><rect x="456.3" y="350.7" width="3.5" height="1.8" transform="rotate(-35 456.3 350.7)"/><rect x="408.4" y="384.1" width="1.7" height="1.3" transform="rotate(-40 408.4 384.1)"/><rect x="510.1" y="300.1" width="3.5" height="1.4" transform="rotate(-36 510.1 300.1)"/><rect x="515.0" y="322.7" width="3.1" height="1.4" transform="rotate(-33 515.0 322.7)"/><rect x="437.3" y="351.8" width="2.5" height="1.6" transform="rotate(-40 437.3 351.8)"/><rect x="467.6" y="315.9" width="3.4" height="1.7" transform="rotate(-29 467.6 315.9)"/><rect x="426.6" y="347.0" width="3.5" height="2.0" transform="rotate(-35 426.6 347.0)"/><rect x="479.2" y="320.2" width="3.3" height="1.9" transform="rotate(-38 479.2 320.2)"/><rect x="410.5" y="331.5" width="1.7" height="1.9" transform="rotate(-38 410.5 331.5)"/><rect x="454.6" y="355.2" width="2.8" height="1.2" transform="rotate(-35 454.6 355.2)"/><rect x="473.7" y="326.2" width="3.4" height="1.4" transform="rotate(-37 473.7 326.2)"/><rect x="414.1" y="343.1" width="1.8" height="1.7" transform="rotate(-34 414.1 343.1)"/><rect x="508.2" y="313.5" width="2.2" height="1.3" transform="rotate(-38 508.2 313.5)"/><rect x="415.7" y="356.2" width="2.4" height="1.8" transform="rotate(-33 415.7 356.2)"/><rect x="459.2" y="325.7" width="3.6" height="1.5" transform="rotate(-33 459.2 325.7)"/><rect x="432.4" y="357.8" width="3.9" height="1.7" transform="rotate(-30 432.4 357.8)"/><rect x="442.9" y="351.8" width="2.8" height="1.9" transform="rotate(-35 442.9 351.8)"/><rect x="445.4" y="366.7" width="2.2" height="1.3" transform="rotate(-33 445.4 366.7)"/><rect x="447.0" y="323.1" width="2.6" height="1.9" transform="rotate(-36 447.0 323.1)"/><rect x="514.0" y="296.0" width="3.9" height="1.3" transform="rotate(-40 514.0 296.0)"/><rect x="407.1" y="387.2" width="1.5" height="1.2" transform="rotate(-32 407.1 387.2)"/><rect x="428.6" y="351.4" width="3.4" height="1.9" transform="rotate(-34 428.6 351.4)"/><rect x="414.8" y="325.9" width="2.9" height="1.8" transform="rotate(-33 414.8 325.9)"/><rect x="444.4" y="339.1" width="1.7" height="1.6" transform="rotate(-40 444.4 339.1)"/><rect x="449.1" y="358.6" width="2.1" height="1.2" transform="rotate(-36 449.1 358.6)"/><rect x="451.9" y="303.8" width="1.6" height="1.1" transform="rotate(-31 451.9 303.8)"/><rect x="519.8" y="304.2" width="3.2" height="1.8" transform="rotate(-37 519.8 304.2)"/><rect x="516.7" y="312.5" width="2.8" height="1.7" transform="rotate(-31 516.7 312.5)"/><rect x="417.5" y="375.8" width="2.8" height="1.1" transform="rotate(-36 417.5 375.8)"/><rect x="481.9" y="339.8" width="3.2" height="1.2" transform="rotate(-30 481.9 339.8)"/><rect x="475.5" y="298.4" width="3.9" height="1.3" transform="rotate(-33 475.5 298.4)"/><rect x="443.8" y="310.6" width="1.5" height="1.3" transform="rotate(-34 443.8 310.6)"/><rect x="456.1" y="318.0" width="3.4" height="1.2" transform="rotate(-36 456.1 318.0)"/><rect x="513.7" y="311.4" width="3.1" height="1.1" transform="rotate(-40 513.7 311.4)"/><rect x="444.9" y="314.4" width="2.9" height="1.2" transform="rotate(-40 444.9 314.4)"/><rect x="456.6" y="305.0" width="3.3" height="2.0" transform="rotate(-36 456.6 305.0)"/><rect x="469.8" y="317.8" width="1.8" height="1.2" transform="rotate(-41 469.8 317.8)"/><rect x="496.2" y="333.1" width="2.0" height="2.0" transform="rotate(-38 496.2 333.1)"/><rect x="444.0" y="373.6" width="2.2" height="1.2" transform="rotate(-29 444.0 373.6)"/><rect x="454.4" y="363.8" width="3.9" height="1.0" transform="rotate(-39 454.4 363.8)"/><rect x="460.4" y="329.8" width="3.1" height="1.6" transform="rotate(-34 460.4 329.8)"/><rect x="490.1" y="349.3" width="3.9" height="1.5" transform="rotate(-39 490.1 349.3)"/><rect x="447.1" y="344.7" width="2.2" height="1.6" transform="rotate(-33 447.1 344.7)"/><rect x="412.0" y="331.8" width="3.4" height="1.2" transform="rotate(-32 412.0 331.8)"/><rect x="448.6" y="336.9" width="3.1" height="1.2" transform="rotate(-37 448.6 336.9)"/><rect x="503.8" y="336.9" width="1.6" height="1.9" transform="rotate(-33 503.8 336.9)"/><rect x="487.2" y="342.7" width="1.5" height="1.5" transform="rotate(-36 487.2 342.7)"/><rect x="500.0" y="344.2" width="3.5" height="1.1" transform="rotate(-40 500.0 344.2)"/><rect x="407.3" y="378.2" width="3.8" height="1.3" transform="rotate(-34 407.3 378.2)"/><rect x="474.6" y="288.8" width="3.8" height="1.3" transform="rotate(-37 474.6 288.8)"/><rect x="465.3" y="299.6" width="2.9" height="1.7" transform="rotate(-31 465.3 299.6)"/><rect x="432.5" y="325.8" width="1.5" height="1.8" transform="rotate(-32 432.5 325.8)"/><rect x="471.4" y="290.4" width="2.2" height="1.2" transform="rotate(-39 471.4 290.4)"/><rect x="473.6" y="305.3" width="1.7" height="1.9" transform="rotate(-35 473.6 305.3)"/><rect x="436.0" y="342.5" width="3.6" height="1.9" transform="rotate(-37 436.0 342.5)"/><rect x="505.5" y="293.3" width="2.5" height="1.3" transform="rotate(-40 505.5 293.3)"/><rect x="419.8" y="366.3" width="1.7" height="1.3" transform="rotate(-34 419.8 366.3)"/><rect x="413.2" y="358.3" width="2.3" height="1.4" transform="rotate(-34 413.2 358.3)"/><rect x="469.4" y="324.5" width="2.3" height="1.4" transform="rotate(-30 469.4 324.5)"/><rect x="491.5" y="296.1" width="3.0" height="1.9" transform="rotate(-39 491.5 296.1)"/><rect x="535.1" y="285.4" width="2.1" height="1.9" transform="rotate(-30 535.1 285.4)"/><rect x="483.3" y="304.0" width="2.3" height="1.8" transform="rotate(-37 483.3 304.0)"/><rect x="481.2" y="331.9" width="3.8" height="1.9" transform="rotate(-32 481.2 331.9)"/><rect x="475.0" y="353.7" width="3.3" height="1.9" transform="rotate(-41 475.0 353.7)"/><rect x="513.8" y="291.2" width="3.1" height="1.2" transform="rotate(-36 513.8 291.2)"/><rect x="445.8" y="309.9" width="3.1" height="1.1" transform="rotate(-30 445.8 309.9)"/><rect x="456.4" y="302.2" width="2.5" height="1.4" transform="rotate(-29 456.4 302.2)"/><rect x="446.4" y="327.2" width="2.3" height="1.5" transform="rotate(-35 446.4 327.2)"/><rect x="539.4" y="278.0" width="3.8" height="1.8" transform="rotate(-37 539.4 278.0)"/><rect x="522.6" y="282.5" width="3.8" height="1.7" transform="rotate(-32 522.6 282.5)"/><rect x="448.6" y="348.2" width="3.9" height="1.9" transform="rotate(-34 448.6 348.2)"/><rect x="503.0" y="330.2" width="2.4" height="1.7" transform="rotate(-37 503.0 330.2)"/><rect x="482.8" y="326.2" width="2.4" height="1.6" transform="rotate(-40 482.8 326.2)"/><rect x="508.3" y="321.8" width="1.8" height="1.5" transform="rotate(-37 508.3 321.8)"/><rect x="532.0" y="276.2" width="4.0" height="2.0" transform="rotate(-32 532.0 276.2)"/><rect x="469.4" y="320.0" width="2.3" height="1.6" transform="rotate(-39 469.4 320.0)"/><rect x="411.7" y="353.9" width="1.6" height="1.5" transform="rotate(-36 411.7 353.9)"/><rect x="414.4" y="378.4" width="1.6" height="2.0" transform="rotate(-31 414.4 378.4)"/><rect x="508.2" y="315.6" width="2.1" height="1.1" transform="rotate(-38 508.2 315.6)"/><rect x="478.5" y="340.8" width="1.9" height="1.5" transform="rotate(-36 478.5 340.8)"/><rect x="515.8" y="315.5" width="1.8" height="1.7" transform="rotate(-30 515.8 315.5)"/><rect x="485.1" y="306.6" width="2.6" height="2.0" transform="rotate(-35 485.1 306.6)"/><rect x="487.4" y="326.7" width="2.1" height="1.7" transform="rotate(-30 487.4 326.7)"/><rect x="430.4" y="315.1" width="2.1" height="1.5" transform="rotate(-32 430.4 315.1)"/><rect x="473.4" y="337.1" width="1.8" height="1.0" transform="rotate(-40 473.4 337.1)"/><rect x="502.2" y="319.0" width="3.5" height="1.1" transform="rotate(-40 502.2 319.0)"/><rect x="442.1" y="368.2" width="1.6" height="1.0" transform="rotate(-29 442.1 368.2)"/><rect x="406.6" y="373.2" width="3.6" height="1.2" transform="rotate(-31 406.6 373.2)"/><rect x="392.3" y="401.1" width="2.4" height="1.3" transform="rotate(-38 392.3 401.1)"/><rect x="418.3" y="350.0" width="1.5" height="1.9" transform="rotate(-33 418.3 350.0)"/><rect x="408.3" y="339.5" width="1.7" height="1.3" transform="rotate(-34 408.3 339.5)"/><rect x="515.2" y="320.2" width="2.3" height="1.5" transform="rotate(-32 515.2 320.2)"/><rect x="419.0" y="352.3" width="2.8" height="1.6" transform="rotate(-35 419.0 352.3)"/><rect x="482.2" y="322.2" width="2.6" height="1.8" transform="rotate(-37 482.2 322.2)"/><rect x="466.3" y="328.5" width="3.0" height="1.3" transform="rotate(-32 466.3 328.5)"/><rect x="414.7" y="365.9" width="3.7" height="1.1" transform="rotate(-39 414.7 365.9)"/><rect x="404.4" y="392.7" width="1.8" height="1.7" transform="rotate(-35 404.4 392.7)"/><rect x="420.0" y="374.0" width="2.6" height="1.5" transform="rotate(-31 420.0 374.0)"/><rect x="494.5" y="328.5" width="2.9" height="1.7" transform="rotate(-38 494.5 328.5)"/><rect x="442.8" y="302.5" width="1.6" height="1.6" transform="rotate(-29 442.8 302.5)"/><rect x="411.5" y="368.9" width="2.9" height="1.7" transform="rotate(-33 411.5 368.9)"/><rect x="431.6" y="318.9" width="2.5" height="1.4" transform="rotate(-39 431.6 318.9)"/><rect x="458.4" y="357.1" width="2.9" height="1.2" transform="rotate(-32 458.4 357.1)"/><rect x="473.0" y="317.1" width="3.8" height="1.9" transform="rotate(-38 473.0 317.1)"/><rect x="421.4" y="375.3" width="3.2" height="1.3" transform="rotate(-35 421.4 375.3)"/><rect x="528.3" y="278.7" width="2.7" height="1.7" transform="rotate(-37 528.3 278.7)"/><rect x="470.6" y="318.8" width="2.9" height="1.1" transform="rotate(-31 470.6 318.8)"/><rect x="504.4" y="293.8" width="1.8" height="1.4" transform="rotate(-33 504.4 293.8)"/><rect x="442.8" y="299.6" width="2.0" height="1.6" transform="rotate(-30 442.8 299.6)"/><rect x="437.0" y="325.4" width="3.3" height="1.6" transform="rotate(-31 437.0 325.4)"/><rect x="532.5" y="324.2" width="1.5" height="1.9" transform="rotate(-41 532.5 324.2)"/><rect x="482.3" y="350.8" width="2.7" height="1.7" transform="rotate(-37 482.3 350.8)"/><rect x="477.9" y="290.8" width="2.0" height="1.0" transform="rotate(-37 477.9 290.8)"/><rect x="511.1" y="293.6" width="3.9" height="1.8" transform="rotate(-31 511.1 293.6)"/><rect x="504.0" y="292.1" width="1.9" height="1.9" transform="rotate(-30 504.0 292.1)"/><rect x="498.6" y="295.8" width="4.0" height="1.5" transform="rotate(-33 498.6 295.8)"/><rect x="390.0" y="399.0" width="3.9" height="1.9" transform="rotate(-33 390.0 399.0)"/><rect x="449.0" y="343.8" width="3.6" height="1.4" transform="rotate(-37 449.0 343.8)"/><rect x="539.4" y="278.4" width="1.8" height="1.7" transform="rotate(-39 539.4 278.4)"/><rect x="450.7" y="342.1" width="2.8" height="1.4" transform="rotate(-37 450.7 342.1)"/><rect x="475.0" y="344.4" width="2.4" height="1.5" transform="rotate(-34 475.0 344.4)"/><rect x="430.2" y="365.2" width="3.2" height="1.2" transform="rotate(-37 430.2 365.2)"/><rect x="425.3" y="365.0" width="1.6" height="1.5" transform="rotate(-38 425.3 365.0)"/><rect x="466.6" y="340.7" width="3.6" height="1.5" transform="rotate(-33 466.6 340.7)"/><rect x="422.4" y="333.0" width="2.6" height="1.3" transform="rotate(-33 422.4 333.0)"/><rect x="481.6" y="309.4" width="3.3" height="1.2" transform="rotate(-38 481.6 309.4)"/><rect x="463.8" y="317.0" width="1.6" height="1.6" transform="rotate(-41 463.8 317.0)"/><rect x="434.3" y="331.0" width="3.9" height="1.1" transform="rotate(-37 434.3 331.0)"/><rect x="403.5" y="385.5" width="3.6" height="2.0" transform="rotate(-39 403.5 385.5)"/><rect x="445.6" y="322.3" width="2.7" height="1.6" transform="rotate(-34 445.6 322.3)"/><rect x="427.7" y="320.3" width="2.3" height="1.2" transform="rotate(-38 427.7 320.3)"/><rect x="510.3" y="313.9" width="3.3" height="2.0" transform="rotate(-38 510.3 313.9)"/><rect x="449.9" y="326.9" width="2.1" height="1.9" transform="rotate(-30 449.9 326.9)"/><rect x="449.7" y="349.8" width="2.7" height="1.7" transform="rotate(-41 449.7 349.8)"/><rect x="507.3" y="331.9" width="2.9" height="1.8" transform="rotate(-33 507.3 331.9)"/><rect x="475.5" y="327.0" width="1.6" height="1.8" transform="rotate(-33 475.5 327.0)"/><rect x="529.4" y="286.2" width="2.6" height="1.3" transform="rotate(-37 529.4 286.2)"/><rect x="441.7" y="329.6" width="1.7" height="1.5" transform="rotate(-34 441.7 329.6)"/><rect x="457.2" y="321.6" width="3.3" height="1.8" transform="rotate(-37 457.2 321.6)"/><rect x="499.3" y="281.1" width="2.2" height="1.3" transform="rotate(-31 499.3 281.1)"/><rect x="498.4" y="324.0" width="2.4" height="1.9" transform="rotate(-35 498.4 324.0)"/><rect x="454.0" y="319.6" width="2.3" height="1.5" transform="rotate(-38 454.0 319.6)"/><rect x="479.9" y="343.2" width="3.9" height="1.0" transform="rotate(-33 479.9 343.2)"/><rect x="464.9" y="355.9" width="2.1" height="1.2" transform="rotate(-39 464.9 355.9)"/><rect x="414.4" y="341.2" width="1.6" height="1.1" transform="rotate(-30 414.4 341.2)"/><rect x="462.6" y="357.9" width="2.8" height="1.6" transform="rotate(-35 462.6 357.9)"/><rect x="518.4" y="305.0" width="3.4" height="1.6" transform="rotate(-30 518.4 305.0)"/><rect x="409.7" y="370.0" width="3.7" height="1.5" transform="rotate(-36 409.7 370.0)"/><rect x="518.1" y="295.5" width="3.7" height="1.6" transform="rotate(-29 518.1 295.5)"/><rect x="452.8" y="355.7" width="3.7" height="1.9" transform="rotate(-36 452.8 355.7)"/><rect x="424.3" y="348.0" width="2.3" height="1.9" transform="rotate(-31 424.3 348.0)"/><rect x="499.0" y="342.9" width="1.8" height="1.9" transform="rotate(-40 499.0 342.9)"/><rect x="408.7" y="376.1" width="3.2" height="1.5" transform="rotate(-32 408.7 376.1)"/><rect x="456.0" y="318.9" width="3.9" height="1.1" transform="rotate(-35 456.0 318.9)"/><rect x="472.6" y="312.8" width="2.3" height="1.5" transform="rotate(-32 472.6 312.8)"/><rect x="458.4" y="298.8" width="3.4" height="1.3" transform="rotate(-30 458.4 298.8)"/><rect x="467.6" y="339.9" width="2.3" height="1.1" transform="rotate(-40 467.6 339.9)"/><rect x="437.5" y="316.0" width="2.4" height="1.5" transform="rotate(-40 437.5 316.0)"/><rect x="464.0" y="302.6" width="3.8" height="1.7" transform="rotate(-35 464.0 302.6)"/><rect x="413.7" y="365.3" width="3.1" height="1.2" transform="rotate(-29 413.7 365.3)"/><rect x="447.3" y="325.7" width="4.0" height="1.7" transform="rotate(-40 447.3 325.7)"/><rect x="404.6" y="390.4" width="3.9" height="1.0" transform="rotate(-39 404.6 390.4)"/><rect x="483.0" y="286.8" width="2.9" height="1.2" transform="rotate(-39 483.0 286.8)"/><rect x="491.9" y="346.5" width="1.9" height="1.4" transform="rotate(-33 491.9 346.5)"/><rect x="466.5" y="292.5" width="2.9" height="1.5" transform="rotate(-40 466.5 292.5)"/><rect x="491.7" y="301.7" width="3.8" height="1.5" transform="rotate(-41 491.7 301.7)"/><rect x="457.5" y="356.8" width="3.0" height="1.2" transform="rotate(-41 457.5 356.8)"/><rect x="492.8" y="330.3" width="3.1" height="1.4" transform="rotate(-36 492.8 330.3)"/><rect x="409.5" y="335.6" width="3.8" height="1.8" transform="rotate(-35 409.5 335.6)"/><rect x="472.7" y="351.4" width="1.5" height="1.3" transform="rotate(-37 472.7 351.4)"/><rect x="451.2" y="310.9" width="2.7" height="1.9" transform="rotate(-38 451.2 310.9)"/><rect x="459.8" y="330.4" width="3.8" height="1.9" transform="rotate(-34 459.8 330.4)"/><rect x="484.8" y="315.9" width="4.0" height="1.1" transform="rotate(-35 484.8 315.9)"/><rect x="432.2" y="355.3" width="4.0" height="1.7" transform="rotate(-33 432.2 355.3)"/></g><clipPath id="tc"><polygon points="405,327 418,312 433,300 452,297 470,289 488,285 497,280 511,281 515,285 525,278 532,270 536,262 541,266 544,279 536,287 526,300 522,309 536,325 515,337 482,355 462,366 440,376 424,374 412,388 396,401 384,402 398,381 412,364 410,347"/></clipPath><path clip-path="url(#tc)" d="M157.8,145.7L403.6,-26.4M89.1,413.6L261.1,659.4M164.2,154.7L409.9,-17.3M98.9,406.7L271.0,652.5M170.5,163.7L416.2,-8.3M108.7,399.8L280.8,645.6M176.8,172.7L422.5,0.7M118.6,393.0L290.6,638.7M183.1,181.8L428.8,9.7M128.4,386.1L300.5,631.8M189.4,190.8L435.1,18.7M138.2,379.2L310.3,624.9M195.7,199.8L441.4,27.7M148.0,372.3L320.1,618.1M202.0,208.8L447.8,36.7M157.9,365.4L330.0,611.2M208.3,217.8L454.1,45.7M167.7,358.6L339.8,604.3M214.6,226.8L460.4,54.7M177.5,351.7L349.6,597.4M220.9,235.8L466.7,63.8M187.4,344.8L359.4,590.5M227.2,244.8L473.0,72.8M197.2,337.9L369.3,583.6M233.6,253.8L479.3,81.8M207.0,331.0L379.1,576.8M239.9,262.9L485.6,90.8M216.9,324.1L388.9,569.9M246.2,271.9L491.9,99.8M226.7,317.3L398.8,563.0M252.5,280.9L498.2,108.8M236.5,310.4L408.6,556.1M258.8,289.9L504.5,117.8M246.3,303.5L418.4,549.2M265.1,298.9L510.9,126.8M256.2,296.6L428.2,542.4M271.4,307.9L517.2,135.8M266.0,289.7L438.1,535.5M277.7,316.9L523.5,144.8M275.8,282.8L447.9,528.6M284.0,325.9L529.8,153.9M285.7,276.0L457.7,521.7M290.3,334.9L536.1,162.9M295.5,269.1L467.6,514.8M296.7,344.0L542.4,171.9M305.3,262.2L477.4,507.9M303.0,353.0L548.7,180.9M315.2,255.3L487.2,501.1M309.3,362.0L555.0,189.9M325.0,248.4L497.1,494.2M315.6,371.0L561.3,198.9M334.8,241.5L506.9,487.3M321.9,380.0L567.6,207.9M344.6,234.7L516.7,480.4M328.2,389.0L573.9,216.9M354.5,227.8L526.5,473.5M334.5,398.0L580.3,225.9M364.3,220.9L536.4,466.6M340.8,407.0L586.6,235.0M374.1,214.0L546.2,459.8M347.1,416.0L592.9,244.0M384.0,207.1L556.0,452.9M353.4,425.0L599.2,253.0M393.8,200.2L565.9,446.0M359.7,434.1L605.5,262.0M403.6,193.4L575.7,439.1M366.1,443.1L611.8,271.0M413.5,186.5L585.5,432.2M372.4,452.1L618.1,280.0M423.3,179.6L595.4,425.3M378.7,461.1L624.4,289.0M433.1,172.7L605.2,418.5M385.0,470.1L630.7,298.0M442.9,165.8L615.0,411.6M391.3,479.1L637.0,307.0M452.8,158.9L624.8,404.7M397.6,488.1L643.3,316.0M462.6,152.1L634.7,397.8M403.9,497.1L649.7,325.1M472.4,145.2L644.5,390.9M410.2,506.1L656.0,334.1M482.3,138.3L654.3,384.0M416.5,515.2L662.3,343.1M492.1,131.4L664.2,377.2M422.8,524.2L668.6,352.1M501.9,124.5L674.0,370.3M429.1,533.2L674.9,361.1M511.8,117.6L683.8,363.4M435.5,542.2L681.2,370.1M521.6,110.8L693.7,356.5M441.8,551.2L687.5,379.1M531.4,103.9L703.5,349.6M448.1,560.2L693.8,388.1M541.2,97.0L713.3,342.7M454.4,569.2L700.1,397.1M551.1,90.1L723.1,335.9M460.7,578.2L706.4,406.2M560.9,83.2L733.0,329.0M467.0,587.2L712.8,415.2M570.7,76.4L742.8,322.1M473.3,596.2L719.1,424.2M580.6,69.5L752.6,315.2M479.6,605.3L725.4,433.2M590.4,62.6L762.5,308.3M485.9,614.3L731.7,442.2M600.2,55.7L772.3,301.4M492.2,623.3L738.0,451.2M610.0,48.8L782.1,294.6M498.6,632.3L744.3,460.2M619.9,41.9L792.0,287.7M504.9,641.3L750.6,469.2M629.7,35.1L801.8,280.8M511.2,650.3L756.9,478.2M639.5,28.2L811.6,273.9M517.5,659.3L763.2,487.3M649.4,21.3L821.4,267.0M523.8,668.3L769.5,496.3M659.2,14.4L831.3,260.2M530.1,677.3L775.8,505.3M669.0,7.5L841.1,253.3" stroke="#1a1414" stroke-width="0.9" fill="none"/><g fill="#3d2b2b"><rect x="456.2" y="300.2" width="3.7" height="1.6" transform="rotate(-34 456.2 300.2)"/><rect x="427.0" y="305.5" width="3.3" height="1.7" transform="rotate(-29 427.0 305.5)"/><rect x="443.4" y="298.5" width="2.6" height="1.0" transform="rotate(-35 443.4 298.5)"/><rect x="436.2" y="303.3" width="4.3" height="1.5" transform="rotate(-34 436.2 303.3)"/><rect x="456.4" y="294.8" width="4.3" height="1.8" transform="rotate(-32 456.4 294.8)"/><rect x="463.0" y="302.2" width="4.5" height="2.0" transform="rotate(-39 463.0 302.2)"/><rect x="444.3" y="309.8" width="3.5" height="1.9" transform="rotate(-35 444.3 309.8)"/><rect x="465.4" y="302.2" width="4.3" height="1.9" transform="rotate(-35 465.4 302.2)"/><rect x="459.3" y="307.9" width="2.9" height="1.3" transform="rotate(-33 459.3 307.9)"/><rect x="427.5" y="326.0" width="3.0" height="1.9" transform="rotate(-37 427.5 326.0)"/><rect x="446.7" y="309.3" width="3.8" height="1.6" transform="rotate(-37 446.7 309.3)"/><rect x="429.8" y="309.0" width="4.4" height="1.6" transform="rotate(-40 429.8 309.0)"/><rect x="469.7" y="295.2" width="4.0" height="1.1" transform="rotate(-33 469.7 295.2)"/><rect x="467.9" y="291.6" width="3.5" height="1.9" transform="rotate(-38 467.9 291.6)"/><rect x="430.0" y="324.9" width="3.3" height="1.7" transform="rotate(-41 430.0 324.9)"/><rect x="432.6" y="322.0" width="2.8" height="1.2" transform="rotate(-33 432.6 322.0)"/><rect x="453.1" y="318.9" width="2.7" height="1.3" transform="rotate(-41 453.1 318.9)"/><rect x="443.6" y="319.9" width="4.0" height="1.9" transform="rotate(-32 443.6 319.9)"/><rect x="444.9" y="296.7" width="3.8" height="1.3" transform="rotate(-40 444.9 296.7)"/><rect x="443.5" y="324.6" width="2.8" height="1.6" transform="rotate(-36 443.5 324.6)"/><rect x="472.7" y="298.1" width="3.7" height="1.4" transform="rotate(-41 472.7 298.1)"/><rect x="454.2" y="308.9" width="4.5" height="1.9" transform="rotate(-29 454.2 308.9)"/><rect x="431.3" y="306.1" width="3.0" height="1.6" transform="rotate(-34 431.3 306.1)"/><rect x="432.6" y="305.2" width="3.6" height="1.0" transform="rotate(-41 432.6 305.2)"/><rect x="459.3" y="297.4" width="2.7" height="1.2" transform="rotate(-38 459.3 297.4)"/><rect x="430.4" y="309.4" width="3.4" height="1.3" transform="rotate(-33 430.4 309.4)"/><rect x="430.1" y="326.0" width="4.4" height="1.7" transform="rotate(-36 430.1 326.0)"/><rect x="447.2" y="312.0" width="2.6" height="1.4" transform="rotate(-35 447.2 312.0)"/><rect x="463.8" y="302.7" width="3.5" height="1.9" transform="rotate(-34 463.8 302.7)"/><rect x="434.5" y="329.3" width="3.2" height="1.0" transform="rotate(-33 434.5 329.3)"/><rect x="441.4" y="307.9" width="2.9" height="1.6" transform="rotate(-40 441.4 307.9)"/><rect x="434.2" y="303.0" width="4.4" height="1.1" transform="rotate(-32 434.2 303.0)"/><rect x="429.0" y="311.6" width="3.3" height="1.5" transform="rotate(-32 429.0 311.6)"/><rect x="446.4" y="302.4" width="3.4" height="1.8" transform="rotate(-38 446.4 302.4)"/><rect x="448.0" y="307.5" width="4.4" height="1.8" transform="rotate(-30 448.0 307.5)"/><rect x="465.7" y="299.8" width="3.0" height="1.5" transform="rotate(-38 465.7 299.8)"/><rect x="442.4" y="316.2" width="4.3" height="1.6" transform="rotate(-31 442.4 316.2)"/><rect x="431.2" y="315.8" width="3.9" height="1.4" transform="rotate(-35 431.2 315.8)"/><rect x="424.4" y="310.3" width="4.4" height="1.8" transform="rotate(-40 424.4 310.3)"/><rect x="447.4" y="317.8" width="3.0" height="1.9" transform="rotate(-35 447.4 317.8)"/><rect x="458.1" y="304.4" width="4.5" height="1.8" transform="rotate(-34 458.1 304.4)"/><rect x="426.3" y="306.0" width="2.6" height="1.6" transform="rotate(-30 426.3 306.0)"/><rect x="428.3" y="308.9" width="3.5" height="1.4" transform="rotate(-32 428.3 308.9)"/><rect x="436.9" y="319.1" width="3.8" height="1.8" transform="rotate(-31 436.9 319.1)"/><rect x="430.8" y="313.7" width="3.3" height="1.7" transform="rotate(-29 430.8 313.7)"/><rect x="444.5" y="317.6" width="4.3" height="1.7" transform="rotate(-31 444.5 317.6)"/><rect x="459.6" y="313.1" width="4.3" height="1.9" transform="rotate(-40 459.6 313.1)"/><rect x="429.4" y="319.0" width="3.7" height="1.2" transform="rotate(-31 429.4 319.0)"/><rect x="425.9" y="313.3" width="3.4" height="1.3" transform="rotate(-34 425.9 313.3)"/><rect x="461.0" y="307.9" width="3.8" height="1.3" transform="rotate(-38 461.0 307.9)"/><rect x="422.5" y="319.4" width="2.8" height="1.8" transform="rotate(-32 422.5 319.4)"/><rect x="441.1" y="316.0" width="4.1" height="1.9" transform="rotate(-39 441.1 316.0)"/><rect x="427.3" y="303.4" width="3.4" height="1.3" transform="rotate(-41 427.3 303.4)"/><rect x="438.9" y="310.1" width="3.3" height="1.4" transform="rotate(-31 438.9 310.1)"/><rect x="435.6" y="314.9" width="3.5" height="1.5" transform="rotate(-30 435.6 314.9)"/><rect x="422.4" y="322.4" width="3.1" height="1.6" transform="rotate(-31 422.4 322.4)"/><rect x="455.2" y="303.9" width="4.2" height="1.1" transform="rotate(-33 455.2 303.9)"/><rect x="440.3" y="309.8" width="4.2" height="1.8" transform="rotate(-33 440.3 309.8)"/><rect x="444.1" y="297.0" width="3.1" height="2.0" transform="rotate(-40 444.1 297.0)"/><rect x="464.7" y="303.3" width="3.2" height="1.3" transform="rotate(-40 464.7 303.3)"/></g><g fill="#3d2b2b"><rect x="388.8" y="386.9" width="3.2" height="1.6" transform="rotate(-33 388.8 386.9)"/><rect x="427.7" y="374.6" width="3.0" height="2.0" transform="rotate(-35 427.7 374.6)"/><rect x="427.7" y="384.0" width="3.8" height="1.2" transform="rotate(-33 427.7 384.0)"/><rect x="429.7" y="386.0" width="4.0" height="1.7" transform="rotate(-40 429.7 386.0)"/><rect x="422.6" y="389.0" width="3.1" height="1.0" transform="rotate(-31 422.6 389.0)"/><rect x="404.0" y="394.5" width="4.3" height="1.7" transform="rotate(-30 404.0 394.5)"/><rect x="399.0" y="398.1" width="3.4" height="1.9" transform="rotate(-30 399.0 398.1)"/><rect x="401.7" y="390.5" width="3.1" height="1.5" transform="rotate(-36 401.7 390.5)"/><rect x="396.1" y="388.7" width="3.7" height="1.9" transform="rotate(-33 396.1 388.7)"/><rect x="383.9" y="400.7" width="4.4" height="1.9" transform="rotate(-34 383.9 400.7)"/><rect x="419.7" y="372.5" width="4.2" height="1.6" transform="rotate(-38 419.7 372.5)"/><rect x="425.3" y="381.1" width="2.8" height="1.3" transform="rotate(-32 425.3 381.1)"/><rect x="420.0" y="377.7" width="4.3" height="2.0" transform="rotate(-35 420.0 377.7)"/><rect x="399.8" y="389.8" width="2.8" height="1.0" transform="rotate(-31 399.8 389.8)"/><rect x="431.6" y="379.7" width="3.4" height="1.5" transform="rotate(-33 431.6 379.7)"/><rect x="412.0" y="387.6" width="3.7" height="1.9" transform="rotate(-35 412.0 387.6)"/><rect x="401.3" y="394.6" width="3.0" height="1.3" transform="rotate(-29 401.3 394.6)"/><rect x="407.2" y="387.1" width="2.5" height="1.4" transform="rotate(-34 407.2 387.1)"/><rect x="414.1" y="383.5" width="3.9" height="1.4" transform="rotate(-33 414.1 383.5)"/><rect x="403.0" y="389.0" width="3.1" height="1.4" transform="rotate(-37 403.0 389.0)"/><rect x="397.3" y="389.1" width="3.1" height="1.4" transform="rotate(-32 397.3 389.1)"/><rect x="421.1" y="376.8" width="2.9" height="1.8" transform="rotate(-38 421.1 376.8)"/><rect x="394.2" y="377.8" width="4.2" height="1.4" transform="rotate(-31 394.2 377.8)"/><rect x="415.6" y="401.7" width="3.4" height="1.2" transform="rotate(-40 415.6 401.7)"/><rect x="407.7" y="371.6" width="4.1" height="1.8" transform="rotate(-39 407.7 371.6)"/><rect x="391.4" y="398.3" width="3.8" height="1.8" transform="rotate(-37 391.4 398.3)"/><rect x="424.9" y="375.1" width="3.2" height="1.4" transform="rotate(-36 424.9 375.1)"/><rect x="399.9" y="403.3" width="2.8" height="1.0" transform="rotate(-30 399.9 403.3)"/><rect x="416.4" y="385.8" width="3.1" height="1.3" transform="rotate(-38 416.4 385.8)"/><rect x="392.0" y="398.5" width="2.6" height="1.9" transform="rotate(-33 392.0 398.5)"/><rect x="416.4" y="386.1" width="3.3" height="1.9" transform="rotate(-34 416.4 386.1)"/><rect x="429.3" y="384.0" width="4.1" height="1.4" transform="rotate(-39 429.3 384.0)"/><rect x="408.1" y="398.7" width="2.8" height="1.8" transform="rotate(-30 408.1 398.7)"/><rect x="407.6" y="381.7" width="3.4" height="1.8" transform="rotate(-41 407.6 381.7)"/><rect x="396.1" y="391.4" width="3.7" height="1.4" transform="rotate(-39 396.1 391.4)"/><rect x="409.4" y="394.4" width="3.3" height="1.1" transform="rotate(-39 409.4 394.4)"/><rect x="397.6" y="389.5" width="4.1" height="1.4" transform="rotate(-31 397.6 389.5)"/><rect x="413.8" y="382.0" width="3.2" height="1.5" transform="rotate(-33 413.8 382.0)"/><rect x="400.6" y="393.4" width="3.4" height="1.2" transform="rotate(-35 400.6 393.4)"/><rect x="400.9" y="381.8" width="4.3" height="1.9" transform="rotate(-37 400.9 381.8)"/><rect x="390.3" y="383.4" width="2.7" height="1.8" transform="rotate(-33 390.3 383.4)"/><rect x="416.7" y="395.1" width="3.6" height="1.1" transform="rotate(-34 416.7 395.1)"/><rect x="381.2" y="399.9" width="3.8" height="1.8" transform="rotate(-30 381.2 399.9)"/><rect x="410.9" y="398.0" width="2.6" height="1.8" transform="rotate(-35 410.9 398.0)"/><rect x="410.0" y="399.2" width="3.0" height="1.2" transform="rotate(-38 410.0 399.2)"/><rect x="413.3" y="396.0" width="3.3" height="1.4" transform="rotate(-36 413.3 396.0)"/><rect x="396.1" y="381.5" width="2.7" height="1.5" transform="rotate(-29 396.1 381.5)"/><rect x="400.1" y="395.7" width="2.8" height="1.7" transform="rotate(-32 400.1 395.7)"/><rect x="417.1" y="385.7" width="3.5" height="1.6" transform="rotate(-30 417.1 385.7)"/><rect x="406.9" y="382.5" width="3.9" height="1.2" transform="rotate(-38 406.9 382.5)"/><rect x="386.2" y="388.7" width="3.1" height="1.2" transform="rotate(-33 386.2 388.7)"/><rect x="419.1" y="381.2" width="4.2" height="1.6" transform="rotate(-38 419.1 381.2)"/><rect x="404.5" y="379.9" width="2.8" height="1.4" transform="rotate(-37 404.5 379.9)"/><rect x="412.2" y="383.6" width="4.2" height="1.8" transform="rotate(-34 412.2 383.6)"/><rect x="404.6" y="394.6" width="4.2" height="1.4" transform="rotate(-32 404.6 394.6)"/><rect x="419.9" y="392.6" width="4.4" height="1.9" transform="rotate(-38 419.9 392.6)"/><rect x="385.5" y="393.9" width="4.2" height="1.9" transform="rotate(-38 385.5 393.9)"/><rect x="429.5" y="376.9" width="3.3" height="1.7" transform="rotate(-40 429.5 376.9)"/><rect x="379.3" y="399.5" width="3.1" height="1.4" transform="rotate(-34 379.3 399.5)"/><rect x="395.1" y="382.2" width="3.5" height="1.2" transform="rotate(-34 395.1 382.2)"/><rect x="435.4" y="380.3" width="3.6" height="1.1" transform="rotate(-38 435.4 380.3)"/><rect x="416.6" y="368.2" width="4.3" height="1.9" transform="rotate(-40 416.6 368.2)"/><rect x="434.5" y="379.5" width="4.0" height="1.8" transform="rotate(-37 434.5 379.5)"/><rect x="417.2" y="391.7" width="4.1" height="1.3" transform="rotate(-32 417.2 391.7)"/><rect x="408.2" y="368.2" width="3.5" height="1.4" transform="rotate(-32 408.2 368.2)"/><rect x="417.4" y="387.9" width="2.9" height="1.6" transform="rotate(-33 417.4 387.9)"/><rect x="384.9" y="401.9" width="3.8" height="1.1" transform="rotate(-30 384.9 401.9)"/><rect x="420.1" y="389.2" width="3.6" height="1.6" transform="rotate(-36 420.1 389.2)"/><rect x="422.3" y="386.9" width="4.0" height="1.4" transform="rotate(-38 422.3 386.9)"/><rect x="398.2" y="401.2" width="2.6" height="1.5" transform="rotate(-38 398.2 401.2)"/></g><polygon points="449.2,379.7 484,368.3 496.1,367.6 505.2,372.1 512.7,387.2 509.7,394.8 500.6,396.3 485.5,394.8 479.5,405.4 484,420.5 491.6,426.6 491.6,432.6 478,440.2 478,447.7 465.8,455.3 455.3,453.8 438.6,447.7 447.7,432.6 458.3,420.5 447.7,413 444.7,400.8 446.2,387.2" fill="#bdbdbd"/><defs><pattern id="sd" width="3.2" height="3.2" patternUnits="userSpaceOnUse" patternTransform="rotate(-35)"><rect width="3.2" height="3.2" fill="#352828"/><rect y="2.2" width="3.2" height="0.7" fill="#8c8484"/></pattern></defs><polygon points="449.4,377 493.8,368.1 497,383.3 474.8,389.7 452.5,386.5" fill="url(#sd)"/><polygon points="495.4,369 503.3,367.5 512.9,389.7 509.7,397.6 500.2,396 497,383.3" fill="url(#sd)"/><polygon points="446.2,380.2 462.1,383.3 465.2,402.4 474.8,415.1 462.1,421.4 446.2,408.7 443.7,389.7" fill="url(#sd)"/><polygon points="455.7,421.4 474.8,427.8 471.6,443.7 462.1,453.2 449.4,453.2 438.3,443.7 444.6,434.1" fill="url(#sd)"/><polygon points="474.8,431 489,424.6 492.2,431 479.5,440.5" fill="url(#sd)"/><polygon points="540.8,286.3 547.7,280.2 559.9,288.4 551.7,295.9" fill="#3a2b2b"/><g fill="none" stroke="#3a2b2b" stroke-width="1.1"><path d="M848,449L856,447L858,455L850,457z M853,448L861,446L863,454L855,456z M858,451L866,449L868,456L860,458z M864,453L872,449L874,452L866,457z"/></g><path d="M850,452L872,447 M852,455L870,451" stroke="#3a2b2b" stroke-width="0.8"/><polygon points="419.7,249.8 425.8,235.5 430.9,231.4 434,235.5 429.9,252.9" fill="#a8d8f8" stroke="#2a5ee8" stroke-width="0.9"/><polygon points="435,228.4 445.3,223.2 441.2,231.4" fill="#a8d8f8" stroke="#2a5ee8" stroke-width="0.9"/><polygon points="416.6,261.1 422.8,255 420.7,266.2" fill="#a8d8f8" stroke="#2a5ee8" stroke-width="0.9"/><polygon points="396.2,201.8 401.3,205.9 400.3,211 398.2,208.9" fill="#a8d8f8" stroke="#2a5ee8" stroke-width="0.9"/><polygon points="678.5,238.5 683.5,248.5 681,249.75 679,246" fill="#a8d8f8" stroke="#2a5ee8" stroke-width="0.9"/><polygon points="811,276 831,281 826,288.5 816,288.5" fill="#a8d8f8" stroke="#2a5ee8" stroke-width="0.9"/><polygon points="606,318.5 612,328.5 606,329.75" fill="#a8d8f8" stroke="#2a5ee8" stroke-width="0.9"/><polygon points="697,337 711,331 712,337 703,341" fill="#a8d8f8" stroke="#2a5ee8" stroke-width="0.9"/><polygon points="771,346 778.5,345 782,356 775,354" fill="#a8d8f8" stroke="#2a5ee8" stroke-width="0.9"/><polygon points="772,326 778.5,331 774.75,333.5" fill="#a8d8f8" stroke="#2a5ee8" stroke-width="0.9"/><polygon points="818.5,381 831,382 831,384.75 821,384.75" fill="#a8d8f8" stroke="#2a5ee8" stroke-width="0.9"/><polygon points="853.5,389.75 864.75,391 860,394" fill="#a8d8f8" stroke="#2a5ee8" stroke-width="0.9"/><polygon points="903.75,373.5 915,372.25 915,377.25 903.75,378.5" fill="#a8d8f8" stroke="#2a5ee8" stroke-width="0.9"/><polygon points="396,202 400,206 397,208" fill="#a8d8f8" stroke="#2a5ee8" stroke-width="0.9"/><polygon points="682,240 685,247 681,248" fill="#a8d8f8" stroke="#2a5ee8" stroke-width="0.9"/><circle cx="797.5" cy="252.25" r="3" fill="#a8d8f8" stroke="#2a5ee8" stroke-width="0.9"/><circle cx="861.25" cy="274" r="2" fill="#a8d8f8" stroke="#2a5ee8" stroke-width="0.9"/><path d="M205.0,136.0 L208.8,136.5 L212.5,137.0 L216.2,138.0 L220.1,138.2 L223.7,139.2 L227.5,139.6 L231.3,140.0 L235.0,141.0 L238.7,141.3 L242.5,141.1 L246.3,141.7 L250.0,141.7 L253.8,141.9 L257.5,142.4 L261.2,143.0 L265.0,142.7 L268.8,143.0 L272.5,143.5 L276.4,144.3 L280.3,145.3 L284.3,145.7 L288.2,146.3 L292.1,147.4 L296.1,147.4 L300.0,148.5 L303.6,150.6 L307.6,152.1 L311.4,153.9 L315.0,156.0 L316.9,159.2 L318.5,162.6 L320.0,166.0 L322.9,168.2 L326.1,169.8 L329.0,172.1 L331.9,174.1 L335.0,176.0 L338.4,175.0 L341.9,174.2 L345.2,172.9 L348.7,171.9 L352.1,171.1 L355.7,170.5 L359.0,169.4 L362.5,168.5 L366.7,169.2 L370.8,170.2 L375.0,171.0 L378.4,172.6 L381.7,174.2 L385.0,176.0 L388.5,176.2 L392.0,176.0 L395.5,175.5 L399.0,175.7 L402.5,175.6 L406.0,175.8 L409.5,175.6 L413.0,175.2 L416.5,175.6 L420.0,174.9 L423.5,175.0 L427.0,175.2 L430.5,174.6 L434.0,174.8 L437.5,174.8 L441.6,173.7 L445.9,173.4 L450.0,172.6 L453.8,171.8 L457.6,170.6 L461.4,169.8 L465.1,168.4 L469.0,167.7 L472.7,166.5 L478.7,165.0 L482.2,165.5 L485.8,165.8 L489.3,166.1 L492.8,166.8 L496.3,167.3 L499.9,167.3 L503.4,168.3 L506.9,169.4 L510.5,170.3 L514.3,170.1 L518.1,170.7 L521.8,170.8 L525.6,171.2 L529.4,171.2 L533.2,171.1 L537.2,171.7 L541.1,172.5 L544.9,173.5 L549.0,173.8 L552.8,174.9 L554.3,171.8 L556.6,176.3 L558.9,180.9 L560.4,184.8 L561.6,188.7 L562.8,192.6 L563.5,196.7 L564.9,200.6 L569.5,205.1 L572.7,208.7 L575.5,212.7 L578.4,215.5 L581.0,218.5 L583.1,222.0 L584.7,225.6 L587.3,228.8 L589.0,232.5 L591.0,236.0 L589.0,239.0 L586.7,241.8 L584.8,244.9 L582.8,247.8 L581.0,251.0 L577.7,252.3 L574.4,253.3 L571.0,254.4 L567.6,255.2 L564.2,256.2 L561.1,257.9 L557.7,259.0 L554.4,260.1 L551.0,261.0 L547.4,262.9 L543.7,264.3 L540.0,266.0 M561.9,188.5 L565.0,185.5 L567.8,182.3 L571.0,179.4 L574.6,179.2 L578.3,179.7 L581.9,179.9 L585.5,180.2 L589.1,180.7 L592.7,180.7 L596.4,180.7 L600.0,180.9 L604.0,180.1 L608.0,179.2 L611.9,177.8 L616.0,177.2 L619.6,177.7 L623.1,177.8 L626.7,178.1 L630.3,178.2 L633.9,178.1 L637.4,178.2 L641.0,178.5 L644.5,180.1 L647.6,182.3 L651.2,183.8 L654.5,185.7 L657.8,187.7 L661.0,189.8 L664.6,189.3 L668.1,189.3 L671.7,188.9 L675.3,188.6 L678.8,188.6 L682.4,188.4 L686.0,188.5 L689.0,190.6 L692.0,192.5 L694.5,195.2 L697.5,197.3 L700.7,199.1 L703.5,201.4 L706.4,203.6 L709.3,205.8 L712.3,207.8 L715.0,210.2 L718.8,209.4 L722.5,208.5 L726.1,207.0 L729.8,205.9 L733.4,204.6 L737.1,203.5 L740.8,202.7 L744.5,201.5 L748.3,200.9 L751.9,199.6 L755.3,198.6 L758.7,197.8 L762.3,197.8 L765.6,196.7 L769.0,195.7 L772.5,195.3 L775.8,194.1 L779.3,193.8 L782.8,193.4 L786.2,192.3 L782.8,191.0 L779.3,190.0 L775.8,189.3 L772.3,188.2 L768.8,187.2 L765.5,185.7 L762.0,184.8 L758.5,183.8 L755.0,181.6 L751.3,179.8 L751.9,176.5 L755.9,175.9 L759.8,175.4 L763.8,175.2 L763.1,169.3 L764.9,165.9 L766.6,162.4 L767.8,158.7 L766.4,152.1 L762.8,151.2 L759.2,150.6 L755.6,149.9 L751.9,149.5 L748.7,146.9 L745.2,144.7 L742.0,142.1 L738.7,139.6 L734.8,138.9 L730.9,138.4 L727.1,137.7 L723.3,136.7 L719.4,136.0 L715.6,135.0 L717.6,133.6 L713.7,131.0 M571.0,179.4 L574.6,177.8 L578.2,176.2 L581.5,174.1 L585.2,172.6 L588.8,170.9 L592.1,168.8 L595.6,168.5 L599.0,167.3 L602.5,166.5 L606.0,166.0 L605.4,162.3 L604.9,158.5 L604.5,154.8 L604.4,151.0 L604.2,147.2 L603.5,143.5 L606.8,141.5 L609.7,139.1 L612.9,137.0 L616.0,134.8 L619.7,134.6 L623.2,133.7 L626.9,133.9 L630.6,133.7 L634.2,133.3 L637.8,132.9 L641.5,132.3 L645.1,131.8 L648.7,131.9 L652.4,131.2 L656.0,131.0 M499.9,167.3 L496.7,169.8 L493.6,172.3 L490.9,175.3 L487.8,177.9 L491.4,180.3 L494.7,183.2 L498.4,185.4 L495.4,188.5 L496.0,192.3 L496.9,196.0 L500.1,198.1 L502.9,200.6 L502.9,206.6 L505.3,209.4 L507.4,212.5 L509.0,215.8 L511.2,218.8 L513.5,221.7 L512.3,226.4 L510.5,231.0 L510.9,234.6 L511.4,238.2 L512.3,241.7 L513.2,245.3 L513.7,248.9 L514.6,252.4 L515.0,256.0 M513.5,199.8 L516.6,201.8 L518.9,204.6 L521.9,206.7 L524.7,208.9 L527.4,211.4 L530.4,213.4 L533.2,215.7 L537.7,211.1 L537.5,207.0 L537.0,203.0 L536.2,199.0 L538.2,194.4 L540.7,190.0 L544.4,187.5 L548.3,185.4 M450.0,180.9 L454.6,181.5 L459.1,182.4 L461.5,185.3 L463.5,188.5 L466.0,191.4 L468.1,194.5 L466.2,198.6 L464.4,202.7 L462.1,206.6 L460.8,210.0 L460.2,213.7 L459.1,217.2 M462.1,212.7 L465.9,210.8 L469.7,209.0 L473.6,207.3 L477.2,205.1 L481.2,205.0 L485.3,205.4 L489.3,205.1 L493.3,205.1 L497.4,205.1 L501.4,205.1 L504.7,207.8 L507.5,211.1 M533.2,216.4 L537.7,215.6 L542.2,214.7 L546.8,214.2 L550.7,211.8 L555.0,210.3 L558.9,208.1 L562.4,207.3 L566.0,207.1 L569.5,206.6 L572.4,208.8 L575.5,210.7 L578.5,212.7 M472.7,166.5 L475.6,163.6 L478.8,160.9 L481.8,158.1 L484.8,155.2 L488.7,152.3 L492.3,149.1 L492.8,145.3 L493.9,141.6 L496.9,139.3 L499.9,137.0 L495.3,136.5 L490.8,135.7 L486.3,134.8 L489.4,133.1 L492.3,131.0 M385.0,173.2 L388.6,175.3 L392.1,177.3 L395.6,179.5 L399.3,181.4 L401.7,185.0 L404.7,188.2 L407.4,191.6 L410.8,192.7 L414.2,193.6 L417.6,194.7 L421.0,195.8 L424.5,196.6 L427.9,197.7 L430.6,201.1 L433.4,204.5 L436.1,207.9 L438.4,205.0 L440.2,201.8 L441.6,198.2 L442.9,194.5 L444.2,190.9 L444.9,187.0 L446.3,183.4 L450.4,182.9 L454.5,182.8 L458.6,182.2 L462.6,181.4 L464.4,184.9 L466.0,188.4 L467.3,192.1 L468.8,195.7 L468.1,199.5 L466.9,203.2 L466.0,207.0 L464.5,210.6 L463.4,214.3 L462.6,218.1 L461.0,221.7 L460.2,225.7 L458.4,229.3 L457.1,233.1 L456.1,236.9 L454.5,240.6 L452.8,243.9 L451.4,247.3 L450.4,250.8 L450.6,254.9 L450.0,259.0 L450.5,263.1 L450.4,267.2 L450.4,271.3 L450.5,274.9 L451.2,278.5 L452.2,282.0 L452.5,285.6 L453.0,289.2 L453.6,292.8 L454.2,296.4 L454.5,300.0 M353.3,194.6 L356.8,195.3 L360.2,196.4 L363.8,196.7 L367.2,197.9 L370.7,198.7 L372.4,201.7 L374.4,204.6 L375.8,207.9 L378.5,211.4 L380.9,215.1 L384.6,215.0 L388.3,214.7 L391.9,214.1 L395.6,214.6 L399.3,214.0 L402.0,216.2 L404.8,218.4 L408.1,219.9 L410.8,222.1 L413.6,224.3 L417.5,221.9 L421.8,220.4 L425.8,218.1 L429.8,216.6 L433.9,215.1 L438.1,214.0 L440.1,210.9 L442.5,208.1 L444.5,205.0 L446.1,201.7 L448.1,198.6 L450.4,195.7 L452.4,197.7 L451.7,201.7 L451.5,205.9 L451.0,209.9 L451.1,214.1 L450.4,218.1 L448.2,221.2 L445.4,223.7 L443.1,226.7 L440.8,229.8 L438.1,232.4 L439.9,235.7 L442.2,238.6 L446.3,240.1 L450.3,241.6 L454.5,242.7 M390.0,216.1 L394.7,216.8 L399.3,218.1 L397.0,222.1 L395.5,226.5 L393.1,230.4 L392.8,234.5 L393.1,238.6 L393.2,242.6 L393.1,246.7 L393.1,250.8 L396.3,253.8 L400.1,256.1 L403.4,259.0 L406.3,256.7 L409.5,254.9 L412.4,252.7 L415.6,250.8 L416.5,247.0 L417.8,243.4 L418.9,239.6 L420.3,236.0 L421.7,232.4 L425.8,231.3 L430.0,230.4 M399.3,259.0 L402.9,257.2 L406.7,255.9 L410.3,253.9 L414.0,252.4 L417.7,250.8 L419.5,246.6 L421.7,242.7 L424.4,239.2 L426.9,235.6 L430.0,232.4 L432.9,229.7 L435.9,227.0 L439.3,224.9 L442.2,222.2 L443.9,219.0 L445.3,215.6 L447.1,212.4 L449.1,209.3 L450.4,205.9 M387.0,271.3 L390.5,270.0 L394.2,269.5 L397.7,268.2 L401.3,267.2 L404.3,264.1 L407.4,261.1 L411.0,259.3 L414.2,256.9 L417.7,254.9 L421.7,256.0 L425.8,257.0 L427.7,261.1 L429.9,265.1 L431.6,268.4 L434.0,271.3 L429.9,272.1 L425.8,272.4 L421.7,273.3 L417.6,275.3 L413.5,277.5 L409.5,279.7 M450.4,271.3 L454.0,270.2 L457.5,269.1 L461.0,267.9 L464.6,266.9 L468.2,265.8 L471.9,265.3 L475.4,263.9 L479.0,263.1 M407.4,271.3 L409.2,275.3 L410.8,279.3 L411.8,283.6 L413.6,287.6 L414.7,291.8 L416.2,295.9 L417.7,300.0 M421.7,291.7 L424.8,289.7 L428.0,287.9 L431.2,286.1 L434.4,284.4 L437.5,282.4 L440.8,280.8 L443.9,278.9 L447.4,277.5 L450.4,275.4 L454.1,275.0 L457.6,273.9 L461.1,272.9 L464.8,272.7 L468.2,271.4 L471.8,270.6 L475.3,269.6 L479.0,269.2 M462.6,201.8 L462.7,205.9 L462.6,209.9 L462.6,214.0 L462.6,218.1 L464.4,213.9 L466.7,210.0 L470.8,208.0 L474.9,205.9 L476.3,209.4 L477.1,213.0 L478.3,216.5 L479.0,220.2 M380.9,215.1 L381.0,219.0 L381.3,223.0 L381.3,226.9 L381.1,230.9 L381.1,234.8 L380.8,238.8 L380.9,242.7 L381.9,246.1 L382.7,249.6 L383.8,252.9 L384.8,256.3 L385.7,259.8 L387.0,263.1 L388.7,266.3 L390.4,269.6 L391.6,273.1 L393.8,276.0 L395.2,279.4 L397.1,282.6 L399.2,285.6 L401.7,288.4 L403.4,291.7 L406.2,296.0 L409.5,300.0 M380.9,300.0 L382.9,297.1 L384.4,293.9 L386.2,290.8 L387.9,287.8 L389.1,284.4 L391.1,281.5 L395.2,280.0 L399.3,278.5 L403.4,277.2 L407.4,275.4 L411.5,276.4 L415.5,277.3 L419.7,277.9 L423.7,278.9 L427.9,279.4 L431.7,278.5 L435.4,277.5 L439.1,276.1 L442.8,275.0 L446.6,274.0 L450.4,273.3 M205.0,273.5 L208.4,274.9 L211.8,276.2 L214.9,278.2 L218.3,279.5 L221.6,281.1 L225.0,282.6 L228.3,284.1 L231.7,285.5 L235.2,286.6 L238.2,288.7 L241.6,290.2 L245.0,291.5 L248.3,293.0 L251.6,294.6 L255.0,296.0 L258.5,296.9 L261.6,298.6 L265.1,299.4 L268.4,300.4 L271.7,301.8 L274.9,303.3 L278.4,304.1 L281.6,305.7 L284.9,307.1 L288.3,307.9 L291.7,309.0 L295.0,310.3 L298.3,311.6 L301.6,312.9 L305.0,313.9 L308.3,315.2 L311.8,315.9 L315.1,317.2 L318.4,318.4 L321.6,320.0 L325.0,321.0 L328.0,323.6 L330.7,326.4 L333.8,328.8 L336.7,331.5 L339.4,334.3 L342.0,337.2 L345.0,339.8 L348.3,341.1 L351.6,342.4 L355.0,343.5 L358.7,343.0 L362.5,342.9 L366.2,342.5 L370.0,342.2 L373.7,341.6 L377.5,341.9 L381.2,341.1 L385.0,341.0 L389.0,340.9 L393.0,340.3 L397.0,339.1 L401.0,339.0 L405.0,338.5 M578.5,212.7 L582.2,213.8 L585.9,214.7 L589.8,215.1 L593.5,216.0 L597.1,215.6 L600.8,215.4 L604.5,215.8 L608.1,215.0 L611.8,215.1 L615.4,214.6 L619.1,214.7 L622.7,214.8 L626.4,214.0 L630.1,214.3 L633.7,213.9 L637.4,214.0 L641.0,213.5 L644.6,211.6 L647.9,209.3 L651.7,207.8 L655.0,205.5 L658.5,203.5 L661.0,201.0 L664.6,201.2 L668.1,201.8 L671.5,202.7 L675.0,203.3 L678.5,203.8 L682.0,204.2 L685.5,205.0 L689.0,205.5 L692.5,206.5 L696.1,206.4 L699.5,207.6 L703.0,208.3 L706.5,208.3 L709.9,209.5 L713.5,209.8 M546.0,258.5 L549.6,258.3 L553.2,258.1 L556.7,257.3 L560.3,257.0 L563.8,256.6 L567.5,256.8 L571.0,256.1 L574.6,255.5 L578.1,255.2 L581.7,254.7 L585.2,254.2 L588.8,253.9 L592.5,254.1 L596.0,253.5 L599.8,255.2 L603.3,257.6 L607.3,258.9 L611.0,261.0 L613.3,264.0 L615.4,267.3 L617.8,270.2 L619.8,273.4 L621.6,276.8 L623.9,279.9 L626.1,283.0 L628.5,286.0 L628.4,291.0 L628.5,296.0 L627.3,300.1 L626.5,304.3 L626.0,308.5 L624.9,312.0 L623.6,315.4 L623.0,319.0 L621.4,322.3 L620.5,325.9 L619.1,329.3 L618.1,332.8 L617.3,336.3 L616.0,339.8 M713.5,276.0 L713.6,280.0 L712.6,284.0 L712.9,288.0 L712.3,292.0 L712.0,296.0 L711.6,301.0 L711.0,306.0 L713.6,309.7 L716.0,313.5 L714.6,317.2 L713.1,320.9 L712.4,324.8 L711.0,328.5 L713.4,331.7 L716.1,334.7 L718.5,337.9 L721.0,341.0 M711.0,328.5 L708.6,331.1 L706.2,333.7 L703.7,336.2 L701.2,338.7 L698.5,341.0 L696.8,344.1 L695.6,347.4 L694.4,350.7 L692.5,353.7 L691.0,356.9 L690.0,360.3 L688.5,363.5 L687.5,367.3 L686.0,371.0 L689.0,373.3 L691.8,375.8 L694.5,378.4 L697.5,380.8 L700.2,383.3 L703.0,385.9 L705.7,388.5 L708.5,391.0 L712.0,391.7 L715.6,391.9 L719.2,392.0 L722.8,392.4 L726.4,392.8 L729.9,393.0 L733.5,393.5 M758.5,281.0 L759.7,276.8 L760.8,272.6 L762.5,268.5 L766.2,266.2 L770.2,264.4 L773.6,261.7 L777.5,259.8 L781.0,260.1 L784.5,260.6 L788.0,261.2 L791.5,261.0 L795.0,261.4 L798.5,261.8 L802.0,262.3 L805.5,262.7 L809.0,263.5 L812.5,263.5 L816.1,265.6 L819.9,267.5 L823.9,268.8 L827.5,271.0 L831.4,271.9 L834.9,273.7 L838.6,275.1 L842.5,276.0 L846.2,277.3 L850.0,278.5 L853.5,280.1 L856.7,282.3 L859.8,284.6 L863.2,286.5 L866.5,288.5 L869.8,290.5 L873.4,291.9 L876.8,293.8 L880.0,296.0 L883.8,295.7 L887.5,296.0 M850.0,261.0 L853.8,260.4 L857.5,259.9 L861.3,259.5 L865.0,258.7 L868.8,258.0 L872.5,257.5 L876.2,256.6 L880.0,256.0 L882.0,259.0 L884.3,261.8 L885.8,265.1 L888.2,267.9 L890.0,271.0 L893.5,272.0 L897.1,272.5 L900.7,273.0 L904.3,273.6 L907.9,274.4 L911.4,275.4 L915.0,276.0 M878.8,246.0 L879.9,249.4 L881.5,252.6 L882.5,256.0 L886.0,255.5 L889.5,255.8 L893.0,255.7 L896.5,255.5 L900.0,255.2 L903.5,255.4 L907.0,254.8 L910.5,254.9 L914.0,254.9 L917.5,255.2 L921.0,254.8 M910.0,273.5 L907.4,276.2 L904.8,278.9 L902.5,282.0 L900.2,284.9 L897.7,287.7 L894.7,290.1 L892.4,293.1 L890.0,296.0 M355.0,343.5 L355.5,347.4 L356.1,351.3 L356.1,355.3 L356.3,359.2 L356.8,363.1 L357.3,367.1 L357.5,371.0 L359.0,374.4 L360.5,377.8 L362.7,380.9 L364.5,384.2 L365.9,387.6 L367.5,391.0 L370.7,393.5 L373.7,396.1 L377.0,398.3 L380.0,401.0 L383.2,402.9 L386.6,404.5 L390.0,406.0 L393.4,407.5 L396.5,409.7 L400.0,411.0 L401.6,414.4 L402.8,418.1 L404.7,421.4 L406.2,424.9 L407.5,428.5 M365.0,296.0 L368.6,298.7 L372.5,301.0 L372.0,304.6 L370.9,308.0 L370.6,311.6 L370.2,315.2 L369.6,318.7 L368.8,322.3 L368.0,325.8 L367.1,329.3 L367.2,332.9 L366.3,336.4 L365.9,340.0 L365.0,343.5 M372.5,301.0 L373.3,304.7 L375.0,308.2 L376.3,311.8 L377.4,315.4 L378.3,319.2 L379.0,322.9 L380.2,326.5 L381.4,330.1 L382.3,333.8 L383.5,337.5 L385.0,341.0 L388.2,342.8 L391.4,344.5 L394.2,346.9 L397.4,348.7 L400.8,350.1 L403.7,352.4 L406.9,354.0 L410.0,356.0 M230.0,461.0 L233.4,460.0 L236.8,459.1 L240.2,458.0 L243.5,457.0 L247.0,456.3 L250.4,455.4 L254.0,455.0 L257.2,453.4 L260.8,453.2 L264.0,451.7 L267.5,450.9 L271.0,450.3 L274.4,449.4 L277.7,448.2 L281.0,447.0 L284.5,446.4 L287.9,445.4 L291.5,445.0 L294.7,443.5 L298.2,442.7 L301.7,442.2 L305.0,441.0 L307.2,438.0 L309.9,435.5 L312.7,432.9 L315.2,430.1 L317.2,427.0 L319.7,424.2 L322.2,421.5 L325.2,419.2 L327.4,416.1 L330.0,413.5 L333.8,413.4 L337.5,413.2 L341.2,412.4 L345.0,412.2 L348.8,412.3 L352.5,413.0 L356.2,413.0 L360.0,412.9 L363.7,413.5 L367.5,413.5 L369.9,410.9 L372.4,408.4 L374.7,405.7 L377.6,403.6 L380.0,401.0 M377.5,413.5 L377.2,417.0 L377.4,420.5 L377.1,424.0 L377.9,427.5 L377.5,431.0 M482.5,393.5 L485.8,394.9 L489.0,396.7 L492.0,398.7 L495.3,400.3 L498.7,401.5 L502.0,403.0 L505.2,404.8 L508.4,406.4 L511.5,408.4 L515.0,409.4 L518.0,411.5 L521.2,413.1 L524.4,414.8 L527.7,416.3 L531.0,417.8 L534.3,419.3 L537.5,421.0 M546.0,331.0 L543.3,328.6 L540.7,326.1 L538.4,323.3 L535.4,321.2 L532.9,318.7 L530.6,315.9 L527.7,313.6 L525.0,311.3 L522.4,308.8 L520.1,306.0 L517.5,303.5 L514.9,299.8 L512.5,296.0 M359.0,494.0 L361.6,491.5 L363.9,488.8 L366.3,486.1 L368.2,483.0 L370.4,480.2 L372.8,477.5 L375.3,474.9 L377.8,472.3 L380.0,469.5 L382.0,465.2 L384.0,461.0 L384.1,457.0 L384.6,453.0 L385.0,449.0 L387.1,445.9 L389.1,442.7 L391.2,439.6 L393.2,436.5 L395.1,433.2 L397.0,430.0 L398.9,426.8 L401.6,424.2 L403.4,420.9 L405.7,418.0 L407.8,414.9 L410.0,412.0 L412.6,409.2 L414.8,405.9 L417.3,403.0 L419.8,400.0 L422.3,397.0 L425.2,394.4 L427.5,391.3 L430.0,388.3 L432.8,385.8 L435.7,383.5 L438.8,381.5 L441.4,378.8 L444.1,376.3 L447.3,374.3 L450.0,371.7 L453.4,370.1 L456.8,368.7 L459.9,366.4 L463.3,365.0 L466.8,363.6 L470.0,361.7 L473.5,360.8 L477.0,359.7 L480.2,357.8 L483.8,356.9 L487.2,355.6 L490.6,354.5 L494.3,353.9 L497.7,352.4 L501.2,351.5 L504.5,349.9 L508.1,349.1 L511.4,347.6 L514.8,346.3 L518.4,345.6 L521.9,344.5 L525.2,342.7 L528.8,341.9 L532.2,340.8 L535.6,339.3 L539.1,338.2 L542.5,336.9 L546.0,336.0 L549.7,335.5 L553.5,335.3 L557.3,335.3 L561.0,335.1 L564.7,334.5 L568.5,334.1 L572.2,334.1 L576.0,334.0 L579.6,334.8 L583.3,335.0 L586.9,335.8 L590.6,336.3 L594.1,337.4 L597.8,337.9 L601.5,338.1 L605.1,338.8 L608.7,339.6 L612.4,340.4 L616.0,341.0 L619.3,342.2 L622.8,342.8 L626.1,344.0 L629.3,345.4 L632.7,346.3 L636.1,347.3 L639.4,348.4 L642.6,349.9 L646.0,350.5 L649.3,351.8 L652.7,352.7 L656.0,353.8 L659.2,355.2 L662.5,356.4 L666.0,357.0 L669.4,357.9 L672.6,359.4 L676.1,360.1 L679.5,361.0 L682.6,362.7 L686.0,363.5 L689.4,364.4 L692.7,365.7 L696.1,366.4 L699.4,367.8 L702.9,368.5 L706.3,369.2 L709.7,370.1 L713.0,371.5 L716.3,372.6 L719.7,373.8 L723.2,374.2 L726.5,375.6 L729.9,376.4 L733.2,377.5 L736.7,378.2 L740.0,379.3 L743.4,380.5 L746.7,381.8 L750.2,382.2 L753.5,383.5 L756.8,384.7 L760.1,385.9 L763.7,386.3 L767.1,387.2 L770.3,388.8 L773.6,389.9 L777.1,390.5 L780.6,391.2 L783.8,392.8 L787.3,393.4 L790.5,394.8 L794.0,395.6 L797.3,396.7 L800.8,397.2 L804.1,398.7 L807.6,399.3 L810.9,400.4 L814.2,401.8 L817.6,402.8 L821.0,403.5 L825.1,404.1 L829.0,404.9 L833.0,406.0 L836.6,405.4 L840.2,405.0 L843.8,404.4 L847.4,403.7 L851.0,403.3 L854.6,403.2 L858.2,402.8 L861.7,401.6 L865.4,401.5 L869.0,401.2 L872.5,400.1 L876.2,400.3 L879.8,399.2 L883.4,399.1 L887.0,398.5 L890.8,397.9 L894.6,397.4 L898.3,396.5 L902.1,396.0 L905.9,395.5 L909.7,394.8 L913.5,394.3 L917.2,393.6 L921.0,393.0 M255.0,626.0 L257.3,623.3 L259.4,620.4 L262.1,618.1 L264.3,615.3 L266.5,612.5 L269.2,610.1 L271.5,607.5 L273.6,604.6 L275.8,601.8 L278.3,599.3 L280.4,596.5 L282.8,593.8 L285.3,591.3 L287.4,588.5 L290.0,586.0 L292.3,583.3 L294.4,580.4 L297.1,578.1 L299.1,575.1 L301.8,572.8 L304.2,570.1 L306.3,567.3 L308.4,564.4 L311.0,562.0 L313.3,559.3 L315.9,556.9 L317.8,553.8 L320.5,551.5 L323.0,548.9 L325.0,546.0 L327.6,543.5 L330.1,541.0 L332.2,538.0 L335.1,535.9 L337.2,533.0 L340.0,530.7 L342.4,528.0 L344.4,525.0 L347.2,522.8 L349.5,520.0 L352.2,517.5 L354.1,514.3 L356.6,511.7 L359.3,509.2 L361.3,506.2 L364.2,503.8 L366.2,500.8 L368.9,498.3 L370.9,495.2 L373.6,492.7 L376.2,490.2 L378.2,487.1 L380.6,484.4 L383.2,481.8 L385.5,479.0 L387.7,476.1 L390.4,473.6 L391.8,469.9 L393.4,466.2 L395.5,462.8 L396.9,459.1 L398.7,455.6 L400.0,451.8 L401.1,448.1 L402.9,444.6 L403.7,440.8 L405.4,437.3 L406.8,433.7 L408.0,430.0 L409.4,426.6 L411.3,423.5 L412.5,420.0 L414.1,416.7 L415.8,413.5 L417.0,410.0 L419.0,406.9 L421.8,404.4 L423.8,401.3 L425.9,398.3 L428.4,395.6 L430.4,392.4 L433.1,389.9 L435.0,386.7 L437.8,384.4 L440.4,382.0 L443.3,380.0 L445.8,377.5 L448.4,375.0 L451.4,373.0 L453.8,370.3 L456.7,368.3 L460.1,367.2 L463.3,365.4 L466.7,364.3 L470.2,363.1 L473.4,361.4 L476.7,360.0 L480.2,359.1 L483.6,357.8 L487.0,356.5 L490.5,355.4 L493.9,354.5 L497.5,353.8 L500.9,352.6 L504.4,351.6 L508.0,350.9 L511.3,349.2 L514.8,348.2 L518.3,347.5 L521.6,346.0 L525.1,344.9 L528.6,344.1 L532.0,342.9 L535.6,342.0 L539.0,340.9 L542.6,340.1 L546.0,339.0 M546.0,334.0 L549.7,333.8 L553.4,333.2 L557.2,333.2 L560.9,332.8 L564.5,332.3 L568.3,332.6 L572.0,332.0 L576.0,336.0 L573.2,339.6 L570.0,343.0 L567.2,345.9 L564.2,348.6 L561.0,351.0 L561.4,355.5 L562.0,360.0 L563.0,363.8 L564.4,367.5 L566.0,371.1 L567.4,374.7 L568.5,378.5 L571.3,380.9 L573.4,383.9 L576.0,386.5 L578.6,389.0 L580.9,391.9 L583.5,394.4 L585.7,397.3 L588.4,399.9 L591.1,402.3 L593.3,405.3 L596.3,407.5 L598.5,410.4 L601.1,413.0 L603.7,415.5 L606.3,418.1 L608.5,421.0 L611.4,423.0 L614.8,424.4 L617.6,426.6 L620.4,428.7 L623.8,430.0 L626.8,431.8 L629.6,434.0 L632.7,435.7 L635.7,437.7 L638.6,439.6 L641.9,441.0 L644.9,443.0 L647.9,444.8 L651.1,446.5 L653.7,448.9 L656.8,450.7 L659.9,452.5 L663.2,453.8 L666.0,456.0 L668.5,461.0 L671.6,463.4 L674.8,465.4 L678.2,467.4 L681.2,469.7 L684.6,471.7 L687.9,473.7 L691.0,476.0 L694.3,477.5 L697.3,479.4 L700.5,481.1 L703.5,483.1 L706.4,485.2 L709.5,487.0 L712.6,488.9 L715.7,490.6 L719.0,492.1 L722.0,494.1 L725.2,495.9 L728.1,497.9 L731.3,499.6 L734.5,501.2 L737.5,503.3 L740.5,505.3 L743.9,506.6 L746.7,508.8 L750.2,510.1 L753.2,512.0 L756.3,513.8 L759.2,516.0 L762.2,517.9 L765.4,519.6 L768.7,521.1 L771.5,523.3 L774.9,524.8 L778.0,526.5 L781.0,528.5 L783.3,531.2 L786.0,533.5 L787.1,536.9 L788.2,540.2 L789.4,543.5 L790.3,547.0 L791.9,550.2 L792.7,553.6 L794.0,556.9 L795.1,560.3 L796.5,563.5 L797.5,566.9 L798.8,570.2 L800.1,573.4 L801.4,576.8 L802.2,580.2 L803.5,583.5 M753.5,446.0 L757.8,447.8 L761.7,450.5 L766.0,452.2 L769.1,450.4 L772.4,448.6 L775.7,447.1 L779.2,446.0 L782.3,444.0 L785.5,442.2 L788.7,440.5 L792.0,438.8 L795.5,437.7 L798.7,436.0 L802.0,434.4 L805.3,432.8 L808.5,431.0 L810.8,428.3 L813.6,426.1 L815.9,423.4 L818.7,421.2 L821.2,418.7 L823.7,416.2 L826.0,413.5 L831.0,411.0 M821.0,403.5 L824.1,405.7 L826.6,408.7 L829.5,411.3 L832.4,413.8 L835.7,415.8 L838.6,418.3 L841.5,420.8 L844.4,423.2 L846.9,426.2 L850.0,428.5 L853.2,430.3 L856.5,431.7 L859.7,433.4 L863.0,434.7 L866.4,436.0 L869.8,437.4 L873.0,439.0 L876.1,441.0 L879.5,442.1 L882.8,443.8 L886.0,445.4 L889.4,446.6 L892.5,448.5 L896.0,446.9 L899.6,445.5 L903.3,444.4 L906.7,442.7 L910.3,441.2 L914.1,440.3 L917.5,438.5 L919.3,434.8 L921.0,431.0 M656.0,296.0 L658.3,298.7 L660.9,301.1 L663.5,303.5 L663.0,307.7 L661.9,311.8 L661.0,316.0 L663.5,318.5 L665.8,321.2 L668.6,323.4 L670.9,326.1 L673.5,328.5 L672.2,331.9 L671.2,335.5 L669.5,338.7 L668.8,342.4 L667.0,345.6 L666.2,349.2 L665.1,352.7 L663.5,356.0 M726.0,306.0 L727.6,309.1 L728.7,312.5 L729.9,315.8 L732.1,318.7 L733.1,322.1 L734.6,325.3 L736.0,328.5 L739.1,330.5 L742.5,331.9 L745.5,334.0 L748.8,335.7 L751.8,337.8 L755.2,339.2 L758.1,341.5 L761.5,342.9 L764.7,344.7 L767.7,346.8 L771.0,348.5 L774.0,350.5 L777.2,352.2 L779.9,354.6 L783.2,356.2 L786.0,358.5 L789.1,360.5 L792.3,362.3 L795.4,364.2 L798.7,365.9 L802.0,367.5 L805.1,369.3 L808.3,371.2 L811.3,373.3 L814.8,374.6 L817.7,377.0 L821.0,378.5 L825.2,379.0 L829.4,379.9 L833.5,381.0 M831.0,316.0 L831.0,319.6 L830.2,323.2 L830.3,326.8 L830.2,330.4 L829.6,334.0 L829.9,337.6 L829.5,341.2 L829.2,344.7 L828.8,348.3 L828.6,351.9 L828.5,355.5 L828.5,359.1 L828.3,362.7 L828.2,366.3 L827.4,369.9 L827.5,373.5 L828.2,377.3 L829.0,381.0 L830.3,384.7 L830.9,388.5 L831.5,392.3 L832.5,396.0 M832.5,323.5 L836.0,324.1 L839.5,324.2 L843.0,325.0 L846.5,325.8 L850.0,326.0 L852.6,328.4 L855.0,331.0 L859.1,331.8 L863.0,332.8 L867.0,334.2 L870.9,335.3 L875.0,336.0 M838.8,296.0 L840.0,299.7 L840.9,303.4 L841.8,307.2 L842.5,311.0 L845.7,313.4 L848.7,316.0 L852.0,318.3 L855.0,321.0 L855.1,324.6 L855.2,328.1 L854.6,331.7 L854.8,335.3 L855.3,338.9 L854.6,342.4 L855.0,346.0 L852.7,348.7 L850.1,351.1 L847.2,353.2 L844.8,355.8 L842.4,358.4 L840.0,361.0 L837.7,363.7 L835.0,366.0 L834.1,370.1 L833.6,374.4 L832.5,378.5 L836.6,377.4 L840.8,376.7 L845.0,376.0 L846.3,372.5 L848.3,369.3 L850.2,366.1 L851.8,362.7 L853.3,359.3 L855.0,356.0 L857.6,353.6 L860.0,351.0 L862.3,348.3 L865.1,346.1 L867.4,343.4 L870.1,341.1 L872.7,338.7 L875.0,336.0 L875.3,332.4 L875.8,328.9 L876.3,325.3 L876.4,321.7 L876.6,318.1 L877.3,314.6 L877.5,311.0 L879.8,308.2 L881.7,305.1 L883.6,302.1 L885.7,299.2 L887.5,296.0 M825.0,368.5 L828.2,370.1 L831.4,371.5 L834.7,372.8 L837.9,374.1 L841.0,375.7 L844.4,376.8 L847.5,378.5 L848.8,382.2 L849.8,386.1 L851.1,389.8 L852.4,393.5 L853.9,397.2 L855.0,401.0 L858.8,402.8 L862.5,404.7 L866.2,406.7 L870.0,408.5 M882.5,373.5 L886.0,373.0 L889.5,372.7 L893.0,372.5 L896.5,371.4 L900.0,371.3 L903.5,371.0 L907.0,370.2 L910.5,369.9 L914.0,369.8 L917.5,368.6 L921.0,368.5 M905.0,311.0 L909.0,311.0 L913.0,310.7 L917.0,311.2 L921.0,311.0 M205.0,468.5 L208.5,467.9 L211.9,466.6 L215.2,465.4 L218.8,464.8 L222.2,463.8 L225.7,463.0 L229.1,461.9 L232.5,461.0 M398.5,477.7 L400.3,474.0 L402.2,470.3 L403.7,466.5 L405.4,462.7 M345.0,506.0 L349.0,505.4 L353.0,505.4 L357.0,504.3 L361.0,504.1 L365.0,503.5 M290.0,581.0 L293.5,581.4 L297.0,582.2 L300.5,582.2 L303.9,583.4 L307.5,583.5 L304.3,585.4 L301.2,587.4 L297.9,589.0 L294.7,590.7 L291.6,592.8 L288.2,594.3 L285.0,596.0 L285.7,599.9 L286.1,603.8 L287.0,607.6 L287.7,611.5 L288.3,615.3 L288.6,619.3 L289.0,623.2 L290.0,627.0 M380.0,469.5 L383.5,470.9 L387.0,472.0 L390.4,473.6 L394.3,475.9 L398.5,477.7 L400.5,480.6 L402.5,483.5 L404.5,486.5 L405.9,489.7 L408.0,492.6 L407.9,496.3 L408.2,500.0 L408.5,503.6 L408.6,507.3 L408.8,511.0 L408.4,514.6 L407.3,518.1 L407.3,521.7 L406.5,525.3 L405.8,528.8 L405.3,532.4 L405.0,536.0 L404.0,539.5 L403.2,543.0 L402.0,546.5 L401.3,550.1 L399.7,553.4 L399.1,557.0 L397.7,560.4 L397.2,564.1 L396.1,567.5 L395.0,571.0 L396.2,574.4 L397.1,578.0 L398.2,581.4 L399.4,584.9 L400.0,588.5 L405.0,591.0 M408.8,508.5 L412.5,509.5 L416.3,510.0 L420.0,511.0 L421.9,515.1 L423.5,519.3 L425.0,523.5 L428.5,523.5 L432.0,523.4 L435.5,523.6 L439.0,523.6 L442.5,523.5 L443.9,528.5 L445.0,533.5 L442.3,535.8 L439.8,538.3 L437.8,541.3 L434.8,543.3 L432.5,546.0 L429.8,548.3 L427.5,551.0 L422.4,552.0 L417.5,553.5 L416.5,557.3 L414.7,560.9 L413.6,564.7 L412.5,568.5 M420.0,586.0 L418.4,589.4 L416.5,592.5 L413.9,595.3 L412.2,598.6 L410.6,601.9 L408.7,605.1 L406.8,608.2 L404.8,611.3 L402.5,614.3 L400.9,617.6 L399.1,620.8 L396.6,623.7 L395.0,627.0 M525.0,571.0 L527.8,568.7 L530.1,565.8 L533.1,563.7 L535.6,561.1 L538.3,558.7 L540.8,556.1 L543.6,553.7 L546.0,551.0 L548.7,548.7 L551.2,546.2 L553.3,543.3 L556.0,541.0 M427.5,551.0 L430.3,553.6 L433.2,556.0 L435.9,558.6 L439.0,561.0 L441.6,563.7 L444.6,566.0 L447.5,568.5 L451.1,568.5 L454.8,568.7 L458.4,568.9 L462.0,569.4 L465.7,569.3 L469.3,569.8 L473.0,569.8 L476.6,570.3 L480.2,570.5 L483.9,570.8 L487.5,571.0 L491.6,572.9 L496.0,574.0 L500.0,576.0 L503.2,573.7 L506.0,571.0 L509.0,568.5 L512.1,566.1 L515.0,563.5 L518.2,566.2 L521.7,568.4 L525.0,571.0 M417.5,581.0 L421.7,580.1 L425.9,579.7 L430.0,578.5 L433.6,578.2 L437.1,578.6 L440.7,578.6 L444.3,578.1 L447.9,578.6 L451.4,578.6 L455.0,578.5 L457.8,580.8 L461.1,582.4 L463.8,584.8 L467.0,586.5 L470.0,588.5 L474.0,589.0 L478.0,589.8 L482.0,589.6 L486.0,590.7 L490.0,591.0 L494.1,592.8 L498.4,594.2 L502.5,596.0 M525.0,571.0 L525.1,574.8 L525.9,578.5 L526.3,582.2 L526.6,586.0 L526.9,589.8 L527.7,593.5 L528.0,597.2 L528.4,601.0 L528.7,604.8 L528.9,608.5 L529.7,612.2 L530.0,616.0 L534.0,616.3 L538.0,615.9 L542.0,616.0 L546.0,616.0 M487.5,627.0 L489.9,624.3 L492.5,621.8 L495.3,619.5 L497.6,616.8 L500.2,614.2 L502.4,611.4 L504.9,608.8 L507.4,606.2 L510.0,603.8 L512.6,601.2 L515.2,598.7 L517.5,596.0 L521.7,595.6 L525.8,596.2 L530.0,596.0 M701.0,461.0 L698.7,463.8 L697.0,467.0 L695.3,470.2 L693.1,473.1 L691.0,476.0 L689.2,479.1 L687.0,481.8 L684.5,484.3 L682.6,487.3 L680.5,490.2 L678.4,493.0 L676.2,495.8 L674.3,498.7 L672.2,501.6 L670.2,504.4 L668.0,507.2 L666.0,510.1 L663.9,513.0 L662.1,516.0 L659.8,518.7 L657.8,521.6 L655.5,524.3 L653.9,527.5 L651.8,530.3 L649.8,533.2 L647.2,535.7 L645.1,538.5 L643.2,541.5 L641.3,544.4 L638.9,547.1 L636.9,549.9 L634.9,552.9 L633.0,555.9 L630.9,558.7 L628.8,561.5 L626.8,564.4 L624.6,567.2 L622.4,570.0 L620.2,572.7 L618.6,575.9 L616.2,578.5 L614.5,581.6 L612.4,584.4 L609.9,587.0 L607.9,589.9 L605.6,592.6 L603.9,595.7 L602.1,598.7 L599.8,601.4 L597.5,604.2 L595.2,606.9 L593.1,609.7 L591.4,612.8 L589.4,615.6 L587.5,618.6 L585.1,621.2 L583.3,624.3 L581.0,627.0 M556.0,502.2 L559.7,501.4 L563.4,500.6 L567.2,500.0 L571.0,499.8 L574.2,498.0 L577.1,495.7 L580.6,494.4 L583.3,492.0 L586.8,490.6 L589.6,488.2 L592.7,486.3 L596.0,484.8 L599.7,485.2 L603.5,485.2 L607.2,485.9 L611.0,486.0 L614.4,485.3 L617.9,484.8 L621.5,484.9 L624.9,484.4 L628.4,484.1 L631.9,483.6 L635.3,482.6 L638.8,482.6 L642.3,482.3 L645.8,481.6 L649.3,481.6 L652.7,480.6 L656.3,480.7 L659.7,480.1 L663.1,479.1 L666.6,478.7 L670.1,478.7 L673.6,478.4 L677.0,477.4 L680.5,477.2 L684.1,477.1 L687.5,476.2 L691.0,476.0 L694.5,475.3 L697.9,474.1 L701.2,472.8 L704.7,472.1 L708.2,471.4 L711.6,470.3 L715.1,469.6 L718.5,468.5 L722.5,468.5 L726.5,469.2 L730.5,469.1 L734.5,469.6 L738.5,469.8 L741.2,472.2 L744.1,474.4 L746.9,476.8 L749.5,479.4 L752.2,481.8 L755.0,484.1 L757.9,486.3 L760.8,488.5 L763.5,491.0 L766.5,493.2 L768.8,496.3 L771.7,498.6 L774.4,501.2 L777.5,503.4 L780.1,506.1 L782.7,508.8 L785.5,511.2 L788.5,513.5 L787.2,517.2 L786.1,521.0 L784.8,524.8 L783.5,528.5 L780.5,530.4 L777.8,532.9 L774.8,534.8 L772.0,537.0 L769.0,539.0 L766.2,541.2 L763.5,543.5 L763.7,547.2 L763.5,551.0 L761.0,553.5 L758.1,555.6 L755.2,557.7 L752.3,559.8 L749.5,561.9 L746.6,564.1 L744.3,566.8 L741.1,568.6 L738.5,571.0 L735.0,570.5 L731.5,570.2 L728.0,570.2 L724.5,570.2 L721.0,569.8 L717.5,568.2 L713.9,567.0 L710.3,565.9 L706.8,564.4 L703.1,563.6 L699.5,562.6 L696.0,561.0 L692.3,560.1 L688.6,559.1 L684.7,558.7 L681.0,557.5 L677.3,556.5 L673.5,556.0 L668.5,556.2 L663.5,556.0 L661.1,553.1 L658.6,550.2 L656.0,547.4 L653.3,544.7 L650.9,541.8 L648.7,538.7 L646.0,536.0 L644.1,532.9 L641.9,530.1 L639.6,527.3 L638.0,524.0 L636.0,521.1 L633.6,518.4 L631.7,515.3 L629.9,512.2 L627.8,509.2 L625.6,506.4 L623.5,503.5 L621.6,500.1 L619.8,496.7 L617.7,493.5 L616.0,490.0 M611.0,483.5 L614.2,481.7 L617.4,480.2 L620.9,479.0 L624.0,477.2 L627.4,475.9 L630.6,474.2 L633.9,472.7 L637.0,470.9 L640.3,469.3 L643.9,468.5 L646.9,466.5 L650.1,464.8 L653.5,463.5 L658.5,461.0 M638.5,482.2 L637.1,486.3 L635.8,490.3 L635.0,494.5 L633.5,498.5 L630.0,499.7 L626.5,501.1 L623.0,502.2 L619.6,503.9 L616.1,505.1 L612.4,505.6 L608.9,507.0 L605.5,508.5 L602.0,509.7 L598.5,511.0 L596.9,514.7 L594.7,518.0 L593.2,521.7 L591.0,525.1 L589.4,528.8 L587.6,532.3 L586.0,536.0 L586.3,540.0 L587.6,543.8 L588.5,547.7 L589.1,551.7 L589.8,555.6 L590.6,559.5 L591.0,563.5 L593.8,565.7 L596.0,568.5 L598.3,571.2 L601.0,573.5 L598.5,576.0 L595.7,578.2 L593.3,580.8 L591.2,583.7 L588.5,586.0 L587.4,589.5 L586.6,593.0 L585.8,596.6 L584.1,599.9 L583.5,603.5 L580.2,604.8 L576.7,605.7 L573.2,606.8 L569.7,607.7 L566.4,609.1 L563.1,610.4 L559.6,611.5 L556.3,612.8 L552.7,613.4 L549.3,614.5 L546.0,616.0 M691.0,476.0 L690.1,479.7 L689.1,483.3 L687.9,486.9 L686.7,490.5 L685.1,494.0 L684.0,497.6 L683.0,501.2 L682.5,505.0 L681.0,508.5 L677.6,509.5 L674.3,510.8 L671.0,512.1 L667.5,513.1 L664.5,515.1 L661.0,516.0 M663.5,556.0 L663.4,559.8 L662.5,563.5 L661.9,567.2 L661.7,571.0 L661.6,574.8 L661.0,578.5 L658.8,581.3 L656.5,584.1 L654.8,587.3 L652.5,590.0 L650.4,592.9 L648.4,595.8 L646.0,598.5 L647.0,602.0 L648.3,605.4 L649.2,608.9 L650.3,612.4 L651.0,616.0 L648.4,618.7 L646.3,621.8 L643.4,624.1 L641.0,627.0 M646.0,598.5 L649.8,599.5 L653.5,601.0 L656.0,604.0 L657.6,607.7 L660.2,610.6 L662.0,614.2 L664.2,617.4 L666.4,620.7 L669.1,623.6 L671.0,627.0 M573.5,498.5 L572.3,502.3 L571.3,506.1 L569.4,509.6 L568.2,513.4 L567.2,517.2 L566.0,521.0 L566.7,524.5 L567.4,527.9 L567.7,531.5 L568.6,534.9 L569.2,538.4 L570.2,541.8 L570.8,545.3 L571.6,548.8 L571.7,552.3 L572.5,555.8 L573.5,559.2 L573.5,562.8 L574.7,566.2 L575.2,569.7 L576.1,573.1 L576.6,576.6 L576.8,580.2 L577.9,583.6 L578.7,587.0 L579.1,590.6 L579.8,594.0 L580.0,597.6 L581.0,601.0 L577.7,603.1 L573.9,604.4 L570.9,606.9 L567.1,608.2 L563.7,610.3 L560.5,612.5 L556.9,614.1 L553.5,616.0 L554.5,619.6 L555.4,623.3 L556.0,627.0 M546.0,508.5 L549.5,510.4 L552.7,512.6 L555.8,515.1 L559.1,517.2 L562.5,519.2 L566.0,521.0 M566.0,523.5 L564.0,526.5 L561.7,529.2 L559.1,531.6 L557.4,534.8 L554.7,537.3 L552.8,540.3 L550.1,542.7 L548.5,546.0 L546.0,548.5 M868.5,461.0 L866.2,464.1 L864.3,467.5 L862.3,470.8 L860.3,474.1 L857.6,476.9 L855.6,480.3 L853.5,483.5 L853.8,487.0 L853.6,490.5 L853.2,494.0 L853.7,497.5 L853.5,501.0 L851.5,504.0 L849.9,507.3 L847.9,510.4 L845.6,513.2 L843.7,516.3 L842.2,519.6 L840.3,522.7 L838.4,525.8 L836.1,528.6 L834.3,531.8 L832.5,534.9 L830.6,538.0 L828.5,541.0 L826.3,543.9 L824.0,546.9 L821.8,549.9 L819.8,553.0 L817.9,556.1 L815.8,559.2 L813.2,561.9 L811.2,565.0 L808.9,567.9 L807.1,571.2 L804.5,573.9 L802.6,577.1 L800.1,579.8 L797.9,582.8 L796.0,586.0 L794.1,589.2 L792.5,592.5 L790.0,595.3 L788.3,598.6 L786.1,601.6 L784.6,605.0 L782.8,608.2 L780.4,611.1 L778.8,614.4 L777.0,617.7 L774.9,620.7 L772.9,623.8 L771.0,627.0 M921.0,591.0 L919.1,594.7 L916.6,598.0 L914.4,601.5 L912.2,605.0 L910.0,608.5 L909.5,612.3 L908.2,615.9 L907.4,619.5 L906.5,623.2 L906.0,627.0 M621.0,296.0 L620.7,299.8 L620.0,303.5 L619.8,307.3 L619.1,311.0 L619.3,314.8 L618.2,318.5 L617.7,322.2 L617.7,326.0 L617.2,329.7 L616.8,333.5 L616.4,337.2 L616.0,341.0 M608.5,419.8 L606.1,422.7 L602.8,424.9 L600.5,428.0 L597.8,430.8 L595.2,433.5 L592.2,436.0 L595.3,439.9 L598.0,444.0 L600.6,446.4 L603.5,448.5 L607.5,450.7 L611.0,453.5 M576.0,388.0 L573.9,390.9 L571.2,393.2 L569.0,396.0 L570.0,398.0 M548.3,226.7 L550.9,223.7 L553.6,220.8 L556.7,218.3 L561.2,217.3 L565.6,216.2 L570.0,215.0 L573.3,217.2 L576.6,219.6 L580.0,221.7 L578.6,226.0 L576.7,230.0 L573.3,230.8 L570.0,232.1 L566.8,233.7 L563.5,234.8 L560.0,235.6 L556.7,236.7 L553.3,238.3 L550.1,240.2 L546.8,241.9 L543.3,243.3 M541.7,235.0 L545.3,234.0 L548.8,232.8 L552.4,232.2 L556.1,231.5 L559.5,229.9 L563.1,229.3 L566.7,228.3 L570.4,230.2 L574.3,231.4 L577.8,233.6 L581.7,235.0 L582.2,239.2 L583.3,243.3 L580.0,245.1 L576.7,246.7 L573.2,248.1 L570.0,250.0 L566.1,250.8 L562.3,251.7 L558.3,252.2 L554.4,253.1 L550.6,254.3 L546.7,255.0 M583.3,230.0 L584.8,226.6 L586.5,223.3 L588.3,220.0 L590.0,216.7 M528.0,240.0 L530.7,236.2 L532.9,232.1 L535.0,228.0 L538.5,226.3 L541.8,224.2 L545.0,222.0 L548.3,226.7" fill="none" stroke="#1e1e1e" stroke-width="1" stroke-linejoin="round"/><path d="M205,303.5 L235,311 L267.5,321 L297.5,323.5 L310,333.5 L314,346 L322.5,361 L327.5,383.5 L352.5,408.5 L355,412.5 M366.6,202.8 L362.5,226.3 L354.3,257 L351.2,271.3 L356.3,285.6 L359.4,295.8 L350,321 L337.5,353.5 L341,381 L350,406 L355,421 L367.5,426 L372.5,436 L367.5,461 L355,473.5 L350,491 L341,503.5 L342.5,526 L323.8,546.7 L310,538.5 L300,537 L284.3,537 L279.3,540.3 L281,552 L287.6,563.7 L288,575 L286,580.5 L278,587 L274.2,587.2 L219,568.8 L217.4,565.4 L205,558.7 M300,536 L323.8,546.7 L331.7,560 L332.6,575.8 L322.9,596.9 L321,609 L326.4,619.7 L342.2,627 L363.3,627 L388,614.5 L409.1,596.9 L412.6,579.3 L419.7,560 L426.7,558.2 L439,572.2 L476,574 L511,586.3 L511,595.1 L490,611 L485.6,627 M533.3,220 L537.5,235 L535,246.7 L528.3,256.7 L528.3,265 L523.3,275 L521.7,283.3 L511.7,291.7 L501.7,303.3 L493.3,308.3 L491.7,313.3 L483.3,320 L476.7,326.7 L470,335 L460.8,346.7 L450,360 L436.7,368.3 L421.7,380.2 L402.5,401 L392.5,403.5 L390,413.5 L387.5,426 L372.5,441 M472.5,233.3 L475,245 L493.3,265 L501.7,276.7 L511.7,291.7" fill="none" stroke="#3a66d8" stroke-width="1.6" stroke-linejoin="round"/><rect x="457.2" y="319.2" width="9" height="9" fill="#f4a31c" stroke="#7a5a20" stroke-width="0.8"/><rect x="471.8" y="376.1" width="9" height="9" fill="#f4a31c" stroke="#7a5a20" stroke-width="0.8"/><rect x="402.5" y="503.9" width="9" height="9" fill="#f4a31c" stroke="#7a5a20" stroke-width="0.8"/><rect x="520.5" y="584.9" width="9" height="9" fill="#f4a31c" stroke="#7a5a20" stroke-width="0.8"/><rect x="859.9" y="432.1" width="9" height="9" fill="#f4a31c" stroke="#7a5a20" stroke-width="0.8"/></svg>
<div class="a" style="left:2px;top:631px;width:1360px;height:28px;background:#f0efed"></div>
<div class="a" style="left:2px;top:630px;width:1360px;height:1px;background:#cfccc7"></div>
<div class="a" style="left:6px;top:631px;width:273px;height:25px;background:#fff;border:1px solid #bcb9b4;border-radius:3px"></div>
<svg class="a" style="left:14px;top:637px" width="14" height="14" viewBox="0 0 14 14"><circle cx="5.5" cy="5.5" r="4.2" fill="none" stroke="#888" stroke-width="1.3"/><path d="M8.5,8.5L12.5,12.5" stroke="#888" stroke-width="1.5"/></svg>
<div class="a" style="left:35px;top:636.3px;font-size:15px;line-height:15px;font-weight:normal;color:#8a8a8a;white-space:nowrap;">Type to locate (Ctrl+K)</div>
<div class="a" style="left:469px;top:637.0px;font-size:13px;line-height:13px;font-weight:normal;color:#1a1a1a;white-space:nowrap;letter-spacing:-0.3px">Coordinate</div>
<div class="a" style="left:533px;top:632px;width:117px;height:23px;background:#fff;border:1px solid #bcb9b4;border-radius:3px"></div>
<div class="a" style="left:544px;top:636.66px;font-size:13.4px;line-height:13.4px;font-weight:normal;color:#1a1a1a;white-space:nowrap;letter-spacing:-0.4px">20.5355,-33.9815</div>
<svg class="a" style="left:653px;top:634px" width="18" height="19" viewBox="0 0 18 19"><ellipse cx="9" cy="11" rx="5.5" ry="7" fill="#777" stroke="#333"/><path d="M9,4V10M4,10H14" stroke="#eee"/><path d="M3,3L16,16M15,2Q17,4 16,6" stroke="#333" stroke-width="1.2" fill="none"/></svg>
<div class="a" style="left:683px;top:637.0px;font-size:13px;line-height:13px;font-weight:normal;color:#1a1a1a;white-space:nowrap;letter-spacing:-0.2px">Scale</div>
<div class="a" style="left:715px;top:632px;width:97px;height:23px;background:#fff;border:1px solid #bcb9b4;border-radius:3px"></div>
<div class="a" style="left:791px;top:633px;width:1px;height:21px;background:#ccc9c4"></div>
<div class="a" style="left:792px;top:633px;width:19px;height:21px;background:linear-gradient(#fbfbfa,#f0efed)"></div>
<svg class="a" style="left:797px;top:641px" width="9" height="5" viewBox="0 0 9 5"><path d="M0,0H9L4.5,4.5z" fill="#333"/></svg>
<div class="a" style="left:719px;top:636.66px;font-size:13.4px;line-height:13.4px;font-weight:normal;color:#1a1a1a;white-space:nowrap;letter-spacing:-0.3px">1:53664</div>
<svg class="a" style="left:823px;top:635px" width="13" height="17" viewBox="0 0 13 17"><path d="M3,8V5Q3,1.5 6.5,1.5Q10,1.5 10,5V8" fill="none" stroke="#666" stroke-width="1.8"/><rect x="1" y="8" width="11" height="8" rx="1" fill="#666"/></svg>
<div class="a" style="left:846px;top:637.0px;font-size:13px;line-height:13px;font-weight:normal;color:#1a1a1a;white-space:nowrap;letter-spacing:-0.3px">Magnifier</div>
<div class="a" style="left:902px;top:632px;width:97px;height:24px;background:#fff;border:1px solid #bcb9b4;border-radius:3px"></div>
<div class="a" style="left:985px;top:633px;width:1px;height:22px;background:#ddd"></div>
<svg class="a" style="left:987px;top:635px" width="10" height="18" viewBox="0 0 10 18"><path d="M1,6L5,2L9,6" fill="none" stroke="#444" stroke-width="1.3"/><path d="M1,12L5,16L9,12" fill="none" stroke="#444" stroke-width="1.3"/></svg>
<div class="a" style="left:907px;top:636.66px;font-size:13.4px;line-height:13.4px;font-weight:normal;color:#1a1a1a;white-space:nowrap;letter-spacing:-0.3px">100%</div>
<div class="a" style="left:1009px;top:637.0px;font-size:13px;line-height:13px;font-weight:normal;color:#1a1a1a;white-space:nowrap;letter-spacing:-0.3px">Rotation</div>
<div class="a" style="left:1065px;top:632px;width:94px;height:24px;background:#fff;border:1px solid #bcb9b4;border-radius:3px"></div>
<div class="a" style="left:1145px;top:633px;width:1px;height:22px;background:#ddd"></div>
<svg class="a" style="left:1147px;top:635px" width="10" height="18" viewBox="0 0 10 18"><path d="M1,6L5,2L9,6" fill="none" stroke="#444" stroke-width="1.3"/><path d="M1,12L5,16L9,12" fill="none" stroke="#444" stroke-width="1.3"/></svg>
<div class="a" style="left:1069px;top:636.66px;font-size:13.4px;line-height:13.4px;font-weight:normal;color:#1a1a1a;white-space:nowrap;letter-spacing:-0.3px">0.0 °</div>
<svg class="a" style="left:1166px;top:637px" width="13" height="13" viewBox="0 0 13 13"><rect x="0.5" y="0.5" width="12" height="12" fill="#fff" stroke="#a5a29d"/><path d="M3,6.5L5.5,10.5L10,2" stroke="#111" stroke-width="1.7" fill="none"/></svg>
<div class="a" style="left:1184px;top:637.0px;font-size:13px;line-height:13px;font-weight:normal;color:#1a1a1a;white-space:nowrap;letter-spacing:-0.3px">Render</div>
<svg class="a" style="left:1241px;top:636px" width="17" height="16" viewBox="0 0 17 16"><circle cx="8.5" cy="8" r="6.5" fill="none" stroke="#777" stroke-width="1.1"/><path d="M2,8H15M8.5,1.5V14.5M4,3.5Q8.5,8 4,12.5M13,3.5Q8.5,8 13,12.5M3,5H14M3,11H14" stroke="#777" stroke-width="0.8" fill="none"/></svg>
<div class="a" style="left:1261px;top:637.0px;font-size:13px;line-height:13px;font-weight:normal;color:#1a1a1a;white-space:nowrap;letter-spacing:-0.6px">EPSG:4326</div>
<svg class="a" style="left:1338px;top:636px" width="17" height="16" viewBox="0 0 17 16"><path d="M8.5,1C13,1 16,3.5 16,7C16,10.5 13,13 8.5,13L4,15.5L5,12C2.5,11 1,9 1,7C1,3.5 4,1 8.5,1z" fill="#555"/><circle cx="5" cy="7" r="1.2" fill="#fff"/><circle cx="8.5" cy="7" r="1.2" fill="#fff"/><circle cx="12" cy="7" r="1.2" fill="#fff"/></svg>
</body></html>
